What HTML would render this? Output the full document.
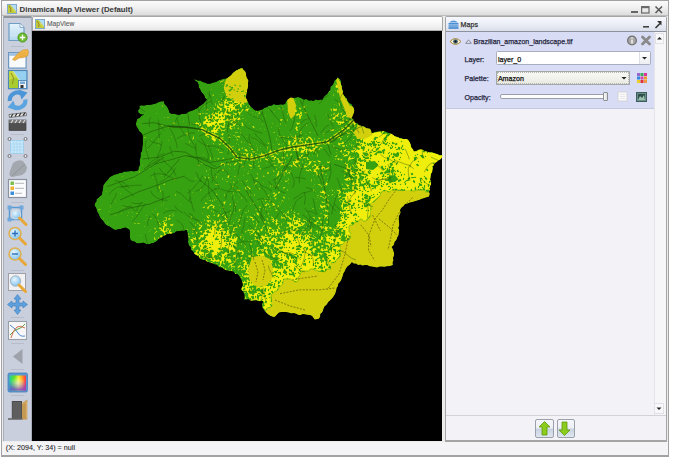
<!DOCTYPE html>
<html><head><meta charset="utf-8">
<style>
*{margin:0;padding:0;box-sizing:border-box}
html,body{width:693px;height:457px;overflow:hidden;background:#fff;font-family:"Liberation Sans",sans-serif;position:relative}
.a{position:absolute}
.t{position:absolute;white-space:nowrap;font-size:7.1px;line-height:8px;color:#25253c;-webkit-text-stroke:0.25px currentColor}
svg{overflow:visible}
</style></head><body>
<!-- window frame -->
<div class="a" style="left:1px;top:0;width:668px;height:457px;background:#a2a2a2"></div>
<div class="a" style="left:2px;top:1px;width:665.5px;height:453.5px;background:#ececec"></div>
<!-- title bar -->
<div class="a" style="left:2px;top:1px;width:666px;height:15px;background:linear-gradient(#fbfbfb,#f0f0f0 45%,#dadada)"></div>
<div class="a" style="left:2px;top:15px;width:666px;height:1px;background:#bdbdbd"></div>
<svg class="a" style="left:7px;top:4px" width="10" height="10" viewBox="0 0 10 10">
<rect x="0.5" y="0.5" width="9" height="9" fill="#b4dcf2" stroke="#7fa8cc"/>
<path d="M1 9 L1 1 L3.5 1 L9 7.5 L9 9 Z" fill="#c2cc3a"/><path d="M2 2 L4 5 L3.5 8" stroke="#8c7a2a" stroke-width="0.9" fill="none"/><path d="M5 4 L8 8" stroke="#e8e070" stroke-width="0.8"/>
</svg>
<div class="t" style="left:19.6px;top:5.8px;font-size:7.8px;font-weight:bold;color:#3a3a3a;letter-spacing:0px;-webkit-text-stroke:0.05px currentColor">Dinamica Map Viewer (Default)</div>
<svg class="a" style="left:628px;top:4px" width="38" height="10" viewBox="0 0 38 10">
<rect x="3" y="7" width="7" height="2" fill="#666"/>
<rect x="13.6" y="2.6" width="7.4" height="6.4" fill="none" stroke="#6a6a6a" stroke-width="1.2"/><rect x="13.6" y="2.4" width="7.4" height="1.8" fill="#6a6a6a"/>
<path d="M27.5 2.5 L34 9 M34 2.5 L27.5 9" stroke="#555" stroke-width="1.5"/>
</svg>

<!-- left toolbar -->
<div class="a" style="left:3px;top:16px;width:29px;height:425px;background:#a9aeb8"></div>
<div class="a" style="left:4px;top:18px;width:27px;height:423px;background:#c9cfdc"></div>
<div class="a" style="left:4px;top:16px;width:27px;height:2px;background:#8f949c"></div>

<svg class="a" style="left:0;top:0" width="40" height="457" viewBox="0 0 40 457">
<defs>
<linearGradient id="pg" x1="0" y1="0" x2="0" y2="1"><stop offset="0" stop-color="#e6f4fc"/><stop offset="1" stop-color="#b4d8ee"/></linearGradient>
<linearGradient id="mg" x1="0" y1="0" x2="0" y2="1"><stop offset="0" stop-color="#ffffff"/><stop offset="1" stop-color="#b8d8f0"/></linearGradient>
<radialGradient id="lens" cx="0.4" cy="0.35" r="0.7"><stop offset="0" stop-color="#e8f6ff"/><stop offset="1" stop-color="#7cc0ec"/></radialGradient>
<linearGradient id="rb" x1="0" y1="0" x2="1" y2="1"><stop offset="0" stop-color="#ff3030"/><stop offset="0.25" stop-color="#ffd020"/><stop offset="0.5" stop-color="#40e040"/><stop offset="0.75" stop-color="#20b0ff"/><stop offset="1" stop-color="#c040ff"/></linearGradient>
<linearGradient id="hue" x1="0" y1="0" x2="1" y2="0"><stop offset="0" stop-color="#20d0a0"/><stop offset="0.3" stop-color="#60e020"/><stop offset="0.55" stop-color="#f0f020"/><stop offset="0.8" stop-color="#ff9020"/><stop offset="1" stop-color="#ff3050"/></linearGradient>
<linearGradient id="sat" x1="0" y1="0" x2="0" y2="1"><stop offset="0.35" stop-color="#6040ff" stop-opacity="0"/><stop offset="1" stop-color="#8040e0" stop-opacity="0.85"/></linearGradient>
<radialGradient id="wc" cx="0.5" cy="0.5" r="0.45"><stop offset="0" stop-color="#fff" stop-opacity="0.55"/><stop offset="1" stop-color="#fff" stop-opacity="0"/></radialGradient>
</defs>
<!-- separators -->
<g fill="#b8bdcb">
<rect x="11" y="46" width="13" height="1"/>
<rect x="11" y="134" width="13" height="1"/>
<rect x="11" y="202" width="13" height="1"/>
<rect x="11" y="270" width="13" height="1"/>
<rect x="11" y="317" width="13" height="1"/>
<rect x="11" y="343" width="13" height="1"/>
<rect x="11" y="369" width="13" height="1"/>
<rect x="11" y="395" width="13" height="1"/>
</g>
<!-- 1 new doc -->
<path d="M9 23.5 L20 23.5 L24 27.5 L24 40.5 L9 40.5 Z" fill="url(#pg)" stroke="#6f9ec4" stroke-width="1.2"/>
<path d="M20 23.5 L20 27.5 L24 27.5" fill="#fff" stroke="#6f9ec4" stroke-width="0.8"/>
<rect x="10" y="35" width="13" height="1" fill="#d4e6f2"/>
<circle cx="22.5" cy="37.5" r="4.6" fill="#6cbc2c" stroke="#3f8a18" stroke-width="0.8"/>
<path d="M22.5 34.8 V40.2 M19.8 37.5 H25.2" stroke="#fff" stroke-width="1.4"/>
<!-- 2 window + hand -->
<rect x="8.6" y="52.6" width="17.5" height="15.5" fill="#f8fafc" stroke="#6f98c0" stroke-width="1.2"/>
<rect x="9.2" y="53.2" width="16.3" height="2.6" fill="#9cc0e2"/>
<path d="M12.5 59.5 L16 55.5 L19 52.5 L23 50 L27.5 49.5 L28.5 52 L27.5 56 L23.5 57.5 L19 58 L15 60.5 Z" fill="#f2b648" stroke="#d08e2a" stroke-width="0.6"/>
<path d="M19 55 L26 52.5 M19.5 56.8 L26.5 55" stroke="#d89a38" stroke-width="0.5"/>
<!-- 3 map + floppy -->
<rect x="8.5" y="70.5" width="18.5" height="18.2" fill="#96d0f0" stroke="#4e86b8" stroke-width="1.2"/>
<path d="M9.2 71.2 L13 71.2 L22 84 L20 88 L9.2 88 Z" fill="#a8cc30"/>
<path d="M9.2 71.2 L13 71.2 L17 77 L9.2 80 Z" fill="#c8d840"/>
<path d="M11 73 L13.5 78 L12.5 84" stroke="#8a8a28" stroke-width="0.9" fill="none"/>
<path d="M13 71.2 L22 84" stroke="#e8f0a0" stroke-width="0.8"/>
<rect x="18.5" y="80.5" width="8" height="8" fill="#eef4fa" stroke="#4e86b8" stroke-width="0.9"/>
<rect x="20" y="81.5" width="5" height="2.5" fill="#7aaad6"/>
<rect x="20.5" y="85" width="3" height="3" fill="#333"/>
<!-- 4 refresh -->
<path d="M9.8 101 A7.6 7.6 0 0 1 21.5 93.8" stroke="#4c96d8" stroke-width="4.2" fill="none"/>
<path d="M18.5 89.5 L27.5 92.5 L21.5 99.5 Z" fill="#4c96d8"/>
<path d="M25.4 99.5 A7.6 7.6 0 0 1 13.6 106.6" stroke="#5aa4e0" stroke-width="4.2" fill="none"/>
<path d="M16.5 110.5 L7.5 107.5 L13.5 100.5 Z" fill="#5aa4e0"/>
<!-- 5 clapper -->
<rect x="9" y="120" width="17" height="10.5" fill="#505050" stroke="#333" stroke-width="0.6"/>
<rect x="9" y="120" width="17" height="3" fill="#777"/>
<path d="M9 114.5 L26 112.5 L26.5 115.5 L9.5 117.5 Z" fill="#eee" stroke="#333" stroke-width="0.6"/>
<path d="M11 117 L13 114 M15 116.5 L17 113.5 M19 116 L21 113 M23 115.5 L25 112.8" stroke="#333" stroke-width="1.3"/>
<path d="M11 123 L13 120 M15 123 L17 120 M19 123 L21 120 M23 123 L25 120" stroke="#ddd" stroke-width="1.2"/>
<!-- 6 selection grid -->
<rect x="10.5" y="140.5" width="13" height="13" fill="#c8e8fa" stroke="#8ccaf0" stroke-width="0.6"/>
<path d="M10.5 144 H23.5 M10.5 147 H23.5 M10.5 150 H23.5 M14 140.5 V153.5 M17 140.5 V153.5 M20 140.5 V153.5" stroke="#7cbcea" stroke-width="0.6" stroke-dasharray="1 1"/>
<g fill="#eef" stroke="#666" stroke-width="0.9"><circle cx="9.5" cy="139" r="1.5"/><circle cx="25.5" cy="139" r="1.5"/><circle cx="9.5" cy="156" r="1.5"/><circle cx="25.5" cy="156" r="1.5"/></g>
<!-- 7 gray blob -->
<path d="M13 163 Q18 159 23 161 L27 167 Q27 172 22 175 L12 177 Q8 176 10 171 Z" fill="#a3a7ae"/>
<path d="M12 176 L25 164" stroke="#8a8e94" stroke-width="0.8"/>
<!-- 8 legend -->
<rect x="8.5" y="179.5" width="18" height="18" fill="#fafcfe" stroke="#8c939e" stroke-width="1.2"/>
<rect x="10.5" y="181.5" width="3.5" height="3.5" fill="#7ac04a"/>
<rect x="10.5" y="186.5" width="3.5" height="3.5" fill="#f0b030"/>
<rect x="10.5" y="191.5" width="3.5" height="3.5" fill="#3a90d8"/>
<path d="M15 183.3 H24 M15 188.3 H24 M15 193.3 H22" stroke="#999" stroke-width="0.7"/>
<!-- 9 zoom selection -->
<rect x="9.5" y="207.5" width="12" height="12" fill="none" stroke="#5c9ad4" stroke-width="1.5"/>
<g fill="#6ea8dc"><rect x="7.5" y="205.5" width="4" height="4"/><rect x="19.5" y="205.5" width="4" height="4"/><rect x="7.5" y="217.5" width="4" height="4"/></g>
<circle cx="16" cy="214.5" r="4.5" fill="url(#lens)" stroke="#dcdfe6" stroke-width="1"/>
<path d="M19.5 218 L26 224.5" stroke="#e8a838" stroke-width="3" stroke-linecap="round"/>
<!-- 10 zoom in -->
<circle cx="15" cy="233.5" r="6" fill="url(#lens)" stroke="#e0b050" stroke-width="1.5"/>
<path d="M15 230.5 V236.5 M12 233.5 H18" stroke="#2b6fb8" stroke-width="1.4"/>
<path d="M19.5 238 L25.5 244" stroke="#e8a838" stroke-width="3" stroke-linecap="round"/>
<!-- 11 zoom out -->
<circle cx="15" cy="254" r="6" fill="url(#lens)" stroke="#e0b050" stroke-width="1.5"/>
<path d="M12 254 H18" stroke="#2b6fb8" stroke-width="1.4"/>
<path d="M19.5 258.5 L25.5 264.5" stroke="#e8a838" stroke-width="3" stroke-linecap="round"/>
<!-- 12 zoom extent -->
<rect x="8.5" y="273.5" width="17" height="17" fill="#f2f2f4" stroke="#a0a0a8" stroke-width="1"/>
<circle cx="15.5" cy="281" r="5.2" fill="url(#lens)" stroke="#a8b4c0" stroke-width="1"/>
<path d="M19 285 L25.5 291.5" stroke="#e8a838" stroke-width="3" stroke-linecap="round"/>
<!-- 13 pan -->
<path d="M17.5 294.5 L21 299 L19 299 L19 303 L23 303 L23 301 L27.5 304.5 L23 308 L23 306 L19 306 L19 310 L21 310 L17.5 314.5 L14 310 L16 310 L16 306 L12 306 L12 308 L7.5 304.5 L12 301 L12 303 L16 303 L16 299 L14 299 Z" fill="#5ea0dc" stroke="#3d7ec0" stroke-width="0.6"/>
<!-- 14 graph -->
<rect x="8.5" y="321.5" width="18" height="18" fill="#f8f8fa" stroke="#9aa0a8" stroke-width="1.1"/>
<path d="M10 325 Q16 329 18 333 Q20 337 25 336" stroke="#4a8ad0" stroke-width="1" fill="none"/>
<path d="M10 335 Q14 330 18 329 Q22 328 25 324" stroke="#5aa040" stroke-width="1" fill="none"/>
<path d="M11 338 Q13 330 17 327 Q20 325 25 328" stroke="#d06040" stroke-width="0.9" fill="none"/>
<!-- 15 triangle -->
<path d="M22.5 349 L22.5 364 L13 356.5 Z" fill="#9ea2aa"/>
<!-- 16 color -->
<rect x="8" y="373" width="19.5" height="19" rx="1.5" fill="#5a98d0" stroke="#4480bc" stroke-width="0.8"/>
<rect x="9.5" y="375.5" width="16.5" height="15" fill="url(#hue)"/>
<rect x="9.5" y="375.5" width="16.5" height="15" fill="url(#sat)"/>
<rect x="9.5" y="375.5" width="16.5" height="15" fill="url(#wc)"/>
<!-- 17 door -->
<rect x="11.8" y="401" width="10.2" height="17.5" fill="#4c4c4c"/>
<rect x="12.5" y="402" width="8.8" height="16.5" fill="#5e5e5e"/>
<path d="M22 403 L27.3 399.5 L27.3 419.5 L22 419.5 Z" fill="#c69a52"/>
<path d="M22.5 404 L26.5 401.5 L26.5 418" stroke="#e0b878" stroke-width="0.7" fill="none"/>
<rect x="8" y="418.3" width="14.5" height="1.4" fill="#5a5a5a"/>
</svg>


<!-- map view -->
<div class="a" style="left:32px;top:16px;width:411px;height:15px;background:#a7a7a7;border-radius:2px 2px 0 0"></div>
<div class="a" style="left:33px;top:17px;width:409px;height:14px;background:linear-gradient(#fefefe,#f6f6f6 50%,#e6e6e6);border-radius:1px 1px 0 0"></div>
<div class="a" style="left:33px;top:30px;width:409px;height:1px;background:#b0b0b0"></div>
<svg class="a" style="left:35px;top:19px" width="10" height="10" viewBox="0 0 10 10">
<rect x="0.5" y="0.5" width="9" height="9" fill="#b4dcf2" stroke="#7fa8cc"/>
<path d="M1 9 L1 1 L3.5 1 L9 7.5 L9 9 Z" fill="#c2cc3a"/><path d="M2 2 L4 5 L3.5 8" stroke="#8c7a2a" stroke-width="0.9" fill="none"/><path d="M5 4 L8 8" stroke="#e8e070" stroke-width="0.8"/>
</svg>
<div class="t" style="left:46.9px;top:20.3px;font-size:6.7px;color:#5c5c5c;-webkit-text-stroke:0.1px currentColor">MapView</div>
<div class="a" style="left:32px;top:31px;width:410px;height:410px;background:#000"></div>

<!-- maps panel -->
<div class="a" style="left:445px;top:16px;width:222px;height:425.5px;background:#a5a5a5;border-radius:2px 2px 0 0"></div>
<div class="a" style="left:446px;top:17px;width:220px;height:423px;background:#f3f3f7"></div>
<div class="a" style="left:446px;top:17px;width:220px;height:14px;background:linear-gradient(#f6f8fd,#eceff7 50%,#d9deea)"></div>
<div class="a" style="left:446px;top:30.5px;width:220px;height:1.5px;background:#8e929c"></div>
<svg class="a" style="left:448px;top:19px" width="11" height="10" viewBox="0 0 11 10">
<path d="M1 3.5 Q5.5 -0.5 10 3.5 Z" fill="#5a9ad8"/>
<rect x="0.5" y="4" width="10" height="1.6" fill="#4a8ed6"/><rect x="0.5" y="6.2" width="10" height="1.6" fill="#5a9ad8"/><rect x="0.5" y="8.2" width="10" height="1.6" fill="#3e86d0"/>
</svg>
<div class="t" style="left:460.6px;top:20.5px;font-size:7.1px;color:#333">Maps</div>
<svg class="a" style="left:640px;top:19px" width="24" height="10" viewBox="0 0 24 10">
<rect x="3" y="7" width="6" height="1.6" fill="#444"/>
<path d="M15.5 9 L20 4.5" stroke="#333" stroke-width="1.6"/><path d="M17 2 L21.5 2 L21.5 6.5 Z" fill="#333"/>
</svg>
<!-- layer item -->
<div class="a" style="left:446px;top:32px;width:208px;height:77px;background:#d8ddf5"></div>
<div class="a" style="left:446px;top:108px;width:208px;height:1px;background:#c3c8de"></div>
<!-- scrollbar -->
<div class="a" style="left:653.5px;top:32px;width:12.5px;height:383px;background:#f6f6f9;border-left:1px solid #e4e4ea"></div>
<div class="a" style="left:655px;top:33px;width:9px;height:11px;background:#f8f8fa;border:1px solid #e0e0e6"></div>
<svg class="a" style="left:655px;top:33px" width="9" height="11"><path d="M2 6.5 L4.5 4 L7 6.5Z" fill="#222"/></svg>
<div class="a" style="left:654px;top:403px;width:10px;height:11px;background:#f8f8fa;border:1px solid #e0e0e6"></div>
<svg class="a" style="left:654px;top:403px" width="10" height="11"><path d="M2.5 4.5 L5 7 L7.5 4.5Z" fill="#222"/></svg>
<div class="a" style="left:446px;top:415px;width:220px;height:1px;background:#d2d2d8"></div>
<!-- eye -->
<svg class="a" style="left:449px;top:37px" width="13" height="9" viewBox="0 0 13 9">
<path d="M1 4.5 Q6.5 -1.5 12 4.5 Q6.5 10.5 1 4.5Z" fill="#f4ecd0" stroke="#b08838" stroke-width="1"/>
<circle cx="6.5" cy="4.5" r="2.3" fill="#3a6070"/><circle cx="6.5" cy="4.5" r="1" fill="#111"/>
</svg>
<svg class="a" style="left:465px;top:39px" width="7" height="5" viewBox="0 0 7 5"><path d="M0.7 4.3 L3.5 0.8 L6.3 4.3Z" fill="#e6e8f4" stroke="#7a7c90" stroke-width="0.9"/></svg>
<div class="t" style="left:473.6px;top:37.8px;font-size:7.0px;color:#26263e">Brazilian_amazon_landscape.tif</div>
<svg class="a" style="left:626px;top:35px" width="27" height="12" viewBox="0 0 27 12">
<circle cx="6" cy="5.5" r="5" fill="#737373"/><circle cx="6" cy="5.5" r="3.7" fill="#a6a6a6"/>
<rect x="5.2" y="4.6" width="1.6" height="4" fill="#f0f0f0"/><rect x="5.2" y="2.4" width="1.6" height="1.4" fill="#f0f0f0"/>
<path d="M16.5 2 L23.5 9 M23.5 2 L16.5 9" stroke="#8a8a8a" stroke-width="2.8" stroke-linecap="round"/>
</svg>
<div class="t" style="left:464.6px;top:56px">Layer:</div>
<div class="t" style="left:464.6px;top:75px">Palette:</div>
<div class="t" style="left:464.6px;top:94px">Opacity:</div>
<!-- layer input -->
<div class="a" style="left:496px;top:51px;width:155px;height:14px;background:#fff;border:1px solid #a8adc0;border-radius:1.5px"></div>
<div class="a" style="left:639px;top:52px;width:11px;height:12px;background:linear-gradient(#fff,#eceef2);border-left:1px solid #dcdfe8"></div>
<svg class="a" style="left:639px;top:52px" width="11" height="12"><path d="M3 5 L5.5 7.5 L8 5Z" fill="#222"/></svg>
<div class="t" style="left:497.9px;top:56px;color:#111">layer_0</div>
<!-- palette combo -->
<div class="a" style="left:496px;top:71px;width:134px;height:14px;background:linear-gradient(#f8f9f4,#e9ebe3);border:1px solid #a3a7a8;outline:1px dotted #b8b8b0;outline-offset:-2px"></div>
<svg class="a" style="left:619px;top:72px" width="10" height="12"><path d="M2.5 5 L5 7.5 L7.5 5Z" fill="#222"/></svg>
<div class="t" style="left:497.9px;top:75px;color:#111">Amazon</div>
<svg class="a" style="left:637px;top:73px" width="10" height="10" viewBox="0 0 10 10">
<rect x="0" y="0" width="3" height="3" fill="#9966cc"/><rect x="3.5" y="0" width="3" height="3" fill="#33aa55"/><rect x="7" y="0" width="3" height="3" fill="#dd3399"/>
<rect x="0" y="3.5" width="3" height="3" fill="#3388dd"/><rect x="3.5" y="3.5" width="3" height="3" fill="#cc44aa"/><rect x="7" y="3.5" width="3" height="3" fill="#ee9922"/>
<rect x="0" y="7" width="3" height="3" fill="#eecc22"/><rect x="3.5" y="7" width="3" height="3" fill="#dd3333"/><rect x="7" y="7" width="3" height="3" fill="#ee9944"/>
</svg>
<!-- slider -->
<div class="a" style="left:500px;top:94px;width:107px;height:5px;background:#fdfdfd;border:1px solid #9a9eaa;border-radius:2px"></div>
<div class="a" style="left:603px;top:92px;width:5px;height:9px;background:linear-gradient(90deg,#fafafa,#dcdcdc);border:1px solid #8c9098;border-radius:1px"></div>
<svg class="a" style="left:617px;top:91px" width="11" height="11" viewBox="0 0 11 11">
<rect x="1" y="1" width="9" height="9" fill="#fafafa" stroke="#d4d4d8"/><path d="M3 3.5h5M3 5.5h5M3 7.5h5" stroke="#e2e2e6" stroke-width="0.8"/>
</svg>
<svg class="a" style="left:636px;top:92px" width="11" height="10" viewBox="0 0 11 10">
<rect x="0.5" y="0.5" width="10" height="9" fill="#6b8f8a" stroke="#3d5e5a"/><rect x="2" y="2" width="7" height="6" fill="#2e4e4a"/><path d="M2 8 L4 4 L6 6 L8 3 L9 8Z" fill="#9cc0b0"/>
</svg>
<!-- up/down buttons -->
<div class="a" style="left:535px;top:419px;width:19px;height:18.5px;background:linear-gradient(#f4f6fa 0%,#eef0f6 45%,#c9d2e0 55%,#dfe6ee);border:1px solid #9aa0ac;border-radius:2px"></div>
<div class="a" style="left:557px;top:419px;width:18px;height:18.5px;background:linear-gradient(#f4f6fa 0%,#eef0f6 45%,#c9d2e0 55%,#dfe6ee);border:1px solid #9aa0ac;border-radius:2px"></div>
<svg class="a" style="left:535px;top:419px" width="40" height="19" viewBox="0 0 40 19">
<path d="M9.5 2.5 L15 8 L12 8 L12 16 L7 16 L7 8 L4 8Z" fill="#8ccc1c" stroke="#5c9a10" stroke-width="0.8"/>
<path d="M29.5 16.5 L35 11 L32 11 L32 3 L27 3 L27 11 L24 11Z" fill="#8ccc1c" stroke="#5c9a10" stroke-width="0.8"/>
</svg>

<!-- status bar -->
<div class="a" style="left:2px;top:441.5px;width:665.5px;height:13px;background:#f4f4f7"></div>
<div class="t" style="left:5.8px;top:444.2px;font-size:7.2px;color:#2a2a2a;-webkit-text-stroke:0.1px currentColor">(X: 2094, Y: 34) = null</div>

<svg class="a" style="left:0;top:0" width="693" height="457" viewBox="0 0 693 457">
<defs><clipPath id="cl"><polygon points="139.3,105.8 141.6,105.2 144.1,105.5 146.4,105.0 148.8,105.0 151.3,104.6 153.8,104.0 156.3,103.2 158.6,101.9 161.1,101.2 163.8,101.3 164.7,103.9 166.6,106.0 167.9,108.0 168.9,110.2 169.4,112.5 171.7,113.9 174.4,113.7 176.9,114.4 179.3,114.7 181.6,113.9 184.0,113.9 186.3,113.5 188.9,111.6 191.9,110.7 194.4,109.5 196.9,108.4 199.0,106.5 201.3,105.0 203.4,103.4 205.2,101.5 206.9,99.4 204.9,97.9 204.4,95.4 202.8,93.7 201.3,91.9 200.1,89.5 198.7,87.2 198.5,84.4 197.4,82.2 195.3,80.7 193.8,78.8 195.9,79.7 198.0,80.6 200.4,80.6 202.6,81.9 205.0,82.5 207.7,83.7 210.7,83.5 213.1,82.4 215.9,82.0 218.2,80.6 221.0,79.6 223.8,78.8 226.6,78.2 229.1,76.8 231.3,75.0 233.1,72.6 235.3,70.8 237.9,69.4 240.1,68.2 242.6,67.9 243.4,70.1 245.4,71.3 246.0,74.1 246.3,76.9 248.4,80.6 247.9,83.1 248.1,85.6 247.5,88.1 247.0,90.4 246.7,92.8 246.3,95.2 245.6,97.5 246.9,99.9 248.3,102.3 249.3,104.9 251.3,106.9 253.0,108.4 254.6,110.0 256.9,110.7 259.6,110.3 262.2,109.5 264.4,107.8 266.9,107.1 268.9,105.4 271.7,105.6 273.8,104.1 276.0,104.8 278.3,104.7 280.5,104.2 282.8,104.4 285.0,104.1 286.0,101.5 287.8,99.4 290.7,97.5 293.2,97.9 295.7,97.4 298.2,97.1 301.1,97.9 303.8,99.4 306.4,99.0 308.7,100.6 311.3,100.3 313.6,100.9 315.7,99.3 318.1,100.2 320.2,99.4 322.5,99.4 323.5,97.2 325.1,95.5 327.1,94.0 328.2,91.9 330.1,89.9 330.4,86.8 332.6,84.9 333.8,82.5 334.5,80.2 336.6,79.0 337.6,76.9 340.4,79.7 341.3,81.8 341.1,84.3 342.3,86.3 342.0,88.8 343.2,91.0 342.9,93.4 344.1,95.6 345.6,97.3 347.2,99.0 347.9,101.3 349.4,103.0 351.6,103.9 352.6,106.0 354.0,108.2 354.4,110.7 353.7,113.2 352.5,115.4 351.8,117.9 353.8,120.1 354.8,122.8 357.4,123.1 359.2,125.3 361.7,125.8 364.0,126.2 365.9,127.9 368.1,128.6 370.5,128.7 371.2,131.1 371.5,133.6 374.5,131.7 376.7,131.4 378.9,131.2 381.1,131.2 383.3,130.7 385.9,131.8 388.5,132.7 391.2,133.6 393.1,134.8 394.8,136.2 397.1,136.6 399.1,137.6 401.3,138.0 403.5,138.9 405.9,138.7 408.0,139.6 409.9,142.5 411.2,144.6 411.2,147.3 412.9,149.2 413.9,151.4 416.4,150.5 418.8,149.4 421.6,149.3 424.1,150.6 426.7,151.4 429.3,152.2 432.1,151.9 434.6,153.3 437.2,154.1 439.7,154.8 442.4,155.3 442.1,157.6 440.5,159.3 438.4,160.4 436.6,161.9 434.6,163.2 433.3,166.1 432.6,169.1 432.2,171.8 430.9,174.3 430.6,177.0 430.1,179.4 431.2,181.9 431.0,184.3 429.9,186.7 430.1,189.2 429.0,191.5 429.7,194.1 428.9,196.4 426.5,197.3 424.1,197.9 421.7,198.8 419.4,199.8 417.0,200.5 414.6,201.3 412.2,202.0 409.7,202.4 407.5,203.6 405.0,204.0 403.5,206.1 401.3,207.7 400.0,210.0 400.5,212.7 399.3,215.2 398.7,217.8 398.8,220.5 399.1,222.9 399.2,225.3 398.3,227.7 399.2,230.1 398.8,232.5 398.5,235.1 397.3,237.3 396.4,239.7 394.5,241.9 393.7,244.9 391.6,246.9 393.1,249.8 394.0,252.9 394.0,255.3 393.0,257.7 393.4,260.2 392.5,262.5 392.8,265.0 389.9,266.1 386.8,266.2 384.4,266.8 382.0,266.6 379.5,266.5 377.2,267.4 374.7,266.9 372.1,266.6 369.6,266.2 367.2,265.0 364.9,265.0 362.6,265.5 360.3,264.5 358.0,265.0 356.2,263.5 353.7,263.5 351.9,262.0 349.9,264.6 347.3,266.6 345.7,268.7 344.8,271.1 343.4,273.3 342.7,275.8 341.9,277.9 341.2,280.1 339.9,282.0 338.2,283.7 337.9,286.1 336.6,288.0 336.0,291.1 335.0,294.1 332.9,297.3 331.4,299.0 329.9,300.6 328.2,302.1 326.7,304.5 324.4,306.5 323.4,309.2 322.3,311.9 320.2,314.0 320.2,316.6 318.7,318.7 314.7,319.5 312.3,316.3 310.1,314.9 307.5,314.8 305.1,314.2 302.8,314.0 300.4,314.9 298.0,314.8 295.8,313.5 293.4,312.9 290.8,313.4 288.5,312.4 286.1,312.0 283.8,311.9 281.4,312.1 279.0,312.4 277.4,313.9 276.0,315.8 274.2,317.1 271.0,316.3 268.7,314.7 266.5,313.0 264.7,310.8 262.3,307.6 262.0,304.4 263.1,301.3 260.7,301.0 258.3,301.2 256.0,300.2 253.6,300.5 251.1,301.0 248.9,299.5 246.4,299.6 244.0,299.7 244.4,297.0 244.2,294.3 243.3,291.7 240.9,289.4 242.5,285.4 242.3,282.0 240.9,279.0 239.4,276.6 237.7,274.3 235.2,273.9 233.6,271.8 231.3,271.1 229.0,271.1 226.9,270.4 224.8,269.6 222.9,268.3 220.7,267.5 218.6,266.7 216.9,264.9 214.6,264.4 212.5,263.5 210.0,262.8 207.5,262.0 205.4,260.2 202.7,259.9 200.3,258.9 198.8,256.7 196.5,255.4 194.4,253.7 193.0,251.5 191.1,249.7 190.5,247.0 188.5,244.8 188.0,242.1 188.2,239.6 188.1,237.1 187.6,234.7 187.3,232.2 186.5,229.8 184.1,231.1 181.3,230.6 178.8,231.3 176.2,231.4 174.1,233.2 171.6,233.5 169.1,234.1 166.6,234.4 164.7,235.5 162.8,236.8 160.9,237.9 158.7,238.6 157.4,240.8 155.5,241.9 153.5,243.0 151.3,243.6 148.8,244.2 146.4,244.3 143.9,242.8 141.5,243.0 139.0,243.6 136.6,243.3 134.8,241.8 132.5,241.2 130.5,240.0 129.9,237.5 129.7,234.9 129.9,232.3 129.4,229.7 127.3,228.5 125.0,227.5 122.9,228.2 120.7,228.9 118.5,229.1 116.4,229.9 114.1,229.7 111.9,228.2 109.9,226.7 107.4,225.7 105.3,224.2 103.1,220.9 101.1,219.1 99.7,216.8 98.7,214.3 97.4,212.2 96.7,209.9 95.9,207.6 94.4,205.6 95.0,203.3 96.3,201.4 96.6,199.0 98.5,197.7 100.1,196.0 102.0,194.7 102.1,192.5 102.5,190.3 103.1,188.1 103.1,185.9 104.3,183.8 105.8,181.8 108.0,179.5 109.7,176.9 112.2,175.8 114.5,174.5 117.1,174.0 119.6,172.9 122.0,172.8 124.2,171.5 126.7,171.6 129.0,171.3 131.4,171.0 133.8,171.3 136.1,171.0 138.3,170.0 138.5,167.6 139.7,165.3 140.0,162.9 139.5,160.4 140.3,158.1 140.6,155.7 140.5,153.3 142.0,151.1 142.2,148.7 142.3,146.3 142.9,143.9 142.8,141.5 142.6,139.2 142.7,136.8 142.3,134.4 140.9,132.4 138.8,130.9 138.0,128.5 136.4,126.6 135.9,123.9 136.4,121.3 137.3,118.7 139.8,117.7 141.5,115.4 144.2,114.7 141.0,114.4 138.3,112.8 138.0,110.4 139.6,108.2"/></clipPath></defs>
<g clip-path="url(#cl)">
<polygon points="139.3,105.8 141.6,105.2 144.1,105.5 146.4,105.0 148.8,105.0 151.3,104.6 153.8,104.0 156.3,103.2 158.6,101.9 161.1,101.2 163.8,101.3 164.7,103.9 166.6,106.0 167.9,108.0 168.9,110.2 169.4,112.5 171.7,113.9 174.4,113.7 176.9,114.4 179.3,114.7 181.6,113.9 184.0,113.9 186.3,113.5 188.9,111.6 191.9,110.7 194.4,109.5 196.9,108.4 199.0,106.5 201.3,105.0 203.4,103.4 205.2,101.5 206.9,99.4 204.9,97.9 204.4,95.4 202.8,93.7 201.3,91.9 200.1,89.5 198.7,87.2 198.5,84.4 197.4,82.2 195.3,80.7 193.8,78.8 195.9,79.7 198.0,80.6 200.4,80.6 202.6,81.9 205.0,82.5 207.7,83.7 210.7,83.5 213.1,82.4 215.9,82.0 218.2,80.6 221.0,79.6 223.8,78.8 226.6,78.2 229.1,76.8 231.3,75.0 233.1,72.6 235.3,70.8 237.9,69.4 240.1,68.2 242.6,67.9 243.4,70.1 245.4,71.3 246.0,74.1 246.3,76.9 248.4,80.6 247.9,83.1 248.1,85.6 247.5,88.1 247.0,90.4 246.7,92.8 246.3,95.2 245.6,97.5 246.9,99.9 248.3,102.3 249.3,104.9 251.3,106.9 253.0,108.4 254.6,110.0 256.9,110.7 259.6,110.3 262.2,109.5 264.4,107.8 266.9,107.1 268.9,105.4 271.7,105.6 273.8,104.1 276.0,104.8 278.3,104.7 280.5,104.2 282.8,104.4 285.0,104.1 286.0,101.5 287.8,99.4 290.7,97.5 293.2,97.9 295.7,97.4 298.2,97.1 301.1,97.9 303.8,99.4 306.4,99.0 308.7,100.6 311.3,100.3 313.6,100.9 315.7,99.3 318.1,100.2 320.2,99.4 322.5,99.4 323.5,97.2 325.1,95.5 327.1,94.0 328.2,91.9 330.1,89.9 330.4,86.8 332.6,84.9 333.8,82.5 334.5,80.2 336.6,79.0 337.6,76.9 340.4,79.7 341.3,81.8 341.1,84.3 342.3,86.3 342.0,88.8 343.2,91.0 342.9,93.4 344.1,95.6 345.6,97.3 347.2,99.0 347.9,101.3 349.4,103.0 351.6,103.9 352.6,106.0 354.0,108.2 354.4,110.7 353.7,113.2 352.5,115.4 351.8,117.9 353.8,120.1 354.8,122.8 357.4,123.1 359.2,125.3 361.7,125.8 364.0,126.2 365.9,127.9 368.1,128.6 370.5,128.7 371.2,131.1 371.5,133.6 374.5,131.7 376.7,131.4 378.9,131.2 381.1,131.2 383.3,130.7 385.9,131.8 388.5,132.7 391.2,133.6 393.1,134.8 394.8,136.2 397.1,136.6 399.1,137.6 401.3,138.0 403.5,138.9 405.9,138.7 408.0,139.6 409.9,142.5 411.2,144.6 411.2,147.3 412.9,149.2 413.9,151.4 416.4,150.5 418.8,149.4 421.6,149.3 424.1,150.6 426.7,151.4 429.3,152.2 432.1,151.9 434.6,153.3 437.2,154.1 439.7,154.8 442.4,155.3 442.1,157.6 440.5,159.3 438.4,160.4 436.6,161.9 434.6,163.2 433.3,166.1 432.6,169.1 432.2,171.8 430.9,174.3 430.6,177.0 430.1,179.4 431.2,181.9 431.0,184.3 429.9,186.7 430.1,189.2 429.0,191.5 429.7,194.1 428.9,196.4 426.5,197.3 424.1,197.9 421.7,198.8 419.4,199.8 417.0,200.5 414.6,201.3 412.2,202.0 409.7,202.4 407.5,203.6 405.0,204.0 403.5,206.1 401.3,207.7 400.0,210.0 400.5,212.7 399.3,215.2 398.7,217.8 398.8,220.5 399.1,222.9 399.2,225.3 398.3,227.7 399.2,230.1 398.8,232.5 398.5,235.1 397.3,237.3 396.4,239.7 394.5,241.9 393.7,244.9 391.6,246.9 393.1,249.8 394.0,252.9 394.0,255.3 393.0,257.7 393.4,260.2 392.5,262.5 392.8,265.0 389.9,266.1 386.8,266.2 384.4,266.8 382.0,266.6 379.5,266.5 377.2,267.4 374.7,266.9 372.1,266.6 369.6,266.2 367.2,265.0 364.9,265.0 362.6,265.5 360.3,264.5 358.0,265.0 356.2,263.5 353.7,263.5 351.9,262.0 349.9,264.6 347.3,266.6 345.7,268.7 344.8,271.1 343.4,273.3 342.7,275.8 341.9,277.9 341.2,280.1 339.9,282.0 338.2,283.7 337.9,286.1 336.6,288.0 336.0,291.1 335.0,294.1 332.9,297.3 331.4,299.0 329.9,300.6 328.2,302.1 326.7,304.5 324.4,306.5 323.4,309.2 322.3,311.9 320.2,314.0 320.2,316.6 318.7,318.7 314.7,319.5 312.3,316.3 310.1,314.9 307.5,314.8 305.1,314.2 302.8,314.0 300.4,314.9 298.0,314.8 295.8,313.5 293.4,312.9 290.8,313.4 288.5,312.4 286.1,312.0 283.8,311.9 281.4,312.1 279.0,312.4 277.4,313.9 276.0,315.8 274.2,317.1 271.0,316.3 268.7,314.7 266.5,313.0 264.7,310.8 262.3,307.6 262.0,304.4 263.1,301.3 260.7,301.0 258.3,301.2 256.0,300.2 253.6,300.5 251.1,301.0 248.9,299.5 246.4,299.6 244.0,299.7 244.4,297.0 244.2,294.3 243.3,291.7 240.9,289.4 242.5,285.4 242.3,282.0 240.9,279.0 239.4,276.6 237.7,274.3 235.2,273.9 233.6,271.8 231.3,271.1 229.0,271.1 226.9,270.4 224.8,269.6 222.9,268.3 220.7,267.5 218.6,266.7 216.9,264.9 214.6,264.4 212.5,263.5 210.0,262.8 207.5,262.0 205.4,260.2 202.7,259.9 200.3,258.9 198.8,256.7 196.5,255.4 194.4,253.7 193.0,251.5 191.1,249.7 190.5,247.0 188.5,244.8 188.0,242.1 188.2,239.6 188.1,237.1 187.6,234.7 187.3,232.2 186.5,229.8 184.1,231.1 181.3,230.6 178.8,231.3 176.2,231.4 174.1,233.2 171.6,233.5 169.1,234.1 166.6,234.4 164.7,235.5 162.8,236.8 160.9,237.9 158.7,238.6 157.4,240.8 155.5,241.9 153.5,243.0 151.3,243.6 148.8,244.2 146.4,244.3 143.9,242.8 141.5,243.0 139.0,243.6 136.6,243.3 134.8,241.8 132.5,241.2 130.5,240.0 129.9,237.5 129.7,234.9 129.9,232.3 129.4,229.7 127.3,228.5 125.0,227.5 122.9,228.2 120.7,228.9 118.5,229.1 116.4,229.9 114.1,229.7 111.9,228.2 109.9,226.7 107.4,225.7 105.3,224.2 103.1,220.9 101.1,219.1 99.7,216.8 98.7,214.3 97.4,212.2 96.7,209.9 95.9,207.6 94.4,205.6 95.0,203.3 96.3,201.4 96.6,199.0 98.5,197.7 100.1,196.0 102.0,194.7 102.1,192.5 102.5,190.3 103.1,188.1 103.1,185.9 104.3,183.8 105.8,181.8 108.0,179.5 109.7,176.9 112.2,175.8 114.5,174.5 117.1,174.0 119.6,172.9 122.0,172.8 124.2,171.5 126.7,171.6 129.0,171.3 131.4,171.0 133.8,171.3 136.1,171.0 138.3,170.0 138.5,167.6 139.7,165.3 140.0,162.9 139.5,160.4 140.3,158.1 140.6,155.7 140.5,153.3 142.0,151.1 142.2,148.7 142.3,146.3 142.9,143.9 142.8,141.5 142.6,139.2 142.7,136.8 142.3,134.4 140.9,132.4 138.8,130.9 138.0,128.5 136.4,126.6 135.9,123.9 136.4,121.3 137.3,118.7 139.8,117.7 141.5,115.4 144.2,114.7 141.0,114.4 138.3,112.8 138.0,110.4 139.6,108.2" fill="#36a211"/>
<path d="M245.25 300.25 250.75 300.75 251.25 301.75 255.75 301.75 256.25 300.75 257.75 300.75 258.75 301.75 257.75 300.25zM265.75 260.25 263.25 260.25 260.75 262.25 259.75 261.25 255.25 261.25 249.25 265.25 249.25 266.75 250.25 267.25 250.25 275.75 251.25 276.25 251.25 277.75 252.75 277.75 255.25 279.75 256.25 278.75 262.75 278.75 264.25 280.75 265.75 280.75 267.25 278.75 269.75 278.75 271.75 276.75 271.75 275.25 269.75 272.75 269.75 269.25 268.75 268.75 267.75 262.25zM429.75 192.25 425.25 192.25 424.75 190.25 415.25 190.25 414.75 191.25 391.25 190.25 389.75 192.25 388.25 192.25 385.75 190.25 384.75 191.25 382.25 191.25 380.25 194.25 380.25 195.75 373.75 202.25 370.25 203.25 370.25 205.75 371.25 206.25 371.25 209.75 370.25 210.25 370.25 216.75 365.75 221.25 363.25 221.25 361.75 219.25 360.25 219.25 357.75 222.25 355.25 222.25 352.75 225.25 350.25 225.25 349.25 226.25 349.25 231.75 351.25 233.25 350.25 238.75 348.75 240.25 345.25 241.25 342.75 244.25 340.25 245.25 340.25 249.75 341.25 250.25 340.25 256.75 336.25 260.25 335.75 262.25 334.25 262.25 333.75 263.25 331.25 262.25 330.75 269.25 327.25 269.25 324.75 272.25 317.25 271.25 316.75 270.25 314.25 270.25 313.75 269.25 310.25 269.25 308.75 271.25 302.25 271.25 300.25 274.25 300.25 275.75 298.25 277.25 298.25 280.75 296.75 282.25 295.25 282.25 290.75 279.25 284.25 279.25 283.25 280.25 283.25 283.75 278.25 288.25 278.25 289.75 276.75 291.25 275.25 291.25 271.25 295.25 272.25 305.75 270.75 307.25 267.25 308.25 265.75 311.25 262.75 308.75 262.75 307.25 262.25 308.75 269.25 315.75 270.75 315.75 273.25 317.75 275.75 317.75 276.75 315.25 279.25 312.75 290.75 312.75 291.25 313.75 294.75 313.75 295.25 314.75 297.75 314.75 298.25 315.75 301.75 315.75 302.25 314.75 311.75 315.75 315.25 320.75 319.75 319.75 319.75 318.25 320.75 317.75 320.75 314.25 322.75 312.75 323.75 308.25 327.75 305.75 327.75 304.25 330.75 301.75 330.75 300.25 334.75 296.75 334.75 295.25 336.75 292.75 336.75 290.25 337.75 289.75 337.75 287.25 338.75 286.75 338.75 284.25 340.75 282.75 340.75 281.25 343.75 276.75 343.75 273.25 345.75 271.75 346.75 268.25 351.75 264.75 352.25 262.75 354.25 264.75 357.75 264.75 358.25 265.75 361.75 265.75 362.25 266.75 368.75 265.75 369.25 266.75 371.75 266.75 372.25 267.75 385.75 267.75 386.25 266.75 391.75 266.75 392.25 265.75 393.75 265.75 393.75 257.25 394.75 256.75 394.75 252.25 393.75 251.75 392.75 247.25 394.75 245.75 395.75 241.25 396.75 240.75 397.75 237.25 399.75 235.75 399.75 230.25 398.75 229.75 398.75 227.25 399.75 226.75 399.75 215.25 401.75 213.75 400.75 209.25 402.25 207.75 403.75 207.75 405.25 204.75 408.75 204.75 410.25 202.75 418.75 201.75 421.25 199.75 423.75 199.75 426.25 197.75 428.75 197.75 430.75 194.75zM242.75 69.25 238.25 69.25 237.75 70.25 236.25 70.25 231.25 75.25 230.25 85.75 231.25 86.25 232.25 91.75 229.25 95.75 232.75 95.75 235.25 98.75 239.75 98.75 241.75 95.75 241.75 94.25 246.25 89.75 248.75 88.75 248.75 81.25 246.75 78.75 246.75 73.25z" fill="#d2cf0c" fill-rule="evenodd"/>
<path d="M262.25 303.25 262.25 304.75 262.75 304.75 262.75 303.25zM245.25 295.25 245.25 298.75 246.75 299.75zM243.25 292.25 243.25 292.75 245.75 292.75 245.75 292.25zM254.25 290.25 254.25 290.75 254.75 290.75 254.75 290.25zM260.25 282.25 260.25 282.75 261.75 282.75 261.75 282.25zM240.25 277.25 242.75 278.75 241.75 277.25zM240.25 275.25 240.25 275.75 240.75 275.75 240.75 275.25zM239.75 273.25 238.25 274.75zM234.25 273.25 235.75 274.75 235.75 273.25zM239.75 269.25 238.25 269.25 238.25 270.75zM234.25 269.25 234.25 269.75 234.75 269.75 234.75 269.25zM271.75 266.25 270.75 267.25 269.25 266.25 269.25 268.75zM273.25 265.25 273.25 265.75 273.75 265.75 273.75 265.25zM278.25 264.25 278.25 265.75 279.75 266.75 279.75 265.25zM238.25 263.25 238.25 263.75 238.75 263.75 238.75 263.25zM216.25 263.25 216.25 263.75 217.75 263.75 217.75 263.25zM275.25 262.25 275.25 265.75 276.75 265.75zM240.25 262.25 240.25 263.75 240.75 263.75 240.75 262.25zM269.25 260.25 268.25 264.75 270.25 262.75 272.75 263.75 271.75 261.25 273.75 260.25zM256.25 260.25 256.25 260.75 257.75 260.75 257.75 260.25zM266.25 259.25 266.25 260.75 266.75 260.75 266.75 259.25zM248.25 259.25 248.25 259.75 248.75 259.75 248.75 259.25zM205.25 260.25 206.25 261.75 208.75 261.75 206.75 260.75 206.75 259.25zM226.25 258.25 226.25 261.75 227.25 260.75 228.25 261.25 228.25 262.75 230.75 262.75 231.75 261.75 229.75 258.25 228.75 259.25zM245.25 257.25 245.25 258.75 246.75 258.75zM217.25 257.25 217.25 257.75 217.75 257.75 217.75 257.25zM243.75 256.25 242.75 257.25 240.25 257.25 240.25 258.75 241.75 259.75 241.75 258.25zM228.25 256.25 228.25 256.75 230.75 256.75 230.75 256.25zM248.25 255.25 248.25 256.75 252.25 258.25 252.25 260.75 251.25 261.25 251.75 262.75 251.75 261.25 253.75 260.75 253.75 258.25 251.25 257.25 250.75 255.25zM246.25 254.25 246.25 254.75 246.75 254.75 246.75 254.25zM236.75 254.25 233.25 255.25 233.25 257.75 234.25 256.75 235.25 257.25 235.25 260.75 234.25 261.25 233.25 260.25 234.25 262.75 230.25 264.25 228.25 266.25 228.75 267.75 229.75 265.25 231.25 265.25 231.25 267.75 232.25 268.75 231.25 269.25 230.75 271.25 229.25 270.25 230.25 271.75 232.75 271.75 231.75 270.75 231.75 269.25 232.75 268.75 231.75 267.75 232.25 266.75 234.75 267.75 234.75 266.25 232.25 266.25 231.75 265.25 235.75 261.75 235.75 260.25 237.25 258.75 238.75 258.75 237.75 257.25 236.75 259.25 235.75 258.75 235.75 255.25zM252.25 252.25 252.25 255.75 253.75 255.75zM250.25 250.25 250.25 250.75 250.75 250.75 250.75 250.25zM248.25 250.25 248.25 251.75 249.75 252.75zM246.25 249.25 246.25 249.75 246.75 249.75 246.75 249.25zM252.25 248.25 252.25 250.75 252.75 250.75 252.75 248.25zM318.25 246.25 317.25 247.75 319.75 248.75 319.75 246.25zM266.75 246.25 265.75 247.25 264.25 246.25 263.75 249.25 259.25 249.25 258.75 250.25 257.75 249.75 257.75 248.25 259.75 247.25 257.25 247.25 256.25 248.25 257.25 249.25 256.25 253.75 258.25 255.25 258.25 256.75 257.25 257.25 256.25 256.25 255.25 257.75 256.75 258.75 258.75 256.75 260.25 258.25 259.25 259.25 260.25 261.75 262.75 260.75 265.75 257.25 264.75 256.75 263.75 253.25 262.25 253.25 261.75 254.25 260.75 253.25 259.75 254.25 257.75 253.75 259.25 249.75 260.75 249.75 262.25 251.75 263.75 251.75 263.75 249.25 265.75 248.75 266.25 249.75 265.25 250.25 265.25 251.75 267.25 254.75 269.25 255.25 269.75 258.75 269.75 255.25 267.75 253.75 267.75 251.25 268.75 250.25 267.75 251.25 266.75 250.75 266.75 249.25 267.75 248.75zM260.75 258.25 262.75 257.75 263.25 259.75 261.25 260.25zM263.25 255.75 264.25 256.25 263.75 258.25 262.75 257.75zM258.75 255.25 259.75 254.75 261.25 256.75 259.25 257.25zM321.25 246.75 322.75 246.75 323.75 245.25 321.25 245.25zM196.75 245.25 192.25 245.25 193.25 246.75 191.25 247.75 192.75 247.75 193.25 248.75 191.25 249.75 192.75 249.75zM189.25 245.25 189.25 245.75 189.75 245.75 189.75 245.25zM140.25 244.25 140.25 244.75 140.75 244.75 140.75 244.25zM255.25 243.25 255.25 243.75 255.75 243.75 255.75 243.25zM250.25 243.25 250.25 244.75 251.75 244.75 251.75 243.25zM243.25 243.25 245.25 246.25 244.25 247.25 244.75 247.75 245.75 246.25zM241.25 243.25 241.25 244.75 241.75 244.75 241.75 243.25zM239.25 243.25 239.25 243.75 239.75 243.75 239.75 243.25zM323.25 242.25 323.25 243.75 323.75 243.75 323.75 242.25zM196.25 242.25 196.25 243.75 196.75 243.75 196.75 242.25zM252.75 240.25 251.25 240.25 251.25 241.75zM248.25 240.25 248.25 240.75 248.75 240.75 248.75 240.25zM243.25 238.25 243.25 239.75 243.75 239.75 243.75 238.25zM164.25 237.25 164.25 237.75 164.75 237.75 164.75 237.25zM157.25 237.25 159.25 239.75 160.75 239.75 159.75 238.25zM243.25 236.25 243.25 236.75 243.75 236.75 243.75 236.25zM241.75 236.25 240.25 236.25 240.25 238.75zM195.75 236.25 194.75 238.25 192.25 237.25 193.25 238.75 190.25 239.25 193.25 243.75 193.75 242.25 192.75 241.25 194.25 239.75 196.75 239.75 195.75 238.75zM192.75 239.25 193.75 238.75 194.25 239.75 193.25 240.25zM188.25 236.25 189.75 237.75 189.75 236.25zM154.25 236.25 154.25 239.75 155.75 239.75zM322.75 235.25 321.25 236.25 320.75 240.25 318.25 239.25 318.25 240.75 316.75 242.25 314.25 241.25 314.25 245.75 315.75 245.75 316.25 242.75 317.75 243.75 318.25 240.75 319.25 241.25 319.25 242.75 321.75 242.75 320.75 240.25 322.75 239.75 323.75 240.75 324.75 239.75 322.75 239.75 322.75 238.25 323.75 237.75 321.75 236.75zM160.25 235.25 160.25 236.75 161.75 237.75 162.75 235.25zM140.25 235.25 140.25 235.75 140.75 235.75 140.75 235.25zM241.25 234.25 241.25 234.75 242.75 234.75 242.75 234.25zM330.25 233.25 330.25 233.75 330.75 233.75 330.75 233.25zM193.75 233.25 192.25 233.25 192.25 234.75zM188.25 233.25 188.25 234.75 188.75 234.75 188.75 233.25zM319.25 231.25 319.75 236.75 319.75 233.25 320.75 232.25zM195.25 231.25 196.75 234.75 197.75 231.25 196.75 232.25zM192.25 231.25 192.25 231.75 192.75 231.75 192.75 231.25zM157.75 231.25 156.25 231.25 154.25 233.25 154.25 234.75 154.75 233.25zM153.75 231.25 152.25 232.75zM149.25 231.25 149.25 231.75 149.75 231.75 149.75 231.25zM317.75 230.25 315.25 231.25 317.25 232.25 317.25 233.75 315.25 234.75 317.75 233.75zM265.25 230.25 265.25 231.75 265.75 231.75 265.75 230.25zM257.25 230.25 257.25 231.75 259.75 232.75 258.75 230.25zM241.25 230.25 242.75 231.75zM180.25 230.25 180.25 230.75 181.75 230.75 181.75 230.25zM302.25 229.25 302.25 229.75 304.75 229.75 304.75 229.25zM282.25 229.25 282.25 229.75 282.75 229.75 282.75 229.25zM245.25 232.75 247.25 230.75 251.75 230.75 252.75 229.75 252.75 233.25 249.25 232.25 250.75 235.75 250.75 234.25 252.75 233.75 255.75 230.25 253.25 230.25 252.75 229.25 249.25 230.25 248.25 229.25 246.75 231.25 245.25 231.25zM249.75 233.25 250.75 232.75 251.25 233.75 250.25 234.25zM202.75 229.25 202.25 230.75 200.25 231.25 199.25 232.75 200.25 231.75 201.75 232.75zM186.25 229.25 186.25 229.75 187.75 229.75 187.75 229.25zM150.25 229.25 150.25 229.75 150.75 229.75 150.75 229.25zM191.25 228.25 192.25 229.75 194.75 229.75 194.75 228.25 193.75 229.25zM284.25 227.25 284.25 227.75 284.75 227.75 284.75 227.25zM259.25 227.25 259.25 227.75 259.75 227.75 259.75 227.25zM250.25 227.25 250.25 227.75 250.75 227.75 250.75 227.25zM155.25 227.25 154.25 228.75 155.75 229.75zM124.25 227.25 124.25 227.75 124.75 227.75 124.75 227.25zM306.25 226.25 306.25 227.75 306.75 227.75 306.75 226.25zM304.25 226.25 304.25 226.75 304.75 226.75 304.75 226.25zM144.25 226.25 144.25 226.75 144.75 226.75 144.75 226.25zM229.25 225.25 229.25 225.75 232.75 225.75 232.75 225.25zM324.25 224.25 324.25 224.75 325.75 224.75 325.75 224.25zM318.25 224.25 318.25 224.75 319.75 224.75 319.75 224.25zM264.75 224.25 262.25 227.25 262.25 228.75 260.25 229.25 261.25 231.75 262.75 229.75 262.75 227.25 264.75 225.75zM238.25 224.25 239.75 226.75 240.75 225.25zM195.25 224.25 195.25 225.75 195.75 225.75 195.75 224.25zM180.25 224.25 181.75 225.75zM281.25 223.25 281.25 225.75 281.75 225.75 281.75 223.25zM226.25 223.25 227.75 225.75 227.75 223.25zM205.25 223.25 205.25 224.75 206.25 223.75 207.25 224.25 207.25 226.75 208.25 225.75 209.75 226.75 210.75 224.25 209.25 225.25 208.75 224.25zM173.75 223.25 172.75 224.25 170.25 224.25 170.25 225.75 172.75 225.75zM137.25 223.25 137.25 223.75 139.75 223.75 139.75 223.25zM134.25 223.25 134.25 223.75 135.75 223.75 135.75 223.25zM283.25 222.25 283.25 222.75 283.75 222.75 283.75 222.25zM267.25 222.25 269.75 224.75 268.75 222.25zM251.25 222.25 252.75 222.75 253.75 224.75 253.75 223.25zM233.25 222.25 233.25 223.75 233.75 223.75 233.75 222.25zM197.25 222.25 197.25 223.75 198.75 223.75 199.25 225.75 201.25 226.25 198.25 228.25 199.75 229.75 202.75 225.25 200.25 225.25zM193.25 222.25 193.25 222.75 193.75 222.75 193.75 222.25zM159.25 222.25 159.25 223.75 160.25 224.25 159.25 225.25 159.75 225.75 160.75 224.25zM107.25 222.25 107.25 222.75 107.75 222.75 107.75 222.25zM326.25 221.25 326.25 222.75 329.75 223.75 327.75 222.75 327.75 221.25zM320.25 221.25 320.25 222.75 321.75 222.75 321.75 221.25zM279.25 221.25 279.25 221.75 279.75 221.75 279.75 221.25zM264.25 221.25 264.25 222.75 265.75 222.75 265.75 221.25zM246.25 221.25 246.25 221.75 247.75 221.75 247.75 221.25zM200.25 221.25 201.75 223.75 201.75 222.25zM150.75 221.25 149.25 222.75zM329.25 220.25 329.25 220.75 329.75 220.75 329.75 220.25zM317.75 220.25 315.75 222.25 314.25 222.25 314.25 223.75 315.75 223.75 316.25 225.75 316.75 222.25 318.75 221.75zM310.25 220.25 310.25 221.75 310.75 221.75 310.75 220.25zM308.25 220.25 309.25 224.75 311.75 226.75 309.75 224.75zM256.75 220.25 256.25 222.75 257.25 223.75 256.25 224.25 256.25 226.75 254.25 228.75 255.75 228.75 257.25 223.75 258.75 224.75 256.75 222.75zM231.25 220.25 231.25 220.75 231.75 220.75 231.75 220.25zM229.25 220.25 229.25 220.75 229.75 220.75 229.75 220.25zM206.25 220.25 208.25 222.75 209.75 220.75 210.75 222.75 210.75 220.25zM190.25 220.25 190.25 220.75 190.75 220.75 190.75 220.25zM157.25 220.25 157.25 220.75 158.75 220.75 158.75 220.25zM145.25 220.25 145.25 220.75 145.75 220.75 145.75 220.25zM303.25 219.25 303.25 220.75 305.75 220.75 306.75 222.75 306.75 221.25 305.75 220.75 306.75 219.25 305.75 220.25zM260.25 219.25 260.25 219.75 260.75 219.75 260.75 219.25zM258.25 219.25 258.25 219.75 258.75 219.75 258.75 219.25zM249.25 219.25 249.25 219.75 249.75 219.75 249.75 219.25zM240.75 219.25 238.25 219.25 239.25 220.75 237.25 221.75 238.75 221.75zM204.25 219.25 204.25 220.75 204.75 220.75 204.75 219.25zM161.75 219.25 160.25 220.75zM155.25 219.25 155.25 219.75 155.75 219.75 155.75 219.25zM336.75 218.25 335.25 219.75 336.75 219.75zM266.25 218.25 267.75 220.75 267.75 218.25zM229.25 218.25 229.25 218.75 229.75 218.75 229.75 218.25zM213.25 219.25 213.25 220.75 214.25 221.25 213.25 223.75 214.75 223.75 215.25 224.75 213.75 226.25 212.25 225.25 212.25 226.75 209.75 229.25 206.25 228.25 207.25 229.75 204.25 230.25 205.25 231.75 203.25 233.25 203.25 234.75 200.25 235.25 200.25 236.75 198.25 238.25 201.25 241.25 199.75 243.25 198.25 243.25 199.25 244.25 198.25 245.75 200.25 248.25 200.25 250.75 199.25 251.25 197.25 249.25 196.75 250.25 195.25 250.25 196.25 251.75 193.25 253.75 194.25 254.75 196.75 254.75 197.25 255.75 198.75 254.75 199.25 258.75 200.25 259.75 200.25 254.75 203.25 256.25 203.25 257.75 202.25 258.25 203.25 259.75 203.75 259.25 202.75 258.25 204.75 257.75 205.25 256.75 208.25 258.75 210.75 258.75 211.25 259.75 210.25 260.75 213.25 261.25 212.75 262.25 210.25 262.25 212.25 263.75 212.75 262.25 214.75 261.75 215.25 260.75 216.25 261.75 218.75 261.75 219.75 260.75 220.25 264.75 218.25 266.75 220.75 265.75 221.25 266.75 223.25 267.25 223.25 268.75 225.25 270.75 226.75 270.75 225.75 268.25 224.25 269.25 223.75 267.25 220.75 265.75 222.25 260.75 223.25 261.25 223.25 263.75 224.75 264.75 224.75 263.25 223.75 262.75 223.75 261.25 224.75 260.75 223.75 259.75 224.75 258.75 223.75 256.25 224.75 255.75 225.25 256.75 226.75 256.75 226.75 254.25 230.75 252.75 229.75 251.25 231.25 249.75 232.75 249.75 233.25 251.75 234.75 251.75 235.25 252.75 235.25 249.75 237.25 251.25 237.25 252.75 241.75 251.75 242.25 253.75 240.25 254.75 242.75 254.75 243.75 253.75 243.75 252.25 242.75 251.75 243.75 249.25 242.75 251.25 241.75 250.25 240.25 251.25 239.75 249.25 237.25 251.25 232.75 246.75 233.25 244.75 236.75 246.75 236.75 244.25 234.25 244.25 233.75 242.25 234.75 241.75 235.25 242.75 236.75 242.75 235.75 241.25 236.75 240.75 237.75 237.25 234.25 236.25 234.25 238.75 231.75 238.75 232.75 234.25 236.75 232.75 232.75 232.75 232.75 231.25 234.75 230.75 233.75 229.25 235.25 227.75 237.75 227.75 236.75 226.25 235.75 227.25 233.25 227.25 232.25 233.75 231.25 234.25 232.25 235.75 231.25 236.25 230.75 238.25 228.25 238.25 229.25 239.25 229.25 241.75 226.25 242.25 225.75 241.25 227.75 240.25 225.75 239.75 225.75 238.25 226.75 237.75 225.75 236.25 229.75 235.75 229.75 233.25 228.75 232.75 228.75 230.25 229.75 229.25 228.75 228.75 228.75 227.25 227.25 227.25 229.25 229.75 227.25 230.25 226.75 233.25 225.75 232.75 225.75 231.25 222.75 230.75 224.75 228.25 222.25 228.25 220.75 226.75 222.75 224.25 220.25 224.25 219.25 225.25 219.25 226.75 221.25 228.75 219.25 229.25 218.75 231.25 216.25 230.25 215.75 229.25 217.75 226.75 216.75 224.25 220.75 220.75 219.75 219.75 220.75 218.25 219.25 219.25 218.75 221.25 217.25 221.25 216.75 224.25 215.75 223.75 215.75 220.25 214.25 221.25zM211.75 258.25 212.75 257.75 214.25 259.75 212.25 260.25zM224.75 255.25 225.75 254.75 226.25 255.75 225.25 256.25zM201.75 254.25 202.75 253.75 203.25 254.75 202.25 255.25zM198.75 254.25 199.75 253.75 200.25 254.75 199.25 255.25zM216.75 252.25 217.75 251.75 218.25 252.75 217.25 253.25zM207.75 251.25 208.75 250.75 209.25 251.75 208.25 252.25zM198.25 250.75 199.25 251.25 198.75 254.25 196.75 252.75zM210.25 249.75 212.75 249.75 214.25 251.75 212.25 252.25 211.25 251.25 212.25 252.25 211.25 253.25 212.25 254.25 212.25 257.75 211.25 258.25 210.25 257.25 209.75 258.25 208.25 258.25 207.75 257.25 205.75 256.75 205.75 254.25 208.75 253.75zM202.25 248.75 203.25 249.75 205.75 248.75 206.25 249.75 208.25 250.25 207.25 251.25 208.25 252.75 205.25 253.25 204.75 257.25 203.75 256.75 203.75 252.25 200.75 251.75 200.75 250.25zM206.75 248.25 207.75 247.75 208.25 248.75 207.25 249.25zM225.75 246.75 226.25 247.75 225.25 248.75 226.75 247.75 229.25 250.25 229.25 252.75 227.25 253.25 226.75 252.25 225.25 252.25 223.75 254.25 221.25 253.25 222.25 256.75 221.25 257.25 219.25 255.25 219.25 256.75 221.25 257.25 221.25 260.75 220.25 261.25 218.75 259.25 216.25 260.25 214.75 258.75 215.75 257.25 214.25 257.25 213.75 256.25 215.25 254.75 217.75 255.75 216.75 254.25 221.25 250.75 223.75 251.75 222.75 250.75 223.75 249.25 222.75 250.25 219.25 250.25 217.75 248.25 219.75 247.75 220.25 248.75 221.75 248.75 222.25 246.75 223.25 247.75zM208.75 247.25 210.75 246.75 211.25 247.75 209.25 248.25zM231.25 244.75 232.25 245.25 231.75 247.25 230.75 246.75zM224.75 245.25 226.75 244.75 227.25 245.75 225.25 246.25zM205.75 244.75 207.25 246.75 203.25 249.25 202.75 247.25zM200.25 244.75 201.25 245.25 200.75 247.25 199.75 246.75zM226.75 244.25 227.75 243.75 228.25 244.75 227.25 245.25zM211.75 244.25 212.75 243.75 213.25 244.75 212.25 245.25zM209.75 244.25 210.75 243.75 211.25 244.75 210.25 245.25zM228.75 243.25 229.75 242.75 231.25 244.75 229.25 245.25zM225.75 243.25 226.75 242.75 227.25 243.75 226.25 244.25zM218.75 243.25 220.75 242.75 221.25 243.75 219.25 244.25zM208.75 243.25 209.75 242.75 210.25 243.75 209.25 244.25zM206.75 243.25 207.75 242.75 208.25 243.75 207.25 244.25zM204.75 243.25 205.75 242.75 206.25 243.75 205.25 244.25zM231.75 242.25 232.75 241.75 233.25 242.75 232.25 243.25zM211.75 242.25 212.75 241.75 213.25 242.75 212.25 243.25zM203.25 241.75 204.25 242.25 204.25 243.75 202.25 244.25 201.75 243.25zM218.75 241.25 219.75 240.75 220.25 241.75 219.25 242.25zM229.75 241.75 230.25 239.75 232.25 240.25 230.75 242.25zM223.75 241.75 224.25 239.75 226.25 240.25 224.75 242.25zM203.75 241.25 206.75 239.75 208.25 241.75 204.25 242.25zM234.75 237.25 235.75 236.75 236.25 237.75 235.25 238.25zM225.25 237.25 224.75 239.25 221.75 238.75 224.25 236.75zM214.75 239.25 216.75 236.75 217.25 238.75 218.75 238.75 219.25 239.75 215.25 240.25zM222.75 236.25 223.75 235.75 224.25 236.75 223.25 237.25zM221.25 235.75 222.25 236.25 221.75 238.25 220.75 237.75zM216.75 236.25 217.75 235.75 218.25 236.75 217.25 237.25zM213.25 234.75 214.25 235.25 213.75 237.25 212.75 236.75zM207.75 233.75 208.25 235.75 205.25 236.25 206.25 237.75 205.25 238.25 204.75 240.25 202.25 240.25 201.25 241.25 199.75 239.75 201.25 236.75 202.25 237.75 203.75 236.75 204.25 233.75 205.25 234.75zM223.75 234.25 225.75 232.75 227.25 234.75 224.25 235.25zM218.75 233.25 219.75 232.75 220.25 233.75 219.25 234.25zM221.25 231.75 223.25 232.25 222.75 236.25 220.75 233.75zM216.25 231.75 217.25 232.25 216.75 234.25 215.75 233.75zM219.75 230.25 221.75 229.75 222.25 230.75 220.25 231.25zM205.75 231.25 208.75 229.75 209.25 231.75 210.75 231.75 211.25 232.75 207.25 233.25zM211.25 227.75 212.25 228.25 211.75 230.25 210.75 229.75zM213.75 227.25 215.75 226.75 216.25 227.75 214.25 228.25zM211.25 218.25 211.25 218.75 211.75 218.75 211.75 218.25zM168.25 219.75 169.75 219.75 170.75 218.25 168.25 218.25zM150.25 218.25 150.25 218.75 151.75 218.75 151.75 218.25zM147.25 218.25 147.25 218.75 147.75 218.75 147.75 218.25zM103.25 218.25 103.25 218.75 103.75 218.75 103.75 218.25zM330.25 217.25 330.25 217.75 330.75 217.75 330.75 217.25zM318.25 217.25 319.25 219.75 321.25 217.75 322.75 217.75 321.25 217.25 320.25 218.25 319.75 217.25zM312.25 217.25 314.75 218.75 314.75 217.25zM236.25 217.25 236.25 217.75 236.75 217.75 236.75 217.25zM231.25 217.25 231.25 217.75 231.75 217.75 231.75 217.25zM163.25 217.25 165.75 217.75 166.25 219.75 162.25 221.25 164.25 222.25 163.25 223.25 164.25 225.75 162.25 226.25 163.25 227.25 162.75 230.25 160.75 227.25 159.25 227.25 159.25 228.75 161.25 229.25 160.25 230.75 161.75 230.75 164.25 233.25 164.25 235.75 166.75 235.75 164.75 232.75 165.25 231.75 166.75 231.75 168.25 233.75 169.75 232.75 170.25 234.75 172.75 234.75 171.75 232.25 169.75 231.75 170.75 230.75 170.75 228.25 169.75 230.25 168.75 229.75 168.75 228.25 166.25 228.25 166.25 230.75 163.75 230.75 164.75 226.25 167.75 226.25 166.75 225.75 166.75 223.25 163.75 221.75 164.25 220.75 166.75 220.75 166.75 217.25zM168.25 229.75 169.25 230.25 168.75 233.25 166.75 231.75zM166.75 229.25 167.75 228.75 168.25 229.75 167.25 230.25zM164.75 223.25 165.75 222.75 166.25 223.75 165.25 224.25zM333.25 216.25 334.75 217.75 334.75 216.25zM271.25 216.25 271.25 217.75 273.25 218.25 272.75 219.25 270.25 219.25 273.25 220.25 271.25 222.75 272.25 221.75 273.75 222.75 273.75 221.25 274.75 220.75 276.25 222.25 275.25 223.75 276.75 225.75 276.75 224.25 278.75 223.75 276.75 222.75 277.75 220.25 276.75 219.25 274.25 220.25 273.75 218.25zM274.75 220.25 275.75 219.75 276.25 220.75 275.25 221.25zM269.25 216.25 269.25 216.75 269.75 216.75 269.75 216.25zM249.25 216.25 250.25 217.75 252.25 218.25 252.25 220.75 254.75 219.75 252.75 218.75 252.75 217.25zM247.25 216.25 247.25 217.75 247.75 217.75 247.75 216.25zM242.25 216.25 242.25 216.75 242.75 216.75 242.75 216.25zM191.75 216.25 190.25 217.75 191.75 217.75zM132.25 216.25 132.25 216.75 132.75 216.75 132.75 216.25zM281.25 215.25 281.25 218.75 283.75 217.75 285.75 219.75 285.75 218.25 284.75 217.25 282.25 217.25zM264.25 215.25 264.25 215.75 264.75 215.75 264.75 215.25zM240.25 215.25 240.25 216.75 240.75 216.75 240.75 215.25zM229.25 215.25 229.25 215.75 229.75 215.75 229.75 215.25zM225.75 215.25 224.25 216.75 226.25 218.75 224.75 220.25 223.25 219.25 224.25 220.75 222.25 221.25 222.25 222.75 223.25 221.75 226.75 221.75 226.75 220.25 227.75 219.75 227.75 218.25 225.75 217.75zM225.75 219.25 226.75 218.75 227.25 219.75 226.25 220.25zM206.25 215.25 207.25 217.75 208.75 218.75 209.75 215.25 208.25 215.25 207.75 216.25zM207.75 216.25 208.75 215.75 209.25 216.75 208.25 217.25zM170.75 215.25 169.25 215.25 169.25 216.75zM146.25 215.25 146.25 215.75 146.75 215.75 146.75 215.25zM127.25 215.25 127.25 215.75 127.75 215.75 127.75 215.25zM115.25 215.25 115.25 215.75 115.75 215.75 115.75 215.25zM323.25 219.75 326.25 216.75 327.25 217.25 327.25 218.75 328.75 218.75 328.75 216.25 330.75 215.75 330.75 214.25 329.75 215.25 328.75 214.25 327.75 215.25 323.25 214.25 325.25 216.25zM326.75 216.25 327.75 215.75 328.25 216.75 327.25 217.25zM302.25 214.25 302.25 214.75 302.75 214.75 302.75 214.25zM254.25 214.25 254.25 215.75 254.75 215.75 254.75 214.25zM227.25 214.25 227.25 214.75 227.75 214.75 227.75 214.25zM219.75 214.25 218.25 214.25 217.25 216.75 218.75 216.75zM214.75 214.25 213.25 215.75 214.75 215.75zM320.25 213.25 320.25 213.75 321.75 213.75 321.75 213.25zM306.25 213.25 306.25 213.75 306.75 213.75 306.75 213.25zM267.25 213.25 268.75 214.75 268.75 213.25zM224.75 213.25 221.25 215.75 222.75 215.75zM202.25 213.25 202.25 213.75 202.75 213.75 202.75 213.25zM173.75 213.25 172.25 214.25 173.25 215.25 172.25 216.75 173.75 215.75 172.75 214.75zM158.75 213.25 157.25 213.25 157.25 216.75zM136.25 213.25 136.25 213.75 137.75 213.75 137.75 213.25zM121.25 213.25 121.25 213.75 121.75 213.75 121.75 213.25zM299.75 212.25 297.25 213.75 299.75 214.75 298.75 213.75zM256.25 212.25 257.25 214.75 258.75 215.75 258.75 213.25zM245.25 212.25 245.25 212.75 246.75 212.75 246.75 212.25zM234.25 212.25 234.25 212.75 234.75 212.75 234.75 212.25zM230.25 212.25 230.25 213.75 230.75 213.75 230.75 212.25zM220.25 212.25 220.25 212.75 220.75 212.75 220.75 212.25zM218.25 212.25 218.25 212.75 218.75 212.75 218.75 212.25zM132.25 212.25 132.25 212.75 132.75 212.75 132.75 212.25zM128.25 212.25 128.25 212.75 128.75 212.75 128.75 212.25zM305.25 211.25 305.25 211.75 305.75 211.75 305.75 211.25zM293.25 211.25 294.25 212.75 295.75 212.75zM213.25 211.25 213.25 212.75 213.75 212.75 213.75 211.25zM152.25 211.25 152.25 211.75 152.75 211.75 152.75 211.25zM109.25 211.25 109.25 211.75 109.75 211.75 109.75 211.25zM335.25 210.25 335.25 210.75 335.75 210.75 335.75 210.25zM333.25 210.25 333.25 210.75 333.75 210.75 333.75 210.25zM323.25 210.25 323.25 211.75 323.75 211.75 323.75 210.25zM298.25 210.25 298.25 210.75 299.75 210.75 299.75 210.25zM283.25 213.25 283.25 214.75 284.75 213.75 286.25 216.75 287.75 216.75 290.25 219.75 291.75 219.75 291.75 218.25 290.25 218.25 288.75 216.25 287.25 216.25 285.75 214.75 287.25 212.75 288.75 213.75 288.75 210.25 285.75 214.25zM284.75 210.25 283.25 211.75zM281.25 210.25 281.25 210.75 281.75 210.75 281.75 210.25zM248.25 210.25 248.25 211.75 248.75 211.75 248.75 210.25zM231.25 210.25 231.25 210.75 231.75 210.75 231.75 210.25zM211.25 210.25 211.25 211.75 211.75 211.75 211.75 210.25zM325.25 209.25 325.25 211.75 326.25 210.75 328.25 212.75 329.75 211.75 329.75 209.25 328.75 211.25zM291.25 209.25 291.25 210.75 291.75 210.75 291.75 209.25zM270.25 209.25 270.25 209.75 270.75 209.75 270.75 209.25zM267.25 209.25 267.25 209.75 267.75 209.75 267.75 209.25zM259.25 209.25 259.25 210.75 259.75 210.75 259.75 209.25zM255.25 209.25 255.25 209.75 256.75 209.75 256.75 209.25zM240.75 209.25 239.25 209.25 239.25 211.75zM224.25 209.25 224.25 210.75 224.75 210.75 224.75 209.25zM220.25 209.25 220.25 209.75 220.75 209.75 220.75 209.25zM155.25 209.25 155.25 209.75 155.75 209.75 155.75 209.25zM124.25 209.25 124.25 209.75 124.75 209.75 124.75 209.25zM98.25 209.25 98.25 209.75 100.75 209.75 100.75 209.25zM319.25 208.25 319.25 208.75 319.75 208.75 319.75 208.25zM312.25 208.25 312.25 208.75 313.75 208.75 313.75 208.25zM299.25 208.25 299.25 208.75 300.75 208.75 300.75 208.25zM272.25 208.25 273.75 211.75zM265.25 208.25 265.25 210.75 265.75 210.75 265.75 208.25zM263.25 208.25 263.25 208.75 263.75 208.75 263.75 208.25zM230.25 208.25 230.25 208.75 230.75 208.75 230.75 208.25zM166.25 208.25 166.25 208.75 166.75 208.75 166.75 208.25zM331.25 207.25 331.25 207.75 332.75 207.75 332.75 207.25zM290.25 207.25 290.25 207.75 290.75 207.75 290.75 207.25zM274.25 207.25 276.25 209.25 275.25 210.75 277.75 210.75 275.75 208.75 275.75 207.25zM234.25 207.25 234.25 207.75 234.75 207.75 234.75 207.25zM123.25 207.25 123.25 207.75 123.75 207.75 123.75 207.25zM110.25 207.25 110.25 207.75 110.75 207.75 110.75 207.25zM311.25 206.25 311.25 206.75 311.75 206.75 311.75 206.25zM301.25 206.25 303.75 207.75 302.75 206.25zM270.75 206.25 269.25 206.25 269.25 207.75zM223.75 206.25 222.25 207.75 223.75 207.75zM204.75 206.25 202.25 207.75 204.75 207.75zM315.75 205.25 314.25 206.75zM306.25 205.25 306.25 206.75 306.75 206.75 306.75 205.25zM294.25 205.25 293.25 208.75 294.75 209.75zM278.75 205.25 277.25 205.25 278.25 206.25 277.25 207.75 278.75 206.75zM261.75 205.25 260.75 207.25 259.25 206.25 259.25 207.75 260.75 207.75zM219.25 205.25 219.25 205.75 219.75 205.75 219.75 205.25zM161.25 205.25 161.25 205.75 161.75 205.75 161.75 205.25zM132.25 205.25 132.25 205.75 132.75 205.75 132.75 205.25zM110.25 205.25 110.25 205.75 110.75 205.75 110.75 205.25zM320.25 204.25 320.25 206.75 322.25 208.75 323.25 206.75 324.25 207.75 325.75 206.75 324.75 205.25 322.25 206.25zM296.25 204.25 296.25 204.75 296.75 204.75 296.75 204.25zM285.25 204.25 286.75 205.75zM280.25 204.25 280.25 204.75 280.75 204.75 280.75 204.25zM250.25 204.25 250.25 204.75 250.75 204.75 250.75 204.25zM243.75 204.25 242.25 205.75zM214.75 206.25 211.25 204.25 207.25 207.25 207.25 208.75 208.75 208.75 208.75 207.25 210.25 205.75 212.75 205.75 213.25 206.75 212.25 207.75 214.75 208.75 213.75 207.75zM180.25 204.25 180.25 204.75 180.75 204.75 180.75 204.25zM327.25 203.25 326.25 204.75 328.75 206.75 328.75 204.25zM269.75 204.25 267.25 203.25 264.25 205.75 266.75 205.75 267.25 203.75 268.25 204.75zM234.25 203.25 235.75 205.75 235.75 204.25zM230.75 203.25 229.25 204.75 230.75 204.75zM163.25 203.25 163.25 203.75 163.75 203.75 163.75 203.25zM332.25 202.25 332.25 202.75 332.75 202.75 332.75 202.25zM300.25 202.25 300.25 204.75 301.25 202.75 304.75 204.75 304.75 203.25zM281.25 202.25 281.25 202.75 281.75 202.75 281.75 202.25zM279.25 202.25 279.25 202.75 279.75 202.75 279.75 202.25zM276.25 202.25 277.75 203.75zM272.25 202.25 272.25 203.75 273.25 204.25 272.25 205.75 274.75 205.75 274.75 204.25zM263.25 202.25 263.25 202.75 263.75 202.75 263.75 202.25zM253.25 202.25 253.25 203.75 254.75 203.75zM250.25 202.25 250.25 202.75 250.75 202.75 250.75 202.25zM205.25 202.25 205.25 203.75 207.75 203.75zM321.25 201.25 322.25 202.75 324.75 202.75 324.75 201.25 323.75 202.25zM257.25 201.25 257.25 201.75 257.75 201.75 257.75 201.25zM237.25 201.25 237.25 201.75 237.75 201.75 237.75 201.25zM225.75 201.25 223.25 202.25 224.25 204.75zM115.25 201.25 115.25 201.75 115.75 201.75 115.75 201.25zM316.25 200.25 316.25 200.75 316.75 200.75 316.75 200.25zM281.25 200.25 283.75 201.75 282.75 200.25zM270.75 200.25 269.25 200.25 269.25 201.75zM266.75 200.25 265.25 200.25 265.25 201.75zM262.25 200.25 262.25 200.75 262.75 200.75 262.75 200.25zM212.25 200.25 212.25 201.75 212.75 201.75 212.75 200.25zM209.25 200.25 209.25 200.75 210.75 200.75 210.75 200.25zM327.25 199.25 327.25 200.75 330.25 203.25 330.75 204.75 330.75 202.25zM293.25 199.25 294.25 200.25 293.25 202.75 295.25 200.75 296.75 201.75 294.75 199.25zM216.25 199.25 216.25 199.75 216.75 199.75 216.75 199.25zM214.25 199.25 214.25 200.75 214.75 200.75 214.75 199.25zM137.25 199.25 138.75 200.75zM319.25 198.25 319.25 198.75 319.75 198.75 319.75 198.25zM305.25 198.25 305.25 199.75 305.75 199.75 305.75 198.25zM288.25 198.25 288.25 198.75 288.75 198.75 288.75 198.25zM270.25 198.25 270.25 198.75 270.75 198.75 270.75 198.25zM267.25 198.25 267.25 198.75 267.75 198.75 267.75 198.25zM264.25 198.25 264.25 198.75 265.75 198.75 265.75 198.25zM238.75 198.25 237.25 199.75zM207.25 198.25 207.25 198.75 207.75 198.75 207.75 198.25zM317.25 197.25 317.25 197.75 317.75 197.75 317.75 197.25zM303.25 197.25 303.25 197.75 303.75 197.75 303.75 197.25zM298.25 197.25 298.25 197.75 298.75 197.75 298.75 197.25zM290.25 197.25 290.25 197.75 290.75 197.75 290.75 197.25zM276.75 197.25 274.25 198.75 276.75 199.75 275.75 198.75zM246.25 197.25 246.25 197.75 246.75 197.75 246.75 197.25zM241.25 197.25 241.25 198.75 241.75 198.75 241.75 197.25zM234.25 197.25 234.25 197.75 234.75 197.75 234.75 197.25zM215.25 197.25 215.25 197.75 215.75 197.75 215.75 197.25zM209.25 197.25 209.25 197.75 209.75 197.75 209.75 197.25zM334.25 196.25 334.25 196.75 334.75 196.75 334.75 196.25zM296.25 196.25 296.25 198.75 296.75 198.75 296.75 196.25zM283.25 196.25 283.25 197.75 284.75 198.75 284.75 197.25zM320.25 195.25 320.25 196.75 321.75 196.75 324.25 198.75 326.75 197.75 325.75 195.25 324.75 198.25zM317.25 195.25 317.25 195.75 318.75 195.75 318.75 195.25zM309.25 195.25 309.25 195.75 309.75 195.75 309.75 195.25zM251.25 195.25 251.25 195.75 251.75 195.75 251.75 195.25zM231.25 195.25 231.25 195.75 231.75 195.75 231.75 195.25zM333.75 194.25 332.25 194.25 331.25 195.75zM327.25 194.25 328.25 195.75 329.75 195.75zM285.25 194.25 285.25 194.75 285.75 194.75 285.75 194.25zM269.75 194.25 267.25 195.75 268.75 195.75zM254.25 194.25 254.25 195.75 254.75 195.75 254.75 194.25zM249.25 194.25 249.25 195.75 249.75 195.75 249.75 194.25zM239.25 194.25 239.25 194.75 239.75 194.75 239.75 194.25zM224.25 194.25 224.25 195.75 224.75 195.75 224.75 194.25zM175.25 194.25 175.25 195.75 175.75 195.75 175.75 194.25zM293.25 193.25 293.25 193.75 293.75 193.75 293.75 193.25zM251.25 193.25 251.25 193.75 251.75 193.75 251.75 193.25zM227.25 193.25 227.25 193.75 227.75 193.75 227.75 193.25zM216.25 193.25 216.25 194.75 217.75 194.75zM120.25 193.25 120.25 193.75 120.75 193.75 120.75 193.25zM334.25 192.25 334.25 192.75 334.75 192.75 334.75 192.25zM276.75 193.25 275.75 194.25 274.75 193.75 274.75 192.25 272.25 193.25 275.25 194.25 273.25 196.75 274.75 196.75 276.75 194.75zM233.25 192.25 233.25 193.75 233.75 193.75 233.75 192.25zM192.25 192.25 192.25 192.75 192.75 192.75 192.75 192.25zM315.25 191.25 315.25 191.75 315.75 191.75 315.75 191.25zM311.25 191.25 311.25 191.75 311.75 191.75 311.75 191.25zM294.25 191.25 295.75 191.75 296.25 193.75 297.75 194.75 296.75 192.25zM279.75 191.25 278.25 192.25 278.25 193.75 279.75 192.75zM272.25 191.25 272.25 191.75 272.75 191.75 272.75 191.25zM106.25 191.25 106.25 191.75 106.75 191.75 106.75 191.25zM329.25 190.25 329.25 190.75 329.75 190.75 329.75 190.25zM320.25 191.25 320.25 192.75 324.25 193.25 323.25 194.75 325.75 193.75 325.75 192.25 322.75 190.25 321.75 192.25zM298.25 190.25 298.25 190.75 299.75 190.75 299.75 190.25zM160.25 190.25 160.25 191.75 160.75 191.75 160.75 190.25zM331.25 189.25 332.75 191.75 332.75 190.25zM313.25 189.25 313.25 191.75 313.75 191.75 313.75 189.25zM287.25 189.25 287.25 190.75 287.75 190.75 287.75 189.25zM237.25 189.25 237.25 190.75 240.75 190.75zM219.25 189.25 219.25 189.75 219.75 189.75 219.75 189.25zM200.25 189.25 200.25 190.75 200.75 190.75 200.75 189.25zM301.25 188.25 302.25 190.75 305.25 192.25 304.25 193.75 305.75 193.75 304.75 190.25 303.25 191.25 302.75 189.25zM258.25 188.25 259.75 189.75 259.75 188.25zM333.25 187.25 333.25 187.75 334.75 187.75 334.75 187.25zM283.25 188.75 285.75 187.25 283.25 187.25zM116.25 187.25 116.25 187.75 116.75 187.75 116.75 187.25zM313.25 186.25 313.25 186.75 313.75 186.75 313.75 186.25zM311.25 186.25 311.25 187.75 311.75 187.75 311.75 186.25zM245.25 187.25 245.25 189.75 246.75 189.75 245.75 188.75 246.25 186.75 248.75 187.75 249.25 189.75 250.75 188.75 247.75 186.25zM159.25 186.25 159.25 188.75 159.75 188.75 159.75 186.25zM334.25 185.25 334.25 185.75 334.75 185.75 334.75 185.25zM305.25 185.25 305.25 185.75 305.75 185.75 305.75 185.25zM272.25 185.25 272.25 186.75 272.75 186.75 272.75 185.25zM270.25 185.25 270.25 186.75 270.75 186.75 270.75 185.25zM233.75 185.25 232.25 186.25 232.25 188.75zM103.25 185.25 103.25 185.75 103.75 185.75 103.75 185.25zM337.25 184.25 338.75 186.75 339.75 184.25zM317.25 184.25 320.75 185.75 321.75 187.75 321.75 186.25 319.75 184.25zM314.25 184.25 314.25 184.75 314.75 184.75 314.75 184.25zM299.75 184.25 297.25 186.75 299.75 185.75zM276.25 184.25 277.25 185.75 278.75 185.75 278.75 184.25 277.75 185.25zM215.25 184.25 215.25 184.75 218.75 184.75 218.75 184.25zM349.25 183.25 349.25 183.75 349.75 183.75 349.75 183.25zM342.75 183.25 341.25 184.75 342.75 184.75zM164.75 183.25 163.25 184.75 164.75 184.75zM344.25 182.25 348.25 187.75 346.75 189.25 345.75 188.25 342.25 188.25 342.25 189.75 343.25 188.75 344.25 189.75 345.25 188.75 346.25 189.75 347.25 188.75 349.75 188.75 347.75 186.75 349.75 185.25 346.25 184.25zM327.75 183.25 326.25 182.25 325.25 184.75 323.25 185.75 324.75 185.75 325.25 184.75 326.75 185.75zM263.25 182.25 263.25 182.75 263.75 182.75 263.75 182.25zM257.75 182.25 255.25 183.25 254.25 185.75zM241.25 182.25 241.25 182.75 241.75 182.75 241.75 182.25zM230.25 182.25 230.25 182.75 230.75 182.75 230.75 182.25zM281.25 181.25 281.25 181.75 281.75 181.75 281.75 181.25zM233.25 181.25 233.25 182.75 234.75 182.75zM226.25 181.25 226.25 181.75 227.75 181.75 227.75 181.25zM337.25 180.25 338.25 181.75 339.75 180.75zM327.25 180.25 327.25 180.75 327.75 180.75 327.75 180.25zM322.25 180.25 322.25 180.75 322.75 180.75 322.75 180.25zM300.25 180.25 301.75 181.75zM276.25 180.25 276.25 180.75 276.75 180.75 276.75 180.25zM245.25 180.25 246.25 181.75 247.75 180.75 247.25 180.25 246.25 181.25zM331.25 179.25 331.25 179.75 332.75 179.75 332.75 179.25zM318.25 179.25 318.25 179.75 318.75 179.75 318.75 179.25zM314.25 179.25 314.25 179.75 314.75 179.75 314.75 179.25zM297.75 179.25 296.25 179.25 296.25 180.75zM291.75 179.25 290.75 181.25 289.25 181.25 288.25 184.75 289.25 182.75 290.75 182.75 292.75 184.75zM238.25 179.25 238.25 179.75 238.75 179.75 238.75 179.25zM225.25 179.25 225.25 179.75 225.75 179.75 225.75 179.25zM134.25 179.25 134.25 179.75 134.75 179.75 134.75 179.25zM128.25 179.25 128.25 179.75 128.75 179.75 128.75 179.25zM308.25 178.25 308.25 179.75 310.25 181.75 311.75 181.75 311.75 179.25 309.25 179.25zM230.25 178.25 230.25 178.75 230.75 178.75 230.75 178.25zM222.25 178.25 222.25 179.75 222.75 179.75 222.75 178.25zM213.25 178.25 213.25 178.75 213.75 178.75 213.75 178.25zM195.25 178.25 195.25 178.75 195.75 178.75 195.75 178.25zM174.25 178.25 174.25 179.75 175.75 179.75zM141.75 178.25 140.25 179.75zM327.25 177.25 327.25 177.75 327.75 177.75 327.75 177.25zM324.25 177.25 324.25 177.75 324.75 177.75 324.75 177.25zM291.25 177.25 291.25 177.75 291.75 177.75 291.75 177.25zM287.75 177.25 288.25 179.75 286.75 181.25 285.25 180.25 285.25 181.75 286.75 181.75 288.75 179.75zM279.25 177.25 279.25 177.75 279.75 177.75 279.75 177.25zM257.75 177.25 255.25 178.75 257.75 178.75zM209.75 177.25 208.25 177.25 208.25 178.75zM152.25 177.25 152.25 177.75 152.75 177.75 152.75 177.25zM304.25 176.25 304.25 176.75 304.75 176.75 304.75 176.25zM293.25 176.25 294.75 177.75zM234.25 176.25 234.25 176.75 235.75 176.75 235.75 176.25zM216.25 176.25 216.25 177.75 216.75 177.75 216.75 176.25zM213.25 176.25 213.25 176.75 213.75 176.75 213.75 176.25zM204.25 176.25 205.75 178.75 205.75 177.25zM122.25 176.25 122.25 176.75 122.75 176.75 122.75 176.25zM348.25 175.25 348.25 175.75 348.75 175.75 348.75 175.25zM342.25 175.25 342.25 177.75 343.25 178.25 342.25 179.75 343.25 178.75 346.25 180.75 352.75 179.75 352.75 178.25 351.25 179.25 349.75 177.25 344.25 179.25 343.75 177.25 345.75 175.25 344.25 175.25 343.75 177.25zM347.75 179.25 348.75 178.75 349.25 179.75 348.25 180.25zM332.25 175.25 333.25 176.75 335.75 177.75 334.75 176.25zM313.25 175.25 313.25 175.75 313.75 175.75 313.75 175.25zM299.25 175.25 300.25 176.75 301.75 176.75zM273.25 175.25 273.25 175.75 273.75 175.75 273.75 175.25zM263.25 175.25 263.25 176.75 264.75 176.75zM243.25 175.25 243.25 175.75 243.75 175.75 243.75 175.25zM238.25 175.25 238.25 175.75 238.75 175.75 238.75 175.25zM229.75 175.25 228.25 175.25 227.25 177.75 228.75 177.75zM161.25 175.25 161.25 175.75 161.75 175.75 161.75 175.25zM325.25 174.25 325.25 174.75 326.75 174.75 326.75 174.25zM319.25 174.25 319.25 175.75 319.75 175.75 319.75 174.25zM218.25 174.25 218.25 174.75 218.75 174.75 218.75 174.25zM208.25 174.25 208.25 174.75 208.75 174.75 208.75 174.25zM188.25 174.25 189.75 175.75zM335.25 173.25 337.25 174.25 337.25 176.75 339.75 175.75 338.75 173.25zM299.25 173.25 299.25 173.75 299.75 173.75 299.75 173.25zM297.75 173.25 296.25 174.25 296.25 175.75 297.75 175.75zM257.25 173.25 257.25 174.75 257.75 174.75 257.75 173.25zM247.25 173.25 247.25 173.75 248.75 173.75 248.75 173.25zM216.25 173.25 216.25 173.75 216.75 173.75 216.75 173.25zM166.25 173.25 166.25 173.75 166.75 173.75 166.75 173.25zM333.25 172.25 333.25 173.75 333.75 173.75 333.75 172.25zM321.25 172.25 322.75 174.75 323.75 172.25zM267.25 172.25 267.25 173.75 268.75 173.75 268.75 172.25zM337.25 171.25 340.75 171.75 341.75 172.75 340.75 171.25zM299.25 171.25 299.25 171.75 299.75 171.75 299.75 171.25zM281.25 171.25 281.25 172.75 281.75 172.75 281.75 171.25zM279.75 171.25 278.25 171.25 276.25 176.75 278.75 174.75 278.75 172.25zM248.25 171.25 248.25 171.75 248.75 171.75 248.75 171.25zM139.25 171.25 139.25 172.75 139.75 172.75 139.75 171.25zM355.25 170.25 355.25 170.75 355.75 170.75 355.75 170.25zM327.25 170.25 327.25 170.75 327.75 170.75 327.75 170.25zM273.25 170.25 273.25 171.75 274.75 171.75zM206.25 170.25 206.25 171.75 206.75 171.75 206.75 170.25zM303.25 170.25 303.25 172.75 305.25 170.75 308.75 171.75 309.25 169.75 311.75 171.75 310.75 169.25 309.25 169.25 308.75 170.25 307.25 170.25 306.75 169.25 305.75 170.25zM297.25 169.25 297.25 169.75 297.75 169.75 297.75 169.25zM281.25 169.25 281.25 169.75 281.75 169.75 281.75 169.25zM244.25 169.25 244.25 169.75 244.75 169.75 244.75 169.25zM222.25 169.25 222.25 170.75 223.75 170.75 223.75 169.25zM217.25 169.25 217.25 169.75 217.75 169.75 217.75 169.25zM215.25 169.25 215.25 169.75 215.75 169.75 215.75 169.25zM209.25 169.25 209.25 169.75 209.75 169.75 209.75 169.25zM139.25 169.25 139.25 169.75 139.75 169.75 139.75 169.25zM276.25 168.25 276.25 169.75 276.75 169.75 276.75 168.25zM259.25 168.25 260.75 169.75 260.75 168.25zM250.25 168.25 250.25 168.75 251.75 168.75 251.75 168.25zM234.25 168.25 234.25 168.75 234.75 168.75 234.75 168.25zM229.25 168.25 229.25 168.75 229.75 168.75 229.75 168.25zM149.25 168.25 149.25 168.75 149.75 168.75 149.75 168.25zM308.25 167.25 308.25 167.75 308.75 167.75 308.75 167.25zM286.75 167.25 285.25 170.75 283.25 172.25 284.25 176.75 284.25 171.75 285.75 171.75 287.25 173.25 286.25 174.75 288.25 172.75 290.25 174.25 290.25 175.75 291.75 174.75 289.75 173.75 290.75 170.25 289.25 170.25 290.25 171.25 289.75 172.25 288.25 172.25 287.75 173.25 286.75 172.75 286.75 170.25 285.75 169.75zM279.25 167.25 279.25 167.75 279.75 167.75 279.75 167.25zM333.25 166.25 336.75 168.75 334.75 166.25zM330.25 166.25 331.75 167.75 331.75 166.25zM322.25 165.25 321.25 168.75 322.25 169.75 323.25 167.75 324.25 168.25 324.25 169.75 328.75 168.75 329.25 172.75 330.75 173.75 329.75 171.25 332.75 170.75 333.75 168.25 332.75 169.25 330.25 169.25 328.75 167.25 327.25 167.25 325.25 169.25 324.75 167.25 323.75 166.75 324.75 165.25 323.75 166.25zM288.25 167.75 289.25 165.75 290.75 165.75 291.25 166.75 292.75 166.25 291.75 165.25 289.25 165.25zM257.25 166.25 259.75 166.75 259.75 165.25zM243.75 165.25 241.25 167.75 243.75 166.75zM142.25 165.25 142.25 165.75 142.75 165.75 142.75 165.25zM314.25 164.25 314.25 165.75 312.25 166.25 312.25 167.75 314.25 165.75 316.25 166.25 316.25 167.75 314.75 169.25 313.25 169.25 314.25 170.25 313.25 171.75 316.25 172.25 316.75 175.75 317.75 174.75 317.75 172.25 315.75 170.25 317.25 168.75 318.25 169.75 319.75 168.75 317.75 167.75 319.75 165.25 316.25 166.25 315.75 164.25zM298.25 164.25 299.25 166.75 301.25 168.25 300.25 169.25 300.75 169.75 301.75 167.25 300.25 167.25 299.75 165.25zM274.25 164.25 274.25 165.75 278.75 165.75 275.25 165.25zM255.25 164.25 255.25 164.75 255.75 164.75 255.75 164.25zM248.25 164.25 249.25 165.75 251.75 166.75 251.75 165.25zM230.25 164.25 230.25 165.75 230.75 165.75 230.75 164.25zM198.25 164.25 198.25 165.75 199.75 165.75zM305.25 163.25 305.25 163.75 306.75 163.75 306.75 163.25zM266.25 163.25 266.25 163.75 266.75 163.75 266.75 163.25zM252.25 163.25 252.25 163.75 252.75 163.75 252.75 163.25zM228.75 163.25 227.25 164.75 228.75 164.75zM221.25 163.25 220.25 165.75 221.75 165.75 221.75 164.25 223.75 163.75 224.75 166.75 224.75 164.25 225.75 163.25zM213.25 163.25 216.75 164.75zM201.25 163.25 201.25 163.75 202.75 163.75 202.75 163.25zM340.75 162.25 339.25 164.25 340.25 166.75 338.25 167.25 338.25 169.75 339.75 168.75 339.75 167.25 341.75 164.75zM336.25 162.25 336.25 163.75 336.75 163.75 336.75 162.25zM272.25 162.25 272.25 162.75 274.75 162.75 274.75 162.25zM236.75 162.25 234.25 164.25 234.25 165.75 236.75 163.75zM351.25 161.25 351.25 161.75 351.75 161.75 351.75 161.25zM327.25 161.25 327.25 162.75 332.75 163.75 329.75 162.75 330.75 161.25 329.25 161.25 328.75 162.25zM302.25 161.25 302.25 162.75 302.75 162.75 302.75 161.25zM258.25 161.25 258.25 162.75 258.75 162.75 258.75 161.25zM238.25 161.25 239.25 162.75 241.75 163.75 241.75 161.25 240.75 162.25zM229.25 161.25 229.25 161.75 229.75 161.75 229.75 161.25zM167.25 161.25 167.25 161.75 167.75 161.75 167.75 161.25zM333.25 160.25 333.25 160.75 333.75 160.75 333.75 160.25zM317.25 160.25 318.25 161.75 320.25 162.25 319.75 163.25 318.25 163.25 319.75 163.75 320.75 161.25zM315.75 161.25 313.25 161.25 312.75 160.25 311.75 161.25 309.25 161.25 309.25 162.75 306.75 166.25 304.25 165.25 304.25 167.75 306.75 166.75 308.25 164.75 309.75 164.75 312.25 160.75 315.25 162.75zM305.25 160.25 305.25 160.75 305.75 160.75 305.75 160.25zM285.25 160.25 285.25 161.75 285.75 161.75 285.75 160.25zM253.25 160.25 253.25 160.75 254.75 160.75 254.75 160.25zM236.25 160.25 236.25 160.75 236.75 160.75 236.75 160.25zM215.25 160.25 215.25 160.75 215.75 160.75 215.75 160.25zM294.25 159.25 296.25 160.25 295.75 161.25 291.25 161.75 292.75 161.75 293.25 164.75 297.75 167.75 294.75 163.25 297.75 162.75 299.75 161.25 296.75 159.25zM293.75 162.25 294.75 161.75 295.25 162.75 294.25 163.25zM260.25 159.25 260.25 161.75 260.75 161.75 260.75 159.25zM243.25 159.25 243.25 159.75 243.75 159.75 243.75 159.25zM238.25 159.25 238.25 159.75 238.75 159.75 238.75 159.25zM228.25 159.25 228.25 159.75 228.75 159.75 228.75 159.25zM337.25 158.25 338.25 160.75 339.75 158.75 342.75 161.75 341.75 160.75 342.75 158.25 341.75 159.25zM335.25 158.25 335.25 159.75 335.75 159.75 335.75 158.25zM288.25 158.25 288.25 158.75 288.75 158.75 288.75 158.25zM265.25 159.75 268.75 160.75 267.75 159.25 269.75 158.25 268.25 158.25 267.75 159.25 265.25 158.25zM251.25 158.25 251.25 158.75 252.75 158.75 252.75 158.25zM217.25 158.25 218.75 159.75 218.75 158.25zM214.25 158.25 214.25 158.75 214.75 158.75 214.75 158.25zM325.25 157.25 326.75 158.75zM297.25 157.25 297.25 157.75 297.75 157.75 297.75 157.25zM292.25 157.25 292.25 157.75 292.75 157.75 292.75 157.25zM235.75 157.25 234.25 157.25 232.25 159.25 232.25 160.75 233.75 159.75 233.75 158.25zM223.75 157.25 222.25 158.75 223.75 158.75zM210.25 157.25 210.25 159.75 210.75 159.75 210.75 157.25zM280.25 156.25 282.25 158.25 281.25 159.75 283.25 157.75 284.75 158.75 284.75 157.25 281.25 157.25zM258.25 156.25 258.25 157.75 258.75 157.75 258.75 156.25zM183.75 156.25 182.25 157.75zM356.25 155.25 356.25 155.75 356.75 155.75 356.75 155.25zM354.75 155.25 351.75 158.25 349.75 157.75 350.75 156.75 350.25 155.25 348.25 158.25 348.25 161.75 349.25 159.75 353.75 158.75 354.75 157.75 353.75 156.75zM352.75 157.25 353.75 156.75 354.25 157.75 353.25 158.25zM329.25 155.25 330.25 156.75 331.75 156.75zM321.25 155.25 321.25 155.75 322.75 155.75 322.75 155.25zM312.25 155.25 312.25 155.75 312.75 155.75 312.75 155.25zM309.25 155.25 309.25 155.75 309.75 155.75 309.75 155.25zM271.25 156.25 271.25 157.75 272.25 156.75 274.25 157.25 273.75 159.25 271.25 159.75 274.75 159.75 274.75 158.25 275.75 157.75 278.25 160.25 278.25 163.75 279.25 162.75 282.25 163.25 280.25 165.25 281.25 166.75 281.25 164.75 285.75 165.75 284.75 164.25 286.75 163.25 283.25 164.25 282.75 162.25 283.75 161.25 280.25 161.25 278.75 159.75 278.75 158.25 276.25 158.25 275.75 156.25 274.25 157.25 273.75 155.25zM237.25 155.25 237.25 155.75 237.75 155.75 237.75 155.25zM228.25 155.25 228.25 155.75 228.75 155.75 228.75 155.25zM337.75 154.25 335.75 156.25 333.25 155.75 334.25 156.75 336.75 156.75zM324.25 154.25 324.25 154.75 324.75 154.75 324.75 154.25zM317.25 154.25 317.25 156.75 317.75 156.75 317.75 154.25zM298.25 155.25 299.25 156.25 299.25 158.75 306.75 157.75 307.25 159.75 309.75 159.75 307.75 158.75 307.75 157.25 303.25 157.25 302.75 158.25 301.25 158.25 300.75 157.25 302.75 155.75 302.75 154.25 301.25 155.25 300.75 157.25zM267.25 154.25 267.25 155.75 267.75 155.75 267.75 154.25zM258.25 154.25 258.25 154.75 259.75 154.75 259.75 154.25zM203.25 154.25 203.25 154.75 203.75 154.75 203.75 154.25zM351.25 153.25 351.25 153.75 351.75 153.75 351.75 153.25zM328.75 153.25 327.25 154.25 327.25 155.75zM291.75 153.25 290.25 154.25 290.25 155.75 291.75 154.75zM287.25 153.25 286.25 155.75 287.75 156.75zM275.25 153.25 277.25 154.75 278.75 153.75 278.25 153.25 277.25 154.25 276.75 153.25zM255.25 153.25 255.25 153.75 256.75 153.75 256.75 153.25zM251.75 153.25 250.25 153.25 251.25 154.25 250.25 156.75 252.75 155.75zM243.25 153.25 243.25 154.75 244.25 153.75 246.25 154.25 246.25 156.75 248.75 156.75 247.75 155.75 248.75 153.25 247.25 153.25 246.75 154.25 245.75 153.25zM236.25 153.25 236.25 153.75 236.75 153.75 236.75 153.25zM225.75 153.25 224.25 154.75zM335.25 152.25 335.25 152.75 336.75 152.75 336.75 152.25zM273.25 152.25 273.25 153.75 273.75 153.75 273.75 152.25zM261.25 152.25 261.25 154.75 263.25 156.25 262.25 157.75 263.75 157.75 264.75 154.25 263.25 155.25zM240.25 152.25 241.75 155.75 241.75 153.25zM219.25 152.25 219.25 152.75 222.75 152.75 222.75 152.25zM252.25 151.25 253.25 152.75 255.75 151.75zM233.25 151.25 233.25 151.75 233.75 151.75 233.75 151.25zM249.25 150.25 249.25 150.75 249.75 150.75 249.75 150.25zM227.25 150.25 227.25 150.75 227.75 150.75 227.75 150.25zM348.25 149.25 348.25 149.75 348.75 149.75 348.75 149.25zM341.75 149.25 339.25 152.75 340.25 151.75 342.75 152.75 341.75 151.75zM336.25 149.25 336.25 149.75 337.75 149.75 337.75 149.25zM329.25 149.25 329.25 150.75 330.25 149.75 332.75 150.75zM281.25 149.25 281.25 150.75 281.75 150.75 281.75 149.25zM270.25 149.25 269.25 152.75 271.75 153.75zM257.25 149.25 257.25 150.75 257.75 150.75 257.75 149.25zM244.25 149.25 245.25 150.75 247.75 151.75 246.75 149.25zM218.25 149.25 218.25 150.75 218.75 150.75 218.75 149.25zM216.25 149.25 216.25 149.75 216.75 149.75 216.75 149.25zM147.25 149.25 147.25 149.75 147.75 149.75 147.75 149.25zM343.25 148.25 344.25 151.75 345.75 150.75 346.25 151.75 348.25 152.25 347.75 155.25 346.75 154.25 344.25 155.25 343.75 154.25 344.75 153.25 342.25 154.25 344.25 155.25 343.25 156.75 347.75 155.75 349.75 152.75 349.75 151.25 346.25 151.25 345.75 150.25 346.75 149.25 345.25 148.25 345.25 149.75 344.25 150.25zM272.25 148.25 272.25 148.75 272.75 148.75 272.75 148.25zM251.25 148.25 251.25 149.75 253.75 149.75zM239.75 148.25 238.25 149.25 238.25 150.75 239.75 150.75zM235.25 148.25 235.25 148.75 235.75 148.75 235.75 148.25zM318.25 150.25 318.25 151.75 320.75 151.75 321.25 150.75 323.75 150.75 324.75 151.75 323.75 150.25 319.75 149.75 320.25 147.75 322.75 148.75 321.75 147.25 320.25 147.25zM290.75 147.25 289.75 149.25 287.25 149.25 286.75 150.25 284.25 149.25 283.25 151.75 284.75 152.75 286.25 150.75 290.75 150.75zM283.75 151.25 284.75 150.75 285.25 151.75 284.25 152.25zM280.25 147.25 280.25 147.75 282.75 147.75 282.75 147.25zM275.25 147.25 275.25 147.75 275.75 147.75 275.75 147.25zM260.25 147.25 260.25 147.75 260.75 147.75 260.75 147.25zM257.25 147.25 257.25 147.75 257.75 147.75 257.75 147.25zM249.25 147.25 249.25 147.75 249.75 147.75 249.75 147.25zM244.25 147.25 244.25 147.75 244.75 147.75 244.75 147.25zM242.75 147.25 241.25 148.75 242.75 148.75zM228.25 147.25 229.75 150.75 229.75 149.25 231.75 148.25 230.75 147.25zM219.25 147.25 219.25 147.75 219.75 147.75 219.75 147.25zM209.25 147.25 209.25 147.75 209.75 147.75 209.75 147.25zM284.25 146.25 284.25 146.75 284.75 146.75 284.75 146.25zM267.25 146.25 267.25 149.75 267.75 149.75 267.75 146.25zM232.25 146.25 232.25 146.75 233.75 146.75 233.75 146.25zM342.25 145.25 342.25 146.75 344.75 146.75 344.75 145.25zM333.25 145.25 333.25 146.75 334.75 146.75zM298.75 145.25 297.75 148.25 296.75 147.25 295.75 148.25 293.25 147.25 294.25 149.75 292.25 150.75 295.75 150.75 296.25 151.75 297.75 150.75 298.75 151.75zM294.75 149.25 295.75 148.75 296.25 149.75 295.25 150.25zM256.25 145.25 256.25 145.75 256.75 145.75 256.75 145.25zM224.25 145.25 225.75 146.75 225.75 145.25zM158.25 145.25 158.25 145.75 158.75 145.75 158.75 145.25zM351.25 146.75 352.25 144.75 353.75 145.75 354.75 144.25 353.75 145.25 351.25 144.25zM346.25 144.25 346.25 145.75 347.75 146.75zM324.25 144.25 324.25 144.75 325.75 144.75 325.75 144.25zM321.25 144.25 322.75 145.75zM308.75 144.25 307.25 145.75 308.75 145.75zM281.25 144.25 281.25 144.75 281.75 144.75 281.75 144.25zM273.25 144.25 273.25 144.75 273.75 144.75 273.75 144.25zM238.25 144.25 238.25 144.75 238.75 144.75 238.75 144.25zM227.25 144.25 227.25 144.75 227.75 144.75 227.75 144.25zM207.25 144.25 207.25 144.75 207.75 144.75 207.75 144.25zM349.25 143.25 349.25 144.75 349.75 144.75 349.75 143.25zM331.25 143.25 331.25 143.75 331.75 143.75 331.75 143.25zM283.25 143.25 283.25 143.75 283.75 143.75 283.75 143.25zM277.25 143.25 278.25 144.75 279.75 144.75 279.75 143.25 278.75 144.25zM248.25 143.25 250.75 145.75 250.75 144.25zM236.25 143.25 236.25 143.75 236.75 143.75 236.75 143.25zM218.25 143.25 219.25 144.75 220.75 144.75 220.75 143.25 219.75 144.25zM351.25 142.25 351.25 142.75 351.75 142.75 351.75 142.25zM315.25 142.25 315.25 142.75 315.75 142.75 315.75 142.25zM267.25 142.25 268.25 143.75 269.75 143.75zM244.25 142.25 244.25 142.75 244.75 142.75 244.75 142.25zM211.25 142.25 212.75 142.75 213.75 144.75 213.75 143.25zM348.25 141.25 348.25 141.75 348.75 141.75 348.75 141.25zM345.25 141.25 345.25 141.75 345.75 141.75 345.75 141.25zM343.75 142.25 342.75 141.25 341.75 143.25 339.25 143.25 338.25 142.25 338.25 144.75 340.75 145.75 339.75 144.25 343.75 143.75zM327.25 141.25 328.75 144.75 329.75 143.25zM257.25 141.25 257.25 141.75 257.75 141.75 257.75 141.25zM241.25 141.25 241.25 142.75 241.75 142.75 241.75 141.25zM189.25 141.25 189.25 142.75 189.75 142.75 189.75 141.25zM158.25 141.25 158.25 141.75 158.75 141.75 158.75 141.25zM317.25 140.25 317.25 141.75 317.75 141.75 317.75 140.25zM288.25 140.25 288.25 144.75 290.75 145.75 289.75 144.75 290.75 141.25zM284.25 140.25 284.25 141.75 284.75 141.75 284.75 140.25zM254.25 140.25 254.25 140.75 254.75 140.75 254.75 140.25zM223.25 140.25 224.75 141.75zM219.25 140.25 219.25 140.75 219.75 140.75 219.75 140.25zM168.25 140.25 168.25 140.75 168.75 140.75 168.75 140.25zM354.75 139.25 353.25 139.25 352.25 140.75zM325.75 139.25 324.25 139.25 324.25 140.75zM321.25 139.25 322.75 140.75zM236.25 139.25 237.75 140.75 237.75 139.25zM158.25 139.25 158.25 139.75 158.75 139.75 158.75 139.25zM151.25 139.25 151.25 139.75 151.75 139.75 151.75 139.25zM318.25 138.25 318.25 138.75 319.75 138.75 319.75 138.25zM314.25 138.25 314.25 139.75 314.75 139.75 314.75 138.25zM283.25 138.25 283.25 138.75 283.75 138.75 283.75 138.25zM220.25 138.25 220.25 138.75 220.75 138.75 220.75 138.25zM201.25 138.25 202.75 139.75zM182.25 138.25 182.25 138.75 182.75 138.75 182.75 138.25zM334.25 137.25 334.25 138.75 334.75 138.75 334.75 137.25zM276.25 137.25 276.25 139.75 278.75 140.75 276.75 139.75zM222.25 137.25 222.25 137.75 223.75 137.75 223.75 137.25zM144.25 137.25 144.25 137.75 145.75 137.75 145.75 137.25zM341.25 136.25 341.25 136.75 342.75 136.75 342.75 136.25zM339.25 136.25 337.25 138.75 339.75 137.75 340.75 140.75 341.75 138.25 340.25 138.25zM298.25 137.25 299.25 141.75 300.25 142.75 301.25 141.75 302.25 142.25 302.25 145.75 300.25 146.25 302.25 148.25 300.25 152.75 303.75 152.75 303.75 151.25 304.75 150.75 306.25 152.25 306.25 153.75 307.75 153.75 306.75 152.75 307.25 149.75 308.25 150.25 308.25 151.75 309.25 150.75 310.25 151.75 311.75 151.75 312.25 150.75 313.75 151.75 314.75 150.75 315.25 152.75 314.25 153.75 315.75 152.75 314.75 149.25 316.25 147.75 317.75 147.75 318.75 145.25 317.75 146.25 315.25 146.25 313.75 144.75 312.75 140.25 310.75 137.25 308.25 136.25 308.25 137.75 306.25 138.25 306.25 140.75 305.25 141.25 304.75 144.25 302.75 142.75 302.75 141.25 300.75 140.75 300.75 139.25 302.25 137.75 303.25 138.75 303.75 138.25 302.75 137.25 301.75 138.25 299.25 138.25zM304.75 150.25 305.75 149.75 306.25 150.75 305.25 151.25zM301.75 149.25 303.75 148.75 304.25 149.75 302.25 150.25zM304.75 148.25 305.75 147.75 306.25 148.75 305.25 149.25zM302.75 146.25 303.75 145.75 304.25 146.75 303.25 147.25zM298.75 139.25 299.75 138.75 300.25 139.75 299.25 140.25zM309.25 137.75 312.25 141.25 311.25 143.75 313.25 144.25 311.25 145.75 312.25 146.75 313.75 146.75 314.25 145.75 315.25 146.25 315.25 147.75 313.25 148.25 311.75 150.25 309.75 148.75 309.75 147.25 308.75 149.25 307.25 149.25 304.75 146.75 305.75 145.75 304.75 144.25 306.75 143.75 305.75 141.25zM288.75 136.25 287.25 137.75 288.75 137.75zM283.25 136.25 283.25 136.75 284.75 136.75 284.75 136.25zM279.25 136.25 279.25 136.75 281.75 136.75 281.75 136.25zM246.25 136.25 246.25 136.75 246.75 136.75 246.75 136.25zM171.25 136.25 171.25 136.75 171.75 136.75 171.75 136.25zM353.25 135.25 353.25 135.75 355.75 135.75 355.75 135.25zM348.75 135.25 347.25 136.25 347.25 137.75zM323.25 135.25 323.25 135.75 323.75 135.75 323.75 135.25zM277.25 135.25 277.25 135.75 277.75 135.75 277.75 135.25zM232.25 135.25 234.75 135.75 236.25 137.75 237.25 136.75 239.75 137.75 239.75 136.25 237.25 136.25 236.25 137.25 234.75 135.25zM228.25 135.25 229.25 136.25 228.25 137.75 230.75 137.75zM201.25 135.25 202.75 136.75zM193.75 135.25 192.25 139.75 193.75 138.75zM335.25 134.25 335.25 134.75 335.75 134.75 335.75 134.25zM305.25 134.25 305.25 134.75 305.75 134.75 305.75 134.25zM298.75 134.25 297.25 135.75zM295.75 134.25 294.75 137.25 292.25 137.25 291.75 136.25 292.75 135.25 291.25 136.25 292.25 137.75 294.25 138.25 293.25 139.25 294.25 141.75 292.25 143.25 292.25 145.75 295.25 141.75 296.25 142.25 295.25 145.75 296.75 145.75 296.75 144.25 297.75 143.75 295.75 141.75 296.75 140.75zM293.75 139.25 294.75 138.75 295.25 139.75 294.25 140.25zM290.25 134.25 290.25 134.75 290.75 134.75 290.75 134.25zM230.25 134.25 230.25 134.75 230.75 134.75 230.75 134.25zM351.25 133.25 351.25 133.75 351.75 133.75 351.75 133.25zM338.25 133.25 338.25 133.75 339.75 133.75 339.75 133.25zM323.25 133.25 323.25 133.75 324.75 133.75 324.75 133.25zM228.25 133.25 228.25 133.75 228.75 133.75 228.75 133.25zM223.75 133.25 222.25 133.25 220.25 135.75 221.25 134.75 222.75 135.75zM346.25 132.25 347.25 133.75 349.75 133.75 349.75 132.25zM342.25 132.25 342.25 132.75 342.75 132.75 342.75 132.25zM314.25 132.25 314.25 132.75 314.75 132.75 314.75 132.25zM309.25 132.25 309.25 132.75 310.75 132.75 310.75 132.25zM297.25 132.25 297.25 132.75 297.75 132.75 297.75 132.25zM294.75 132.25 293.25 133.75zM273.25 132.25 273.25 132.75 274.75 132.75 274.75 132.25zM240.25 132.25 240.25 133.75 240.75 133.75 240.75 132.25zM235.25 132.25 235.25 132.75 237.75 132.75 237.75 132.25zM187.25 132.25 186.25 133.75 187.75 135.75zM300.25 131.25 300.25 133.75 301.75 133.75 300.75 132.75 301.75 131.25zM289.25 131.25 289.25 131.75 289.75 131.75 289.75 131.25zM340.25 130.25 340.25 130.75 340.75 130.75 340.75 130.25zM335.25 130.25 335.25 130.75 335.75 130.75 335.75 130.25zM354.25 129.25 354.25 129.75 355.75 129.75 355.75 129.25zM337.25 129.25 337.25 129.75 337.75 129.75 337.75 129.25zM330.25 129.25 330.25 130.75 333.75 130.75 333.75 129.25 332.25 129.25 331.75 130.25zM264.25 129.25 264.25 129.75 264.75 129.75 264.75 129.25zM240.25 129.25 240.25 129.75 240.75 129.75 240.75 129.25zM208.25 129.25 208.25 129.75 208.75 129.75 208.75 129.25zM339.25 128.25 339.25 128.75 339.75 128.75 339.75 128.25zM279.25 128.25 279.25 128.75 279.75 128.75 279.75 128.25zM260.25 128.25 260.25 128.75 260.75 128.75 260.75 128.25zM341.25 127.25 342.25 130.75 343.75 130.75 342.75 129.75 343.75 128.25zM341.75 128.25 342.75 127.75 343.25 128.75 342.25 129.25zM336.75 127.25 335.25 128.75zM271.25 127.25 271.25 127.75 271.75 127.75 271.75 127.25zM238.75 127.25 237.25 128.75 238.75 128.75zM234.25 127.25 234.25 128.75 234.75 128.75 234.75 127.25zM226.25 127.25 226.25 127.75 226.75 127.75 226.75 127.25zM205.25 127.25 206.75 129.75 206.75 128.25zM168.25 127.25 168.25 127.75 168.75 127.75 168.75 127.25zM344.25 126.25 344.25 126.75 345.75 126.75 345.75 126.25zM299.25 126.25 299.25 126.75 299.75 126.75 299.75 126.25zM296.25 126.25 295.25 128.75 296.25 129.25 296.25 130.75 297.75 130.75 297.75 129.25 296.75 128.75 297.75 127.25zM252.25 126.25 253.25 127.75 254.75 127.75 253.75 126.25zM202.75 126.25 198.25 130.25 198.25 131.75 199.25 129.75 200.75 129.75 201.25 130.75 203.75 129.75zM196.25 126.25 196.25 126.75 196.75 126.75 196.75 126.25zM179.25 126.25 179.25 126.75 179.75 126.75 179.75 126.25zM285.25 125.25 285.25 125.75 285.75 125.75 285.75 125.25zM277.25 125.25 277.25 125.75 277.75 125.75 277.75 125.25zM237.25 125.25 237.25 125.75 238.75 125.75 238.75 125.25zM161.25 125.25 161.25 125.75 162.75 125.75 162.75 125.25zM442.75 155.25 439.25 155.25 436.75 153.25 429.25 152.25 428.75 151.25 425.25 151.25 424.75 152.25 423.25 152.25 422.75 151.25 423.75 150.25 422.75 149.25 419.25 149.25 416.75 151.25 414.25 151.25 413.75 149.25 410.75 145.75 409.75 141.25 407.75 139.25 399.25 138.25 398.75 137.25 397.25 137.25 390.75 133.25 388.75 136.25 387.25 136.25 387.25 137.75 386.25 138.25 387.25 139.75 384.25 141.25 383.75 138.25 385.75 136.75 386.25 134.75 387.75 134.75 385.75 133.25 384.75 134.25 381.75 133.75 384.75 131.25 382.25 131.25 381.75 133.25 380.75 132.75 380.75 131.25 372.25 133.25 371.75 130.25 370.25 130.25 367.25 128.25 368.25 130.75 366.25 133.25 365.75 129.25 364.75 128.75 365.75 127.25 362.25 127.25 360.75 125.25 358.25 125.25 357.25 124.25 357.25 125.75 359.25 128.25 358.25 129.75 360.25 131.75 361.25 130.75 362.25 131.25 361.75 133.25 359.25 133.25 357.75 131.25 353.25 132.25 352.75 130.25 349.75 129.75 349.75 127.25 347.25 127.25 347.25 129.75 348.75 128.75 353.25 132.75 355.75 132.75 356.75 131.75 360.25 134.75 361.75 134.75 362.25 135.75 360.25 136.25 359.75 138.25 358.25 138.25 357.75 137.25 356.25 137.75 357.25 138.75 359.75 138.75 361.25 140.75 362.75 138.75 363.25 142.75 362.25 143.25 361.25 142.25 360.25 143.25 359.75 141.25 357.25 142.25 356.25 140.25 356.25 142.75 360.25 143.25 360.25 144.75 358.75 146.25 357.25 145.25 357.25 146.75 360.25 148.75 358.75 150.25 357.75 149.25 356.25 150.25 355.75 147.25 354.75 148.25 353.25 147.25 353.25 148.75 354.75 148.75 355.25 149.75 351.25 150.25 351.25 151.75 353.75 152.75 353.75 151.25 354.75 150.75 355.25 152.75 356.75 151.75 359.25 154.25 359.25 157.75 357.25 158.25 356.25 157.25 357.25 158.25 356.25 164.75 355.25 165.25 354.25 164.25 353.25 165.25 352.25 164.25 352.25 165.75 355.25 168.75 357.75 168.75 358.25 170.75 354.75 173.25 353.75 172.75 353.75 171.25 352.25 172.25 351.75 170.25 350.75 169.75 350.75 168.25 351.75 167.75 350.75 166.75 350.75 164.25 350.25 167.75 349.25 168.25 347.75 166.75 347.75 164.25 348.75 163.25 346.25 164.25 345.75 162.25 344.25 163.75 347.25 165.25 346.25 166.25 346.25 169.75 344.75 169.75 344.75 167.25 343.75 169.25 342.25 169.25 343.25 170.25 343.25 173.75 346.25 171.75 348.75 172.75 346.75 170.75 346.75 169.25 349.75 168.75 350.25 173.75 353.25 176.75 354.75 176.75 355.25 175.75 357.25 176.25 357.25 178.75 356.25 179.25 355.25 178.25 354.25 179.25 356.25 179.25 356.25 182.75 354.25 183.25 354.25 181.25 352.25 183.25 352.25 184.75 354.25 185.25 353.75 186.25 352.25 186.25 352.25 189.75 353.75 189.75 354.25 190.75 352.25 191.25 351.75 192.25 350.75 191.25 349.75 192.25 348.25 191.25 347.75 193.25 346.75 192.25 344.25 193.25 343.25 191.25 343.25 193.75 345.75 193.75 346.25 195.75 344.75 197.25 342.25 197.25 342.25 198.75 340.25 199.25 338.25 201.25 336.75 198.25 340.75 196.75 340.75 195.25 339.75 196.25 338.75 195.75 338.75 194.25 340.75 192.75 340.75 191.25 339.75 190.75 339.75 189.25 338.75 190.25 336.25 189.25 337.25 190.25 336.25 191.75 337.25 190.75 339.25 191.25 339.25 192.75 338.25 193.25 338.25 195.75 339.25 196.75 336.25 197.25 337.25 201.75 339.75 202.75 340.75 201.75 339.75 200.75 340.25 199.75 341.75 199.75 343.25 201.75 342.25 202.25 341.75 205.25 339.25 205.25 338.25 204.25 336.25 206.25 334.25 204.25 335.25 205.25 335.25 206.75 334.25 207.25 335.25 208.75 336.75 208.75 334.75 207.75 335.25 206.75 336.75 206.75 338.25 204.75 339.25 205.25 338.25 211.75 339.75 211.75 339.75 213.25 337.25 213.25 336.75 212.25 334.25 212.25 333.25 213.25 331.75 211.25 331.25 211.75 333.25 213.25 332.25 214.75 334.75 214.75 334.75 213.25 336.75 212.75 337.25 213.75 336.25 214.25 336.25 215.75 337.75 215.75 338.25 216.75 338.75 215.25 337.25 215.25 337.25 213.75 340.75 213.75 341.25 214.75 342.75 214.75 343.25 215.75 340.25 217.25 341.25 218.75 339.25 219.25 341.75 219.75 342.25 220.75 340.25 221.25 339.75 222.25 338.25 221.25 337.25 222.25 338.25 223.75 336.25 225.25 333.75 222.75 334.75 221.25 333.25 219.25 331.25 221.25 331.25 225.75 329.75 227.25 328.75 226.25 327.75 227.25 325.25 226.25 324.75 228.25 323.75 227.75 323.75 226.25 320.25 226.25 319.25 227.25 321.25 227.25 321.25 229.75 323.25 227.75 325.25 229.25 325.25 230.75 323.25 231.25 322.25 233.75 322.75 232.25 324.75 231.75 325.25 230.75 328.75 230.75 326.75 229.75 328.25 226.75 329.25 227.25 329.25 228.75 330.75 228.75 331.25 229.75 331.75 227.25 332.75 226.75 334.25 230.75 331.25 231.75 332.75 231.75 333.25 233.75 335.75 234.75 333.75 232.75 333.75 231.25 334.75 230.75 335.25 231.75 337.25 232.25 337.25 234.75 338.25 233.75 339.25 234.25 339.25 235.75 337.75 237.25 334.25 237.25 332.75 235.25 330.25 237.25 329.75 236.25 327.75 235.75 327.25 232.25 327.25 233.75 326.25 234.25 327.25 236.75 326.25 237.25 324.75 235.75 324.25 233.25 324.25 235.75 326.25 238.25 326.25 240.75 327.25 241.75 329.75 241.75 330.25 243.75 329.25 244.25 328.75 243.25 326.25 243.25 325.25 242.25 325.25 244.75 327.75 244.75 329.25 246.25 329.25 247.75 328.25 248.25 326.25 246.25 325.75 249.25 321.25 248.25 320.25 250.75 321.75 250.75 322.25 251.75 323.25 250.75 327.75 250.75 327.75 249.25 329.75 247.75 330.75 243.25 334.25 243.25 333.75 244.25 332.25 244.25 332.25 245.75 331.25 246.25 332.25 247.25 331.75 252.25 330.75 251.75 330.75 250.25 329.25 250.25 329.25 251.75 330.25 252.25 329.75 253.25 328.25 253.25 327.75 252.25 324.25 252.25 327.25 254.25 325.25 256.75 326.75 255.75 328.25 257.25 327.75 258.25 326.25 258.25 327.25 259.25 327.25 263.75 328.25 264.25 328.25 265.75 327.25 266.25 325.75 264.75 325.75 261.25 324.75 260.75 323.75 257.25 322.25 258.25 322.25 259.75 324.25 260.25 323.75 262.25 322.25 261.25 322.25 262.75 321.25 263.25 320.75 261.25 319.75 260.75 320.75 259.25 318.75 257.75 319.75 256.75 318.75 254.25 319.75 253.75 321.75 255.75 321.75 254.25 322.75 253.75 323.75 255.75 322.75 253.25 321.25 253.25 320.75 252.25 319.75 253.25 318.75 252.25 317.25 253.25 316.25 252.25 318.25 254.75 316.75 256.25 314.25 256.25 313.75 254.25 312.25 255.25 310.75 252.25 312.75 250.75 313.25 252.75 314.75 252.75 314.75 250.25 316.75 249.25 315.75 248.25 313.25 248.25 311.75 251.25 308.75 249.75 312.75 246.75 312.75 245.25 311.75 246.25 309.25 246.25 308.75 244.25 306.75 243.75 309.25 241.75 310.25 242.25 310.25 244.75 312.75 243.75 310.75 242.75 312.75 241.25 311.75 240.25 310.25 241.25 308.75 238.25 311.75 237.75 312.25 238.75 314.75 238.75 315.25 237.75 316.75 237.75 313.75 235.75 313.75 233.25 313.25 235.75 315.25 237.25 314.75 238.25 309.75 236.75 311.75 234.25 310.25 234.25 308.75 232.25 310.75 231.75 311.75 232.75 311.75 229.25 312.75 228.25 310.25 229.25 309.75 231.25 308.25 231.25 308.25 232.75 309.25 233.25 308.75 235.25 306.25 234.25 303.25 236.25 302.75 235.25 300.75 234.75 302.25 231.75 304.25 232.25 303.25 233.25 303.75 233.75 304.25 232.75 305.75 232.75 305.75 231.25 302.25 231.25 299.75 235.25 298.75 234.75 298.75 232.25 297.75 234.25 294.75 233.75 295.75 231.25 298.75 229.75 296.75 227.25 302.75 225.75 304.75 223.75 304.75 222.25 303.75 223.25 301.25 222.25 299.75 220.75 300.75 218.25 298.25 218.25 297.75 217.25 297.25 217.75 298.25 218.75 296.75 220.25 294.25 220.25 293.75 218.25 294.75 217.75 295.75 218.75 294.75 217.75 295.75 216.25 294.75 215.75 294.75 214.25 293.25 214.25 294.25 216.75 293.25 217.25 292.25 223.75 291.25 224.25 290.75 222.25 288.25 222.25 287.25 221.25 287.25 223.75 289.25 224.25 289.25 226.75 286.25 227.25 286.25 228.75 289.25 226.75 291.25 228.25 290.25 229.25 290.25 231.75 292.25 233.25 291.75 234.25 288.25 234.25 287.75 230.25 285.25 231.25 286.25 232.25 285.75 234.25 283.75 232.75 283.75 231.25 281.25 232.25 282.25 233.25 281.75 234.25 280.25 234.25 279.75 232.25 277.75 231.75 278.75 230.75 277.75 229.75 278.25 228.75 280.75 229.75 278.75 226.75 279.75 225.75 279.25 225.25 278.25 226.25 278.25 228.75 276.25 229.25 277.25 230.25 276.75 232.25 275.75 231.25 274.75 232.25 273.75 231.75 274.75 229.25 273.25 230.25 270.75 227.25 267.25 226.25 267.25 228.75 268.25 229.25 267.25 232.75 268.75 232.75 269.25 234.75 270.25 233.75 271.25 234.25 271.25 235.75 269.75 237.25 268.25 237.25 266.75 235.75 267.75 234.25 266.25 235.25 265.25 233.25 264.75 236.25 263.25 236.25 262.75 235.25 260.25 236.25 262.25 237.75 260.25 238.25 260.25 239.75 259.25 240.25 258.75 239.25 255.75 238.75 255.75 237.25 257.75 235.25 256.25 235.25 255.75 233.25 254.25 235.25 256.25 236.25 255.75 237.25 254.25 237.25 255.25 238.25 254.25 239.75 257.75 239.75 258.25 240.75 259.75 240.75 260.25 242.75 261.25 243.25 260.75 244.25 258.25 244.75 261.75 244.75 262.25 242.75 263.75 243.75 265.25 241.75 266.75 241.75 267.25 244.75 268.75 244.75 269.25 245.75 270.25 244.75 271.75 245.75 270.75 244.75 271.25 243.75 272.75 243.75 274.25 245.25 273.25 248.75 275.25 250.75 275.75 250.25 273.75 248.75 275.25 246.75 276.25 247.25 276.25 248.75 277.75 247.75 279.25 249.25 277.25 251.25 277.25 252.75 278.25 253.25 277.75 254.25 276.25 254.25 275.75 253.25 273.25 254.25 271.75 249.25 269.75 248.75 270.75 247.25 269.25 247.25 269.25 248.75 271.25 250.25 271.25 252.75 273.25 254.25 272.25 255.25 273.25 257.75 275.75 256.75 274.75 255.75 275.25 254.75 278.25 255.25 277.25 256.75 280.25 258.75 278.25 259.25 277.25 260.75 278.75 260.75 279.25 262.75 281.75 262.75 283.25 264.25 283.25 268.75 281.75 268.75 281.75 265.25 280.75 269.25 279.75 268.25 278.25 269.25 277.75 268.25 275.25 268.25 274.75 267.25 272.25 268.25 272.25 271.75 271.25 272.25 270.25 270.25 270.25 272.75 273.25 276.25 271.75 278.25 270.25 278.25 271.25 280.75 269.75 282.25 268.25 282.25 267.75 279.25 266.75 281.25 264.25 281.25 263.75 280.25 260.25 279.25 261.25 280.75 263.25 281.25 263.25 283.75 261.25 284.25 261.25 285.75 262.75 285.75 263.25 286.75 260.25 287.25 259.75 285.25 257.75 284.75 258.75 282.25 256.25 283.25 254.75 281.75 255.25 280.75 257.75 280.75 258.75 279.25 256.25 279.25 255.25 280.25 252.75 278.25 251.75 279.25 250.75 278.75 250.75 276.25 249.75 275.75 249.75 273.25 248.75 272.75 249.75 271.25 248.75 272.25 247.75 271.75 247.75 270.25 249.75 267.75 247.75 266.75 248.75 264.25 246.75 263.75 247.75 261.25 246.25 262.25 245.75 260.25 243.25 260.25 242.25 262.75 243.25 261.75 245.25 262.25 243.25 264.25 244.25 265.75 242.25 267.25 240.75 265.25 239.25 265.25 238.75 266.25 237.25 265.25 238.25 266.25 237.25 267.75 238.75 267.75 240.75 265.75 241.25 267.75 243.25 268.25 242.75 269.25 241.25 269.25 241.25 270.75 242.25 269.75 245.75 269.75 246.25 271.75 245.25 272.25 245.25 273.75 246.75 272.75 247.25 273.75 249.25 274.25 248.75 275.25 244.25 275.25 243.25 276.25 242.75 273.25 241.25 273.75 242.25 274.25 242.25 275.75 245.25 277.75 246.25 276.75 247.25 277.75 248.75 276.75 250.25 280.75 249.25 281.25 247.25 279.25 246.25 280.25 247.25 281.25 246.75 282.25 245.25 282.25 244.75 280.25 243.75 282.25 242.25 281.25 242.25 282.75 243.25 283.25 243.25 285.75 241.25 288.25 242.25 290.75 246.75 290.75 247.25 292.75 248.25 293.25 248.25 296.75 249.25 297.25 249.25 298.75 250.75 297.75 251.25 299.75 257.75 299.75 259.25 301.75 261.75 301.75 262.75 300.75 264.25 302.25 264.25 304.75 265.25 305.75 262.25 306.75 265.75 310.75 265.75 309.25 267.25 307.75 270.75 306.75 270.75 305.25 271.75 304.75 271.75 302.25 270.75 301.75 270.75 295.25 275.25 290.75 276.75 290.75 277.75 288.25 282.75 283.75 281.75 282.25 282.75 281.75 283.25 278.75 286.75 278.75 287.75 277.75 288.25 278.75 290.75 278.75 291.25 279.75 296.75 281.75 297.75 280.75 297.75 277.25 299.75 275.75 299.75 274.25 302.25 270.75 308.75 270.75 310.25 268.75 313.75 268.75 314.25 269.75 316.75 269.75 317.25 270.75 320.75 270.75 321.25 269.75 322.75 269.75 324.75 271.75 325.25 268.75 330.75 268.75 327.75 267.75 329.25 265.75 330.75 266.75 330.75 262.25 334.75 261.75 339.75 255.75 338.75 253.25 339.75 252.75 340.75 253.75 339.75 246.25 338.25 247.25 337.75 246.25 335.25 246.25 334.75 245.25 337.75 243.75 336.75 242.75 337.25 241.75 339.25 242.25 339.25 244.75 342.75 243.75 344.75 241.75 340.75 240.75 340.75 239.25 341.75 238.75 340.75 237.25 342.75 234.25 341.25 233.25 341.25 235.75 340.25 236.25 339.75 234.25 338.75 233.75 339.75 232.25 338.25 233.25 334.75 230.25 338.75 229.75 339.25 228.75 342.75 227.75 343.25 228.75 341.25 230.25 341.25 231.75 343.75 231.75 342.75 230.75 343.25 229.75 345.25 230.25 345.25 234.75 344.25 235.25 346.25 238.25 345.25 239.75 346.75 239.75 347.25 237.75 349.75 238.75 348.75 236.25 350.75 235.75 350.75 233.25 348.75 231.75 348.75 226.25 350.25 224.75 352.75 224.75 350.75 223.25 352.25 221.75 354.75 222.75 356.25 220.75 358.75 220.75 360.25 218.75 361.75 218.75 363.25 220.75 365.75 220.75 369.75 215.75 370.75 206.25 368.25 205.25 366.75 207.25 364.25 207.25 363.75 203.25 364.75 202.75 365.25 204.75 366.75 204.75 368.25 202.75 369.25 203.75 371.75 202.75 379.75 195.75 380.75 192.25 384.25 189.75 389.75 191.75 393.25 188.75 394.25 189.75 395.25 188.75 396.75 188.75 397.25 189.75 400.75 189.75 401.25 188.75 403.75 189.75 404.75 188.75 405.25 190.75 410.75 190.75 410.75 189.25 411.75 188.75 412.25 190.75 414.75 190.75 414.75 187.25 415.75 186.75 416.25 189.75 417.75 189.75 418.25 188.75 419.25 189.75 420.25 188.75 422.75 189.75 422.75 188.25 423.75 187.75 425.25 189.25 425.25 191.75 426.75 191.75 425.75 190.75 426.25 189.75 428.75 189.75 429.25 190.75 428.25 191.75 429.75 191.75 430.75 190.75 430.75 185.25 431.75 184.75 430.75 178.25 431.75 177.75 431.75 173.25 433.75 170.75 433.75 169.25 431.75 166.25 434.75 165.75 434.75 164.25 436.75 163.75 438.25 160.75 441.75 159.75 442.75 158.75zM269.75 304.25 270.75 303.75 271.25 304.75 270.25 305.25zM264.75 302.75 265.25 300.75 267.25 301.25 265.75 303.25zM260.75 300.25 261.75 299.75 262.25 300.75 261.25 301.25zM261.75 299.25 262.75 298.75 263.25 299.75 262.25 300.25zM265.75 298.25 266.75 297.75 267.25 298.75 266.25 299.25zM268.75 297.25 269.75 296.75 270.25 297.75 269.25 298.25zM255.25 295.75 256.25 296.25 255.75 298.25 254.75 297.75zM250.75 296.25 253.75 295.75 254.25 298.75 252.25 299.25zM266.25 295.25 265.75 297.25 262.75 296.75 265.25 294.75zM258.75 295.25 260.75 293.75 262.25 295.75 259.25 296.25zM257.25 293.75 259.25 296.25 258.75 300.25 256.75 297.75zM267.75 294.75 269.25 292.75 271.25 293.25 269.75 295.25zM257.75 293.25 259.75 292.75 260.25 293.75 258.25 294.25zM270.75 291.25 272.75 290.75 273.25 292.75 272.25 293.25zM268.25 288.75 269.25 289.25 268.75 291.25 267.75 290.75zM265.25 287.75 266.25 288.25 265.75 292.25 263.75 290.75zM244.25 287.75 245.25 288.25 245.25 289.75 243.25 290.25 242.75 289.25zM270.25 286.75 271.25 287.25 270.75 289.25 269.75 288.75zM246.75 287.25 247.75 286.75 248.25 287.75 247.25 288.25zM272.75 286.25 273.75 285.75 276.25 287.75 273.25 288.25zM277.75 286.75 278.25 284.75 280.25 285.25 278.75 287.25zM248.75 287.25 250.25 285.75 252.75 285.75 253.25 284.75 254.75 285.75 256.75 283.75 257.25 286.75 256.25 287.25 256.25 289.75 258.25 287.75 259.75 287.75 260.25 289.75 262.75 288.75 263.25 292.75 264.75 292.75 265.25 293.75 262.25 294.25 259.75 291.25 256.25 291.25 257.25 292.75 254.25 293.25 254.25 294.75 252.25 295.25 251.75 294.25 252.75 293.25 250.25 294.25 247.75 291.25 248.75 290.75 249.25 288.75 250.25 289.25 250.25 290.75 251.75 290.75 253.75 288.25 252.25 287.25 252.25 289.75 251.25 290.25 250.75 288.25 249.25 288.25zM274.25 282.75 275.25 283.25 274.75 286.25 273.75 285.75zM264.75 285.75 265.25 284.75 267.75 284.75 268.25 282.75 273.25 284.25 271.75 286.25 270.25 286.25 269.75 285.25 268.75 286.25zM246.75 282.75 247.25 284.75 245.25 285.25 244.75 287.25 243.25 287.25 242.75 286.25 243.75 285.75 243.75 283.25zM270.75 282.25 272.75 281.75 273.25 282.75 271.25 283.25zM266.25 281.75 267.25 282.25 266.75 284.25 265.75 283.75zM249.75 281.75 250.25 282.75 249.25 283.25 249.25 285.75 248.25 286.25 247.75 282.25zM278.25 280.75 280.25 282.25 278.75 284.25 277.75 283.75zM280.25 279.75 281.25 280.25 280.75 282.25 279.75 281.75zM274.75 281.75 275.25 279.75 277.25 280.25 275.75 282.25zM252.75 279.75 253.25 281.75 251.25 284.25 250.75 281.25zM295.75 278.25 296.75 277.75 297.25 278.75 296.25 279.25zM277.75 277.25 278.75 276.75 279.25 277.75 278.25 278.25zM281.75 276.25 282.75 275.75 283.25 276.75 282.25 277.25zM275.75 276.25 277.75 275.75 278.25 276.75 276.25 277.25zM248.75 276.25 249.75 275.75 250.25 276.75 249.25 277.25zM282.75 275.25 283.75 274.75 284.25 275.75 283.25 276.25zM272.75 275.25 275.75 274.75 276.25 275.75 273.25 276.25zM285.75 274.25 286.75 273.75 287.25 274.75 286.25 275.25zM298.75 273.25 299.75 272.75 300.25 273.75 299.25 274.25zM294.75 273.25 295.75 272.75 296.25 273.75 295.25 274.25zM297.75 272.25 298.75 271.75 299.25 272.75 298.25 273.25zM288.75 273.25 289.75 272.75 290.25 273.75 291.75 273.75 291.75 272.25 293.75 271.75 295.25 276.75 294.25 277.25 292.75 275.25 289.25 275.25zM277.75 272.25 280.75 271.75 281.25 274.75 280.25 275.25 279.75 273.25 278.25 273.25zM271.75 273.75 272.25 271.75 274.25 272.25 272.75 274.25zM299.75 271.25 300.75 270.75 301.25 271.75 300.25 272.25zM273.75 271.25 276.75 270.75 277.25 272.75 275.25 273.25zM276.75 270.25 277.75 269.75 278.25 270.75 277.25 271.25zM299.25 268.75 300.25 269.25 299.75 271.25 298.75 270.75zM288.75 269.25 289.75 268.75 290.25 269.75 291.75 269.75 292.25 271.75 291.25 272.25 290.75 271.25 289.25 271.25zM284.25 268.75 287.25 272.25 285.75 274.25 282.75 272.75zM317.75 268.25 318.75 267.75 319.25 268.75 318.25 269.25zM313.75 268.25 315.75 267.75 316.25 268.75 314.25 269.25zM299.75 268.25 301.75 267.75 302.25 268.75 300.25 269.25zM294.25 266.75 296.25 269.25 294.75 271.25 293.75 270.75zM285.75 268.75 286.25 266.75 289.25 267.25 286.75 269.25zM242.75 267.25 243.75 266.75 244.25 267.75 243.25 268.25zM324.25 265.75 325.25 266.25 324.75 268.25 323.75 267.75zM298.75 266.25 299.75 265.75 300.25 266.75 299.25 267.25zM295.75 266.25 296.75 265.75 297.25 266.75 296.25 267.25zM288.75 266.25 289.75 265.75 290.25 266.75 289.25 267.25zM314.75 265.25 315.75 264.75 317.25 266.75 315.25 267.25zM296.75 265.25 297.75 264.75 298.25 265.75 297.25 266.25zM245.25 264.75 247.25 265.25 246.25 266.25 246.25 267.75 247.25 268.25 246.75 270.25 244.75 268.75zM321.25 263.75 322.25 264.25 322.25 266.75 323.25 267.25 322.75 269.25 318.75 267.75 318.75 266.25 320.75 265.75zM297.75 264.25 298.75 263.75 299.25 264.75 298.25 265.25zM313.25 262.75 314.25 263.25 313.75 266.25 312.75 265.75zM302.75 263.25 305.75 262.75 306.25 265.75 305.25 266.25 304.75 265.25 303.25 265.25zM316.75 262.25 317.75 261.75 319.25 263.75 317.25 264.25zM315.25 261.75 316.25 262.25 315.75 264.25 314.75 263.75zM309.25 260.75 310.25 261.25 309.75 263.25 308.75 262.75zM328.75 261.75 329.25 259.75 331.25 260.25 329.75 262.25zM304.25 259.75 305.25 260.25 304.75 262.25 303.75 261.75zM290.25 259.75 291.25 260.25 290.75 263.25 289.75 262.75zM285.25 259.75 288.25 261.25 287.75 262.25 286.25 262.25 287.25 263.25 286.25 264.75 287.75 264.75 287.75 266.25 283.75 265.75 284.75 263.25 283.25 263.25 282.75 262.25 284.75 261.75zM316.25 258.75 317.25 259.25 317.25 260.75 315.25 261.25 314.75 260.25zM304.75 259.25 305.75 258.75 306.25 259.75 305.25 260.25zM293.75 259.25 294.75 258.75 295.25 259.75 294.25 260.25zM279.75 260.75 281.25 258.75 283.25 259.25 281.75 261.25zM327.75 258.25 328.75 257.75 329.25 258.75 328.25 259.25zM316.75 258.25 318.75 257.75 319.25 258.75 317.25 259.25zM310.75 258.25 311.75 257.75 312.25 258.75 311.25 259.25zM307.75 258.25 309.75 257.75 310.25 258.75 308.25 259.25zM333.25 256.75 335.25 257.25 334.75 260.25 332.75 258.75zM299.75 257.25 300.75 256.75 301.25 257.75 300.25 258.25zM280.75 257.25 281.75 256.75 282.25 257.75 281.25 258.25zM327.75 255.25 330.75 254.75 331.25 255.75 328.25 256.25zM296.75 255.25 297.75 254.75 299.25 256.75 297.25 257.25zM283.75 255.25 284.75 254.75 285.25 255.75 284.25 256.25zM336.75 254.25 337.75 253.75 338.25 254.75 337.25 255.25zM307.75 255.75 308.25 253.75 310.25 254.25 308.75 256.25zM298.75 254.25 301.75 253.75 302.25 255.75 301.25 256.25zM293.75 254.25 296.75 253.75 297.25 254.75 294.25 255.25zM281.25 253.75 282.25 254.25 281.75 256.25 280.75 255.75zM277.75 254.25 278.75 253.75 279.25 254.75 278.25 255.25zM296.75 253.25 297.75 252.75 298.25 253.75 297.25 254.25zM289.25 252.75 297.25 257.25 297.25 261.75 296.25 262.25 297.25 263.25 296.75 265.25 294.75 263.25 292.75 262.75 292.75 260.25 293.75 259.75 294.75 261.75 294.75 260.25 295.75 259.75 294.75 257.25 293.75 259.25 292.75 258.25 291.25 259.25 290.75 256.25 288.75 255.75zM284.25 252.75 288.25 253.25 288.25 255.75 289.25 256.25 288.75 260.25 285.75 256.75 286.75 254.25 284.25 254.25zM304.75 252.25 305.75 251.75 306.25 252.75 305.25 253.25zM295.75 252.25 296.75 251.75 297.25 252.75 296.25 253.25zM336.75 251.25 337.75 250.75 338.25 251.75 337.25 252.25zM301.75 251.25 303.75 250.75 304.25 252.75 302.25 253.25zM297.75 251.25 299.75 250.75 300.25 251.75 298.25 252.25zM277.75 252.25 279.25 250.75 282.75 250.75 284.25 252.75 282.25 253.25 281.25 252.25 280.75 253.25 278.25 253.25zM337.75 250.25 339.75 249.75 340.25 251.75 339.25 252.25zM287.75 250.25 288.75 249.75 289.25 250.75 288.25 251.25zM333.25 248.75 336.25 249.25 335.75 254.25 334.75 253.75 334.75 251.25 332.75 249.75zM322.75 249.25 323.75 248.75 324.25 249.75 323.25 250.25zM326.75 248.25 327.75 247.75 328.25 248.75 327.25 249.25zM302.75 248.25 303.75 247.75 304.25 248.75 303.25 249.25zM295.75 249.25 297.25 247.75 298.75 247.75 301.25 249.75 296.25 250.25zM307.75 246.75 308.25 248.75 306.25 251.25 305.75 248.25zM303.75 247.25 305.75 246.75 306.25 247.75 304.25 248.25zM293.25 246.75 294.25 247.25 294.25 248.75 292.25 249.25 291.75 248.25zM288.75 247.25 289.75 246.75 290.25 247.75 289.25 248.25zM285.75 247.25 286.75 246.75 287.25 247.75 286.25 248.25zM283.75 247.25 284.75 246.75 285.25 247.75 284.25 248.25zM332.75 246.25 334.75 245.75 335.25 246.75 333.25 247.25zM282.75 245.75 283.25 247.75 281.75 249.25 280.25 249.25 278.75 247.75 279.25 246.75 281.75 246.75zM295.75 246.25 299.75 244.75 302.25 246.75 300.25 248.25 299.75 247.25 296.25 247.25zM333.75 244.25 334.75 243.75 335.25 244.75 334.25 245.25zM290.75 243.25 291.75 242.75 292.25 243.75 291.25 244.25zM267.75 243.25 268.75 242.75 269.25 243.75 268.25 244.25zM303.75 242.25 304.75 241.75 305.25 242.75 304.25 243.25zM300.75 242.25 301.75 241.75 302.25 242.75 301.25 243.25zM295.75 242.25 296.75 241.75 297.25 242.75 296.25 243.25zM304.75 241.25 305.75 240.75 306.25 241.75 305.25 242.25zM283.25 240.75 285.25 242.25 284.25 243.25 285.25 244.25 284.75 246.25 282.75 244.75zM279.75 241.25 280.75 240.75 281.25 241.75 280.25 242.25zM299.75 240.25 300.75 239.75 301.25 240.75 300.25 241.25zM294.75 240.25 295.75 239.75 296.25 240.75 295.25 241.25zM292.75 240.25 293.75 239.75 294.25 240.75 293.25 241.25zM289.25 239.75 291.25 241.25 289.75 243.25 288.75 242.75zM259.75 240.25 260.75 239.75 261.25 240.75 260.25 241.25zM333.25 238.75 336.25 239.25 334.75 242.25 332.75 240.75zM330.75 239.25 331.75 238.75 332.25 239.75 331.25 240.25zM305.75 240.25 307.75 238.75 309.25 240.75 306.25 241.25zM283.75 239.25 284.75 238.75 288.25 241.75 285.25 242.25 283.75 240.75zM270.75 241.25 273.75 240.75 273.75 239.25 274.75 238.75 275.25 242.75 277.75 242.75 278.25 243.75 280.75 243.75 281.25 244.75 276.25 245.25 273.75 243.25 271.25 243.25zM262.25 238.75 263.25 239.25 263.25 241.75 261.25 242.25 260.75 241.25 261.75 240.75zM338.75 238.25 340.75 237.75 341.25 238.75 339.25 239.25zM328.75 238.25 329.75 237.75 330.25 238.75 329.25 239.25zM285.75 238.25 287.75 237.75 288.25 239.75 286.25 240.25zM275.75 238.25 276.75 237.75 277.25 238.75 276.25 239.25zM265.25 237.75 267.25 238.25 267.25 239.75 268.25 240.25 267.75 242.25 265.75 240.25 263.75 239.75zM307.75 237.25 308.75 236.75 309.25 237.75 308.25 238.25zM298.75 237.25 299.75 236.75 300.25 237.75 299.25 238.25zM304.75 235.75 305.25 238.75 303.25 241.25 302.75 238.25zM302.75 235.75 303.25 237.75 301.25 240.25 300.75 236.25zM297.75 235.75 298.25 237.75 296.25 238.25 294.25 240.25 293.75 237.25zM282.75 236.25 284.75 235.75 285.25 237.75 283.25 238.25zM264.75 236.25 266.75 235.75 267.25 236.75 265.25 237.25zM346.25 234.75 347.25 235.25 346.75 238.25 345.75 237.75zM308.75 235.25 309.75 234.75 310.25 235.75 309.25 236.25zM306.25 234.75 307.25 235.25 306.75 237.25 305.75 236.75zM293.25 233.75 294.25 234.25 293.75 237.25 292.75 236.75zM268.75 238.25 270.75 237.75 271.75 235.25 273.75 234.75 274.25 232.75 275.25 233.25 275.25 235.75 276.75 235.75 277.25 232.75 278.25 233.25 278.25 234.75 279.25 233.75 281.75 234.75 283.25 232.75 285.25 234.25 282.25 236.25 281.75 238.25 279.25 236.25 280.25 238.75 283.25 239.25 282.75 241.25 280.25 240.25 279.75 241.25 276.25 242.25 275.75 241.25 276.75 240.75 277.75 237.25 276.25 237.25 275.75 238.25 273.25 237.25 271.25 239.25 270.75 241.25 268.75 240.75zM271.75 233.25 272.75 232.75 273.25 233.75 272.25 234.25zM268.75 229.25 271.75 228.75 272.25 229.75 271.25 230.75 272.75 230.75 273.25 231.75 270.25 233.25 268.75 231.75 269.75 230.75zM334.75 228.25 335.75 227.75 336.25 228.75 335.25 229.25zM297.25 228.25 294.75 231.25 292.75 230.75 295.25 227.75zM345.75 227.25 346.75 226.75 347.25 227.75 346.25 228.25zM338.25 226.75 339.25 227.25 339.25 228.75 337.25 229.25 336.75 228.25zM268.25 226.75 269.25 227.25 268.75 229.25 267.75 228.75zM342.75 226.25 343.75 225.75 344.25 226.75 343.25 227.25zM338.75 226.25 339.75 225.75 340.25 226.75 339.25 227.25zM335.75 226.25 336.75 225.75 337.25 226.75 336.25 227.25zM333.75 226.25 334.75 225.75 335.25 226.75 334.25 227.25zM291.25 225.75 293.25 226.25 292.75 230.25 290.75 229.75 291.75 228.75 290.75 227.75zM343.75 225.25 344.75 224.75 345.25 225.75 344.25 226.25zM345.75 224.25 346.75 223.75 347.25 224.75 346.25 225.25zM333.75 224.25 334.75 223.75 335.25 224.75 334.25 225.25zM300.75 224.25 301.75 223.75 302.25 224.75 301.25 225.25zM293.75 225.25 295.25 223.75 296.25 224.75 297.25 223.75 298.25 224.25 297.75 226.25 294.25 226.25zM338.75 223.25 339.75 222.75 340.25 223.75 339.25 224.25zM297.75 222.25 300.75 221.75 301.25 223.75 300.25 224.25zM346.25 222.25 343.75 224.25 341.75 223.75 341.75 222.25 343.75 221.75 344.25 220.75zM331.75 221.25 332.75 220.75 333.25 221.75 332.25 222.25zM294.75 221.25 295.75 220.75 296.25 221.75 295.25 222.25zM293.25 220.75 294.25 221.25 293.75 225.25 292.75 224.75zM354.75 220.25 355.75 219.75 356.25 220.75 355.25 221.25zM344.75 219.25 346.75 218.75 347.25 219.75 345.25 220.25zM298.25 218.75 299.25 219.25 298.75 221.25 297.75 220.75zM354.75 218.25 355.75 217.75 356.25 218.75 355.25 219.25zM346.75 217.25 348.75 216.75 349.25 217.75 347.25 218.25zM341.75 217.25 342.75 216.75 343.25 217.75 342.25 218.25zM357.75 216.25 358.75 215.75 359.25 216.75 358.25 217.25zM346.75 214.25 348.75 213.75 349.25 214.75 347.25 215.25zM352.75 215.25 355.25 212.75 357.25 214.25 356.75 216.25 355.75 215.25 353.25 216.25zM345.75 212.75 347.25 216.75 345.25 217.25 345.25 218.75 344.25 219.25 343.75 214.25zM342.75 213.25 343.75 212.75 344.25 213.75 343.25 214.25zM340.75 213.25 341.75 212.75 342.25 213.75 341.25 214.25zM349.75 212.25 351.75 211.75 352.25 213.75 351.25 214.25zM367.75 210.25 368.75 209.75 369.25 210.75 368.25 211.25zM365.75 210.25 366.75 209.75 367.25 210.75 366.25 211.25zM354.75 210.25 355.75 209.75 356.25 210.75 355.25 211.25zM346.75 210.25 349.75 209.75 350.25 210.75 347.25 211.25zM360.75 208.25 362.75 207.75 363.25 208.75 361.25 209.25zM354.75 208.25 355.75 207.75 356.25 208.75 355.25 209.25zM345.75 208.25 346.75 207.75 347.25 208.75 346.25 209.25zM357.75 207.25 359.75 206.75 360.25 207.75 358.25 208.25zM353.75 207.25 354.75 206.75 355.25 207.75 354.25 208.25zM339.75 208.25 341.75 206.75 342.25 209.75 345.75 209.75 346.25 210.75 342.25 212.25 339.75 209.75zM339.75 206.25 340.75 205.75 341.25 206.75 340.25 207.25zM362.25 204.75 363.25 205.25 362.75 207.25 361.75 206.75zM358.25 203.75 359.25 204.25 358.75 206.25 357.75 205.75zM354.75 202.75 355.25 203.75 354.25 204.25 354.25 205.75 352.25 206.25 353.25 208.75 351.25 209.25 350.75 205.25 352.75 204.75 353.25 202.75zM347.75 203.25 349.75 202.75 351.25 204.75 348.25 205.25zM343.25 202.75 344.25 203.75 346.75 203.75 348.25 205.25 347.75 206.25 344.25 207.25 343.75 209.25 342.75 208.75zM361.75 201.25 362.75 200.75 363.25 201.75 362.25 202.25zM338.75 201.25 339.75 200.75 340.25 201.75 339.25 202.25zM357.75 200.25 358.75 199.75 361.25 201.75 358.25 202.25zM350.25 199.75 351.25 200.25 351.25 201.75 349.25 202.25 348.75 201.25zM343.75 201.25 345.75 199.75 346.25 201.75 347.75 201.75 348.25 202.75 345.25 203.25zM354.75 199.25 355.75 198.75 356.25 199.75 355.25 200.25zM361.75 198.25 362.75 197.75 364.25 199.75 362.25 200.25zM341.75 199.25 343.25 197.75 345.25 198.25 344.75 200.25 342.25 200.25zM371.75 197.25 373.75 196.75 374.25 197.75 372.25 198.25zM373.75 196.25 374.75 195.75 375.25 196.75 374.25 197.25zM369.75 195.75 371.25 197.25 371.25 198.75 370.25 199.25 370.25 200.75 366.25 204.25 364.75 202.75 365.75 201.75 364.75 200.25 367.75 199.75 368.75 198.75 368.75 196.25zM358.25 195.75 359.25 196.25 358.75 198.25 357.75 197.75zM370.75 195.25 371.75 194.75 372.25 195.75 371.25 196.25zM349.75 195.25 350.75 194.75 351.25 195.75 350.25 196.25zM376.75 194.25 377.75 193.75 378.25 194.75 377.25 195.25zM372.75 194.25 373.75 193.75 374.25 194.75 373.25 195.25zM365.25 193.75 368.25 195.25 368.25 196.75 367.25 197.25 368.25 198.25 367.75 199.25 365.25 199.25 363.75 197.75 364.25 196.75 365.75 196.75 363.75 195.75zM362.25 192.75 363.25 193.25 362.75 196.25 361.75 195.75zM378.75 192.25 379.75 191.75 380.25 192.75 379.25 193.25zM366.75 191.25 368.75 190.75 369.25 191.75 367.25 192.25zM361.75 191.25 362.75 190.75 363.25 191.75 362.25 192.25zM354.75 191.25 355.75 190.75 356.25 191.75 355.25 192.25zM364.75 190.25 365.75 189.75 366.25 190.75 365.25 191.25zM358.75 190.25 360.75 189.75 361.25 190.75 359.25 191.25zM388.75 189.25 389.75 188.75 390.25 189.75 389.25 190.25zM379.75 189.25 380.75 188.75 381.25 189.75 380.25 190.25zM428.75 188.25 429.75 187.75 430.25 188.75 429.25 189.25zM371.75 188.25 373.75 187.75 374.25 188.75 372.25 189.25zM358.75 188.25 359.75 187.75 360.25 188.75 359.25 189.25zM421.75 187.25 422.75 186.75 423.25 187.75 422.25 188.25zM406.75 187.25 407.75 186.75 408.25 187.75 407.25 188.25zM391.75 187.25 392.75 186.75 393.25 187.75 392.25 188.25zM390.25 186.75 391.25 187.25 390.75 189.25 389.75 188.75zM366.75 187.25 367.75 186.75 368.25 187.75 367.25 188.25zM418.25 185.75 419.25 186.25 418.75 188.25 417.75 187.75zM387.75 186.25 389.75 185.75 390.25 186.75 388.25 187.25zM424.25 184.75 425.25 185.25 424.75 188.25 423.75 187.75zM380.75 185.25 381.75 184.75 383.25 186.75 381.25 187.25zM370.75 186.75 371.25 184.75 373.75 184.75 374.25 185.75 375.25 184.75 378.25 185.25 377.75 186.25 376.25 186.25 375.75 189.25 373.75 187.25zM365.75 185.25 366.75 184.75 367.25 185.75 366.25 186.25zM356.75 185.25 357.75 184.75 358.25 185.75 357.25 186.25zM428.25 183.75 429.25 184.25 428.75 187.25 427.75 186.75zM399.75 184.25 400.75 183.75 401.25 184.75 400.25 185.25zM391.75 184.25 392.75 183.75 393.25 184.75 392.25 185.25zM382.75 184.25 383.75 183.75 384.25 184.75 383.25 185.25zM355.25 183.75 357.25 184.25 356.25 186.75 358.25 189.25 357.75 190.25 353.75 188.75zM418.75 183.25 419.75 182.75 420.25 183.75 421.75 183.75 422.25 185.75 419.25 186.25zM405.25 182.75 406.25 183.25 405.75 185.25 404.75 184.75zM393.75 183.25 395.75 182.75 396.25 184.75 395.25 185.25zM387.25 182.75 388.25 183.25 388.25 184.75 386.25 185.25 385.75 184.25zM380.75 183.25 381.75 182.75 382.25 183.75 381.25 184.25zM420.75 182.25 421.75 181.75 422.25 182.75 421.25 183.25zM403.75 182.25 404.75 181.75 405.25 182.75 404.25 183.25zM383.75 182.25 384.75 181.75 385.25 182.75 384.25 183.25zM428.75 182.75 429.25 180.75 431.25 181.25 429.75 183.25zM424.25 180.75 425.25 181.25 424.75 183.25 423.75 182.75zM404.75 181.25 405.75 180.75 406.25 181.75 405.25 182.25zM391.75 181.25 392.75 180.75 393.25 181.75 392.25 182.25zM380.75 181.25 381.75 180.75 382.25 181.75 381.25 182.25zM375.75 181.25 378.75 180.75 380.25 182.25 379.25 183.25 380.25 184.75 378.25 185.25zM374.25 180.75 375.25 181.25 374.75 184.25 373.75 183.75zM362.75 181.25 363.75 180.75 364.25 181.75 363.25 182.25zM413.25 179.75 415.25 181.25 414.75 183.25 412.75 181.75zM400.75 178.75 401.25 180.75 398.25 182.25 397.75 180.25zM395.75 179.25 397.75 178.75 398.25 179.75 396.25 180.25zM365.25 178.75 367.25 179.25 367.25 181.75 369.25 179.75 370.25 180.25 369.25 182.75 371.25 184.75 370.25 185.25 369.75 188.25 368.75 187.75 368.75 184.25 367.25 185.25 366.75 183.25 365.75 182.75 365.75 180.25 364.75 179.75zM421.75 177.75 422.25 178.75 421.25 179.25 421.25 181.75 420.25 182.25 419.75 178.25zM403.25 177.75 404.25 178.25 403.75 180.25 402.75 179.75zM392.75 178.25 393.75 177.75 394.25 178.75 393.25 179.25zM381.75 178.25 382.75 177.75 383.25 178.75 382.25 179.25zM375.75 178.25 377.75 177.75 378.25 179.75 376.25 180.25zM366.75 178.25 367.75 177.75 368.25 178.75 367.25 179.25zM425.25 176.75 427.25 178.25 426.75 180.25 424.75 178.75zM410.75 177.25 415.75 176.75 416.25 177.75 411.25 178.25zM409.75 176.75 410.25 178.75 409.25 179.25 409.25 180.75 406.25 181.25 405.75 180.25 407.75 179.75 407.75 178.25zM387.25 176.75 389.75 176.75 391.25 178.25 390.25 179.75 391.75 179.75 392.25 180.75 391.25 181.25 390.75 183.25 389.25 183.25 388.75 181.25 384.75 180.75 385.25 178.75 386.25 179.75 388.75 178.75 386.75 177.75zM377.75 177.25 378.75 176.75 379.25 177.75 378.25 178.25zM423.75 176.25 424.75 175.75 425.25 176.75 424.25 177.25zM397.75 176.25 398.75 175.75 399.25 176.75 398.25 177.25zM391.75 177.75 392.25 175.75 394.25 176.25 392.75 178.25zM384.75 176.25 385.75 175.75 386.25 176.75 385.25 177.25zM365.25 175.75 366.25 176.25 365.75 178.25 364.75 177.75zM403.75 174.25 404.75 173.75 405.25 174.75 404.25 175.25zM401.25 173.75 402.25 174.25 401.75 176.25 400.75 175.75zM386.75 174.25 388.75 173.75 389.25 174.75 387.25 175.25zM383.25 173.75 384.25 174.25 384.25 176.75 382.25 177.25 381.75 176.25 382.75 175.75zM376.75 174.25 377.75 173.75 378.25 174.75 377.25 175.25zM410.75 173.25 412.75 172.75 413.25 174.75 411.25 175.25zM393.75 173.25 394.75 172.75 396.25 174.75 394.25 175.25zM356.25 173.25 356.25 174.75 354.75 176.25 351.75 174.75 352.25 173.75 354.75 173.75 355.25 172.75zM399.75 172.25 400.75 171.75 401.25 172.75 400.25 173.25zM379.75 173.25 381.25 171.75 383.25 172.25 382.75 174.25 380.25 174.25zM394.75 171.25 395.75 170.75 396.25 171.75 395.25 172.25zM369.75 171.25 370.75 170.75 371.25 171.75 370.25 172.25zM367.75 171.25 368.75 170.75 371.25 173.75 369.25 174.25 367.75 172.75zM362.25 170.75 364.25 172.25 364.25 173.75 366.75 173.75 368.25 175.25 367.75 176.25 366.25 176.25 365.75 175.25 361.25 174.25 361.25 175.75 364.25 176.25 364.25 177.75 361.75 181.25 360.25 179.25 361.25 183.75 363.75 183.75 364.25 182.75 366.25 183.25 366.25 184.75 364.25 185.25 364.25 186.75 365.25 187.25 364.75 190.25 363.75 189.75 362.75 186.25 360.25 186.25 359.75 187.25 358.75 186.75 359.75 183.25 357.75 182.75 358.75 181.75 357.75 179.25 359.75 177.75 357.75 172.25 358.75 171.75 359.25 172.75 361.75 172.75zM343.75 171.25 345.75 170.75 346.25 171.75 344.25 172.25zM396.75 170.25 397.75 169.75 399.25 171.75 397.25 172.25zM368.75 170.25 369.75 169.75 370.25 170.75 369.25 171.25zM425.75 169.25 427.75 168.75 428.25 170.75 427.25 171.25zM358.75 169.25 360.75 168.75 361.25 170.75 360.25 171.25zM389.75 168.75 390.25 171.75 388.75 173.25 386.25 173.25 385.25 174.25 383.75 172.75 386.75 169.75 387.25 167.75 388.25 168.25 388.25 169.75zM384.75 168.25 385.75 167.75 386.25 168.75 385.25 169.25zM361.75 168.25 362.75 167.75 363.25 168.75 362.25 169.25zM357.75 168.25 358.75 167.75 359.25 168.75 358.25 169.25zM404.75 167.25 405.75 166.75 406.25 167.75 405.25 168.25zM393.75 166.75 394.25 167.75 393.25 168.75 395.25 170.75 393.25 172.25 393.25 174.75 392.25 175.25 391.75 173.25 390.75 172.75 390.75 170.25 391.75 169.75 392.75 170.75 391.75 169.75 391.75 167.25zM367.25 166.75 368.25 167.25 367.75 169.25 366.75 168.75zM390.25 165.75 391.25 166.25 391.25 167.75 389.25 168.25 388.75 167.25zM384.75 166.25 385.75 165.75 386.25 166.75 385.25 167.25zM380.75 166.25 382.75 165.75 383.25 167.75 385.25 169.75 383.25 170.25 380.75 167.75zM362.75 165.25 363.75 164.75 364.25 165.75 363.25 166.25zM353.75 165.25 354.75 164.75 355.75 165.75 356.75 164.75 358.25 167.75 355.25 168.25 353.75 166.75zM415.75 164.25 417.75 163.75 419.25 165.75 417.25 166.25zM376.75 164.25 377.75 163.75 378.25 164.75 377.25 165.25zM374.75 164.25 375.75 163.75 376.25 164.75 375.25 165.25zM359.75 164.25 361.75 163.75 362.25 165.75 360.25 166.25zM432.75 163.25 433.75 162.75 434.25 163.75 433.25 164.25zM396.25 162.75 397.25 163.25 396.75 165.25 395.75 164.75zM389.75 163.25 391.75 162.75 393.25 164.75 391.25 166.25 389.75 164.75zM375.75 163.25 376.75 162.75 377.25 163.75 376.25 164.25zM369.25 162.75 370.25 163.25 370.25 164.75 368.25 165.25 367.75 164.25zM356.75 163.25 357.75 162.75 358.25 163.75 357.25 164.25zM396.75 162.25 397.75 161.75 398.25 162.75 397.25 163.25zM391.75 162.25 392.75 161.75 393.25 162.75 392.25 163.25zM417.75 161.25 418.75 160.75 419.25 161.75 418.25 162.25zM392.75 161.25 394.75 160.75 395.25 161.75 393.25 162.25zM377.75 161.25 378.75 160.75 379.25 161.75 378.25 162.25zM384.25 159.75 385.25 160.25 384.75 162.25 383.75 161.75zM368.75 160.25 369.75 159.75 371.25 161.75 369.25 162.25zM365.25 159.75 366.25 160.25 366.25 161.75 364.25 162.25 363.75 161.25zM398.75 159.25 399.75 158.75 400.25 159.75 399.25 160.25zM393.75 159.25 394.75 158.75 395.25 159.75 394.25 160.25zM363.75 159.25 364.75 158.75 365.25 159.75 364.25 160.25zM369.75 158.25 370.75 157.75 371.25 158.75 370.25 159.25zM357.75 159.25 359.25 157.75 360.75 157.75 361.25 159.75 363.75 159.75 364.25 160.75 360.25 162.25 359.75 161.25 357.75 160.75zM416.75 156.75 417.25 157.75 416.25 158.25 416.25 159.75 414.25 161.25 413.75 157.25zM399.75 157.25 400.75 156.75 401.25 157.75 400.25 158.25zM387.25 156.75 389.25 157.25 388.75 161.25 386.75 160.75zM424.75 156.25 425.75 155.75 426.25 156.75 425.25 157.25zM393.25 155.75 394.25 156.25 394.25 157.75 392.25 158.25 391.75 157.25zM362.75 156.25 363.75 155.75 366.25 157.75 368.75 156.75 369.25 158.75 365.25 159.25 364.75 158.25 362.75 157.75zM419.75 155.25 422.75 154.75 424.25 157.75 422.25 158.25zM414.75 155.25 415.75 154.75 416.25 155.75 415.25 156.25zM389.25 154.75 390.25 155.25 389.75 157.25 388.75 156.75zM361.75 155.25 362.75 154.75 363.25 155.75 362.25 156.25zM416.75 154.25 417.75 153.75 418.25 154.75 417.25 155.25zM370.25 153.75 372.25 155.25 370.75 157.25 369.75 156.75zM400.75 153.25 401.75 152.75 402.25 153.75 401.25 154.25zM391.25 152.75 392.25 153.25 391.75 155.25 390.75 154.75zM387.75 153.25 388.75 152.75 389.25 153.75 388.25 154.25zM426.75 152.25 427.75 151.75 428.25 152.75 427.25 153.25zM399.75 152.25 400.75 151.75 401.25 152.75 400.25 153.25zM397.75 151.75 399.25 153.25 398.75 156.25 396.25 157.25 392.75 154.75 393.25 152.75 395.75 153.75zM388.75 152.25 389.75 151.75 390.25 152.75 389.25 153.25zM369.75 152.25 371.75 151.75 372.25 152.75 370.25 153.25zM362.75 152.25 367.75 152.75 368.25 154.75 366.75 156.25 365.25 156.25 362.75 153.75zM382.25 152.25 381.75 153.25 377.25 153.25 376.75 155.25 373.75 154.75 378.25 150.75 380.75 150.75zM372.75 151.25 375.75 150.75 376.25 151.75 373.25 152.25zM365.75 151.25 366.75 150.75 367.25 151.75 366.25 152.25zM371.75 150.25 372.75 149.75 373.25 150.75 372.25 151.25zM354.75 150.25 355.75 149.75 356.25 150.75 355.25 151.25zM401.75 149.25 403.75 148.75 404.25 149.75 402.25 150.25zM395.75 149.25 397.75 148.75 398.25 149.75 396.25 150.25zM384.75 148.75 385.25 150.75 384.25 151.25 384.25 153.75 383.25 154.25 381.75 150.25zM368.25 148.75 369.25 149.25 368.75 151.25 367.75 150.75zM378.75 147.75 379.25 148.75 376.25 151.25 375.75 149.25 377.25 147.75zM401.25 146.75 402.25 147.25 401.75 149.25 400.75 148.75zM398.25 146.75 400.25 147.25 399.75 150.25 397.75 148.75zM394.75 147.25 395.75 146.75 396.25 147.75 395.25 148.25zM389.75 147.25 390.75 146.75 392.25 148.75 390.25 149.25zM378.75 147.25 379.75 146.75 380.25 147.75 379.25 148.25zM374.75 147.25 375.75 146.75 376.25 147.75 375.25 148.25zM392.25 145.75 393.25 146.25 392.75 148.25 391.75 147.75zM370.75 146.25 371.75 145.75 372.25 146.75 371.25 147.25zM361.25 145.75 362.25 146.25 362.25 147.75 363.25 145.75 365.25 147.25 363.75 151.25 362.75 150.75 362.75 149.25 360.75 148.75zM402.25 144.75 403.25 145.25 402.75 147.25 401.75 146.75zM390.75 145.25 391.75 144.75 392.25 145.75 391.25 146.25zM387.75 145.25 388.75 144.75 389.25 145.75 388.25 146.25zM364.75 145.25 365.75 144.75 366.25 145.75 365.25 146.25zM359.75 145.25 360.75 144.75 361.25 145.75 360.25 146.25zM379.75 144.25 380.75 143.75 381.25 144.75 380.25 145.25zM377.75 144.25 378.75 143.75 380.25 145.75 378.25 146.25zM360.75 144.25 361.75 143.75 362.25 144.75 361.25 145.25zM396.25 142.75 397.25 143.25 397.25 144.75 395.25 145.25 394.75 144.25zM388.75 143.25 389.75 142.75 390.25 143.75 389.25 144.25zM386.25 142.75 387.25 143.25 387.25 144.75 385.25 145.25 384.75 144.25zM368.75 143.25 370.75 142.75 372.25 144.75 370.25 146.25zM367.25 142.75 369.25 144.25 368.75 146.25 366.75 144.75zM391.75 142.25 392.75 141.75 395.25 143.75 392.25 144.25zM386.75 142.25 387.75 141.75 388.25 142.75 387.25 143.25zM376.75 142.25 379.75 141.75 380.25 142.75 377.25 143.25zM363.75 142.25 364.75 141.75 366.25 143.75 364.25 144.25zM400.75 141.25 401.75 140.75 402.25 141.75 401.25 142.25zM384.75 141.25 385.75 140.75 386.25 141.75 385.25 142.25zM383.25 140.75 385.25 143.25 384.75 144.25 382.75 143.75zM375.75 141.25 376.75 140.75 377.25 141.75 376.25 142.25zM373.25 140.75 374.75 140.75 375.25 143.75 377.25 144.25 375.75 146.25 373.25 146.25 372.75 144.25 371.75 143.75 371.75 142.25zM370.75 141.25 371.75 140.75 372.25 141.75 371.25 142.25zM359.75 138.25 360.75 137.75 361.25 138.75 360.25 139.25zM373.75 139.75 373.75 138.25 375.25 136.75 378.25 137.25 377.75 138.25 376.25 138.25 375.75 140.25zM363.25 136.75 364.25 137.25 363.75 139.25 362.75 138.75zM366.75 135.25 368.75 134.75 369.25 135.75 367.25 136.25zM362.75 135.25 363.75 134.75 364.25 135.75 363.25 136.25zM367.75 133.25 370.75 132.75 372.25 134.75 369.25 135.25zM364.25 128.75 365.25 129.25 364.75 131.25 363.75 130.75zM359.75 129.25 362.75 128.75 363.25 130.75 362.25 131.25zM360.75 127.25 361.75 126.75 362.25 127.75 361.25 128.25zM352.25 124.25 352.25 124.75 352.75 124.75 352.75 124.25zM306.25 124.25 306.25 125.75 306.75 125.75 306.75 124.25zM262.25 124.25 262.25 124.75 262.75 124.75 262.75 124.25zM227.25 124.25 227.25 124.75 227.75 124.75 227.75 124.25zM280.25 123.25 280.25 124.75 280.75 124.75 280.75 123.25zM272.25 123.25 272.25 123.75 272.75 123.75 272.75 123.25zM249.25 123.25 249.25 123.75 249.75 123.75 249.75 123.25zM193.25 123.25 193.25 123.75 193.75 123.75 193.75 123.25zM190.25 123.25 190.25 123.75 190.75 123.75 190.75 123.25zM311.25 122.25 311.25 122.75 311.75 122.75 311.75 122.25zM296.25 122.25 297.25 124.75 299.75 123.75 299.75 122.25 298.75 123.25zM242.25 122.25 241.25 123.25 242.25 124.25 241.25 125.75 243.75 125.75zM196.25 122.25 195.25 123.75 196.25 124.75 197.75 123.75 199.75 126.75 200.75 125.75 200.75 123.25 199.75 122.25 198.75 123.25zM199.25 122.75 200.25 123.25 199.75 125.25 198.75 124.75zM172.25 123.25 174.75 123.75 174.75 122.25zM332.25 121.25 332.25 121.75 333.75 121.75 333.75 121.25zM183.25 121.25 183.25 121.75 183.75 121.75 183.75 121.25zM353.25 120.25 353.25 121.75 351.25 122.75 353.75 122.75 354.25 126.75 355.75 126.75 354.75 125.75 355.75 124.75 355.75 122.25zM314.25 120.25 314.25 120.75 314.75 120.75 314.75 120.25zM245.25 120.25 245.25 120.75 245.75 120.75 245.75 120.25zM198.25 120.25 198.25 120.75 198.75 120.75 198.75 120.25zM346.25 119.25 346.25 120.75 348.75 120.75 349.25 121.75 350.75 120.75 350.25 120.25 349.25 121.25zM292.25 119.25 292.25 119.75 292.75 119.75 292.75 119.25zM287.25 119.25 287.25 120.75 287.75 120.75 287.75 119.25zM280.25 120.75 281.75 120.75 282.75 119.25 280.25 119.25zM259.25 119.25 259.25 119.75 259.75 119.75 259.75 119.25zM338.25 118.25 338.25 118.75 338.75 118.75 338.75 118.25zM329.25 118.25 329.25 119.75 330.75 120.75 330.75 119.25zM306.25 118.25 306.25 118.75 306.75 118.75 306.75 118.25zM297.25 118.25 297.25 118.75 297.75 118.75 297.75 118.25zM242.25 118.25 242.25 118.75 243.75 118.75 243.75 118.25zM340.25 117.25 340.25 118.75 340.75 118.75 340.75 117.25zM302.25 117.25 302.25 117.75 302.75 117.75 302.75 117.25zM291.25 117.25 291.25 117.75 291.75 117.75 291.75 117.25zM257.25 117.25 257.25 117.75 257.75 117.75 257.75 117.25zM201.25 117.25 202.75 118.75zM167.25 117.25 167.25 117.75 168.75 117.75 168.75 117.25zM164.25 117.25 164.25 117.75 164.75 117.75 164.75 117.25zM325.25 116.25 326.75 117.75zM293.25 116.25 293.25 116.75 293.75 116.75 293.75 116.25zM289.25 116.25 289.25 116.75 289.75 116.75 289.75 116.25zM265.25 115.25 265.25 115.75 265.75 115.75 265.75 115.25zM257.25 115.25 257.25 115.75 257.75 115.75 257.75 115.25zM242.25 115.25 242.25 115.75 242.75 115.75 242.75 115.25zM331.25 114.25 331.25 115.75 331.75 115.75 331.75 114.25zM326.25 114.25 326.25 114.75 326.75 114.75 326.75 114.25zM255.25 114.25 255.25 114.75 255.75 114.75 255.75 114.25zM350.25 113.25 350.25 113.75 350.75 113.75 350.75 113.25zM287.25 113.25 287.25 114.75 287.75 114.75 287.75 113.25zM249.25 113.25 249.25 113.75 249.75 113.75 249.75 113.25zM205.25 113.25 205.25 113.75 207.75 113.75 207.75 113.25zM202.25 113.25 202.25 113.75 203.75 113.75 203.75 113.25zM198.25 113.25 199.25 114.75 200.75 114.75 200.75 113.25zM156.25 113.25 156.25 113.75 156.75 113.75 156.75 113.25zM348.75 113.25 346.25 112.25 346.25 114.75 343.25 115.25 342.75 116.25 341.75 115.75 341.75 113.25 342.75 112.25 340.25 113.25 342.25 116.25 342.25 117.75 343.25 118.25 342.25 119.25 343.25 121.75 337.25 121.25 336.25 120.25 336.25 121.75 338.25 123.25 338.25 124.75 340.75 124.75 341.25 122.75 342.25 123.75 344.75 122.75 343.75 121.75 343.25 116.75 345.75 115.75 346.25 116.75 349.75 117.75 348.75 116.75zM338.75 123.25 339.75 122.75 340.25 123.75 339.25 124.25zM345.75 115.25 347.75 114.75 348.25 115.75 346.25 116.25zM338.75 112.25 336.75 115.25 334.75 114.75 334.25 112.25 333.25 114.75 334.75 114.75 335.25 116.75 333.25 117.25 332.25 118.75 334.75 119.75 334.75 118.25 336.25 116.75 338.75 116.75 337.75 115.75 338.75 114.75zM304.25 112.25 306.75 113.75 306.75 112.25zM252.25 112.25 252.25 112.75 252.75 112.75 252.75 112.25zM300.75 111.25 299.75 114.25 298.75 113.25 296.25 114.25 296.25 115.75 297.75 115.75 298.25 114.75 299.25 115.25 299.25 118.75 300.75 118.75 300.75 116.25 301.75 115.75 301.75 112.25zM299.75 114.25 300.75 113.75 301.25 114.75 300.25 115.25zM274.25 111.25 274.25 111.75 274.75 111.75 274.75 111.25zM258.25 111.25 259.25 112.25 258.25 113.75 259.75 113.75 259.75 112.25zM344.25 110.25 344.25 110.75 345.75 110.75 345.75 110.25zM261.25 110.25 261.25 110.75 261.75 110.75 261.75 110.25zM256.25 110.25 256.25 111.75 256.75 111.75 256.75 110.25zM353.75 109.25 353.25 109.75 354.25 110.75 353.25 111.25 353.25 112.75 354.25 113.75 352.25 114.25 351.25 118.75 352.75 118.75 352.75 116.25 354.75 113.75 353.75 112.75 353.75 111.25 354.75 110.75zM348.25 109.25 348.25 109.75 348.75 109.75 348.75 109.25zM339.25 109.25 339.25 109.75 339.75 109.75 339.75 109.25zM268.25 109.25 268.25 109.75 268.75 109.75 268.75 109.25zM223.25 109.25 223.25 109.75 223.75 109.75 223.75 109.25zM206.25 109.25 207.25 110.75 208.75 109.75zM342.25 108.25 342.25 108.75 343.75 108.75 343.75 108.25zM333.25 108.25 333.25 110.75 336.75 110.75 336.75 108.25 335.75 109.25zM330.25 108.25 331.75 111.75 331.75 109.25zM296.75 108.25 295.25 109.25 294.75 111.25 293.25 111.25 291.25 109.25 293.25 111.25 292.25 112.75 296.75 111.75 296.75 110.25 295.75 109.75zM283.75 108.25 282.25 109.25 282.25 110.75zM278.25 108.25 278.25 108.75 279.75 108.75 279.75 108.25zM249.75 108.25 245.25 109.25 245.25 110.75 247.75 111.75 247.75 110.25zM346.75 107.25 345.25 107.25 345.25 108.75zM299.25 107.25 299.25 108.75 300.75 109.75 300.75 108.25zM213.25 107.25 214.25 109.75 216.75 109.75zM210.25 107.25 210.25 107.75 210.75 107.75 210.75 107.25zM353.75 106.25 352.25 107.75zM342.25 106.25 342.25 106.75 342.75 106.75 342.75 106.25zM303.25 106.25 303.25 107.75 304.75 107.75 304.75 106.25zM282.25 106.25 282.25 106.75 282.75 106.75 282.75 106.25zM246.25 106.25 246.25 107.75 246.75 107.75 246.75 106.25zM204.25 106.25 204.25 106.75 204.75 106.75 204.75 106.25zM336.25 105.25 336.25 105.75 336.75 105.75 336.75 105.25zM306.25 105.25 306.25 105.75 306.75 105.75 306.75 105.25zM296.75 105.25 294.25 106.25 293.25 107.75 295.75 106.75zM288.25 105.25 288.25 105.75 288.75 105.75 288.75 105.25zM162.25 105.25 162.25 106.75 162.75 106.75 162.75 105.25zM345.25 104.25 345.25 104.75 345.75 104.75 345.75 104.25zM334.25 104.25 334.25 104.75 334.75 104.75 334.75 104.25zM291.75 104.25 290.25 104.25 289.25 109.75 287.25 110.75 289.75 110.75 289.75 107.25zM249.25 104.25 249.25 106.75 249.75 106.75 249.75 104.25zM204.25 104.25 204.25 104.75 204.75 104.75 204.75 104.25zM215.25 103.25 215.25 105.75 215.75 105.75 215.75 103.25zM338.25 102.25 339.75 106.75 339.75 103.25zM301.25 102.25 302.75 103.75zM288.25 102.25 288.25 102.75 289.75 102.75 289.75 102.25zM218.25 101.25 219.25 104.75 220.25 105.75 222.75 105.75 222.75 104.25 221.75 103.75 222.75 102.25 221.25 102.25 221.25 103.75 220.25 104.25 218.75 102.75 219.75 101.25zM163.25 101.25 163.25 101.75 163.75 101.75 163.75 101.25zM295.25 100.25 295.25 100.75 295.75 100.75 295.75 100.25zM291.25 100.25 291.25 100.75 291.75 100.75 291.75 100.25zM339.25 100.25 342.75 99.75 343.75 101.75 342.75 99.25 340.25 99.25zM306.75 99.25 305.25 100.75zM293.25 99.25 293.25 99.75 293.75 99.75 293.75 99.25zM216.25 99.25 216.25 99.75 216.75 99.75 216.75 99.25zM346.25 98.25 346.25 99.75 346.75 99.75 346.75 98.25zM344.25 96.25 344.25 96.75 345.75 96.75 345.75 96.25zM342.25 96.25 342.25 96.75 342.75 96.75 342.75 96.25zM232.25 96.25 232.25 96.75 232.75 96.75 232.75 96.25zM228.75 96.25 225.25 97.75 228.75 97.75zM221.25 96.25 221.25 96.75 221.75 96.75 221.75 96.25zM226.25 95.25 226.25 95.75 226.75 95.75 226.75 95.25zM204.25 95.25 204.25 95.75 204.75 95.75 204.75 95.25zM342.25 94.25 342.25 94.75 342.75 94.75 342.75 94.25zM333.25 94.25 333.25 95.75 333.75 95.75 333.75 94.25zM228.25 94.25 228.25 94.75 229.75 94.75 229.75 94.25zM220.25 94.25 220.25 94.75 220.75 94.75 220.75 94.25zM213.75 94.25 212.25 95.75 213.75 95.75zM244.75 93.25 244.25 93.75 245.25 94.75 243.25 95.25 242.75 97.25 241.25 96.25 241.25 97.75 239.75 99.25 235.25 99.25 233.75 103.25 231.75 101.75 233.75 98.25 230.75 101.25 227.25 101.25 226.75 99.25 225.25 99.25 225.25 100.75 224.25 101.25 223.75 100.25 222.25 100.25 221.25 98.25 221.25 99.75 224.25 101.25 224.25 106.75 223.25 107.75 224.75 107.75 226.25 109.25 223.75 114.25 222.75 113.75 222.75 112.25 221.25 112.25 219.75 114.25 218.75 113.75 218.75 112.25 220.25 110.75 221.75 110.75 221.75 108.25 219.25 107.25 217.25 104.25 217.25 107.75 219.75 108.75 220.25 110.75 218.25 111.25 217.75 113.25 215.25 112.25 214.75 114.25 212.75 113.75 213.75 112.75 213.25 111.25 213.25 112.75 211.25 114.25 212.25 115.25 211.75 118.25 209.75 117.75 209.75 114.25 208.25 115.25 209.25 117.75 207.75 119.25 206.75 118.75 206.75 116.25 205.25 116.25 204.25 118.75 205.75 118.75 206.25 119.75 204.75 121.25 203.25 121.25 203.25 124.75 205.75 123.75 207.25 125.25 207.25 126.75 209.75 126.75 210.25 125.75 211.75 126.75 212.25 124.75 213.75 124.75 215.25 126.25 213.25 128.25 213.25 129.75 211.25 130.25 211.25 131.75 209.75 133.25 208.75 132.75 208.75 131.25 207.75 133.25 206.25 133.25 205.75 131.25 204.25 131.25 205.25 132.25 205.25 135.75 207.25 136.25 206.25 138.75 207.25 136.75 208.75 137.75 208.75 136.25 207.25 136.25 206.75 135.25 209.75 134.75 212.25 137.25 211.25 138.75 214.75 141.75 215.75 140.75 215.75 138.25 214.25 138.25 213.75 137.25 215.75 136.75 216.25 135.75 217.25 136.25 217.25 137.75 218.75 137.25 216.75 135.25 214.25 136.25 213.75 134.25 215.25 132.75 218.75 132.75 216.75 131.75 217.25 130.75 218.75 130.75 217.75 129.75 218.25 128.75 219.75 128.75 221.25 130.25 221.25 131.75 222.25 130.75 224.75 130.75 225.75 131.75 224.75 130.25 226.75 129.25 222.25 130.25 219.75 127.75 220.25 125.75 222.25 127.75 224.75 127.75 224.75 124.25 225.75 123.75 224.75 122.75 225.25 120.75 227.75 120.75 228.75 121.75 230.25 119.75 233.25 120.25 230.25 122.25 233.25 124.25 233.25 125.75 231.25 126.25 230.75 125.25 229.25 125.25 230.25 126.25 229.25 127.75 231.25 129.75 232.75 128.25 231.25 128.25 230.75 127.25 234.75 125.75 236.75 122.75 234.75 120.75 236.25 118.75 238.25 120.25 238.75 122.75 238.75 120.25 240.75 119.75 239.75 117.25 238.75 118.25 237.75 117.25 236.75 118.25 234.25 118.25 233.75 116.25 235.25 114.75 236.75 114.75 237.25 112.75 238.75 112.75 239.25 114.75 240.75 115.75 239.75 114.25 243.75 109.25 242.25 109.25 240.75 112.25 239.25 112.25 238.75 111.25 236.75 113.25 234.25 113.25 233.25 112.25 233.25 113.75 234.75 113.75 235.25 114.75 233.25 115.25 232.75 119.25 230.75 118.75 230.75 117.25 231.75 116.75 230.75 115.25 231.75 114.25 230.25 114.25 229.75 113.25 228.25 114.25 225.75 112.25 226.75 111.75 227.25 108.75 228.25 109.25 228.25 111.75 230.75 111.75 233.25 109.75 234.75 109.75 235.25 110.75 238.75 109.75 238.75 108.25 240.25 106.75 241.75 107.75 241.75 104.25 242.75 103.75 243.25 104.75 244.75 104.75 243.75 103.75 243.75 101.25 246.75 100.75 247.75 101.75 246.75 97.25 245.75 96.75 245.75 94.25zM211.75 135.25 212.75 134.75 213.25 135.75 212.25 136.25zM210.75 134.25 211.75 133.75 212.25 134.75 211.25 135.25zM209.75 133.25 210.75 132.75 211.25 133.75 210.25 134.25zM210.75 132.25 213.75 131.75 214.25 133.75 213.25 134.25zM214.75 129.25 215.75 128.75 216.25 129.75 215.25 130.25zM217.75 124.75 219.25 126.75 216.25 129.25 215.75 127.25zM233.75 123.25 234.75 122.75 235.25 123.75 234.25 124.25zM218.75 123.25 223.75 122.75 224.25 123.75 223.25 124.75 224.25 125.75 222.25 126.25 221.75 125.25 219.25 125.25zM216.25 122.75 217.25 123.25 217.25 124.75 215.25 125.25 214.75 124.25zM234.75 122.25 235.75 121.75 236.25 122.75 235.25 123.25zM208.75 122.25 210.75 121.75 211.25 122.75 209.25 123.25zM205.75 122.25 207.75 121.75 208.25 122.75 206.25 123.25zM231.75 122.75 233.25 120.75 235.25 121.25 233.75 123.25zM219.75 119.25 220.75 118.75 221.25 119.75 220.25 120.25zM218.75 118.75 219.25 119.75 218.25 120.25 217.75 122.25 214.75 120.75 215.25 119.75zM213.75 119.25 214.75 118.75 215.25 119.75 214.25 120.25zM207.75 119.25 210.75 118.75 211.75 119.75 212.75 118.75 214.25 121.75 212.25 122.25 209.75 120.25 208.25 121.25zM236.75 118.25 237.75 117.75 238.25 118.75 237.25 119.25zM218.75 117.75 219.25 115.75 221.25 116.25 219.75 118.25zM213.25 115.75 215.25 117.25 213.75 119.25 212.75 118.75zM222.75 119.25 224.75 118.75 225.25 114.75 226.25 115.75 228.75 114.75 229.25 115.75 231.25 116.25 229.75 120.25 227.75 118.25 225.75 120.25 223.25 120.25zM221.75 115.25 222.75 114.75 224.25 116.75 222.25 117.25zM214.75 114.25 215.75 113.75 216.75 114.75 217.75 113.75 218.25 116.75 217.25 117.25 216.75 116.25 215.25 116.25zM230.25 107.75 231.25 108.25 230.75 111.25 229.75 110.75zM226.75 107.25 228.75 106.75 229.25 107.75 227.25 108.25zM232.75 106.25 233.75 105.75 234.25 106.75 233.25 107.25zM233.75 105.25 234.75 104.75 235.25 105.75 234.25 106.25zM239.75 103.75 240.25 106.75 237.75 109.25 235.25 109.25 234.75 106.25 236.75 105.75 237.75 106.75 236.75 105.25zM232.75 104.25 233.75 103.75 234.25 104.75 233.25 105.25zM233.75 103.25 237.75 102.75 238.25 103.75 234.25 104.25zM224.75 104.25 226.75 102.75 227.25 103.75 229.25 104.25 229.25 105.75 227.25 106.25zM231.25 101.75 232.25 102.25 231.75 104.25 230.75 103.75zM227.75 102.25 229.75 101.75 230.25 103.75 229.25 104.25zM225.75 101.25 226.75 100.75 227.25 101.75 226.25 102.25zM244.75 99.25 245.75 98.75 246.25 99.75 245.25 100.25zM222.25 92.25 222.25 92.75 223.75 92.75 223.75 92.25zM343.25 91.25 343.25 91.75 343.75 91.75 343.75 91.25zM329.25 91.25 329.25 91.75 329.75 91.75 329.75 91.25zM335.25 90.25 335.25 90.75 335.75 90.75 335.75 90.25zM247.25 90.25 245.25 91.75 247.75 93.75zM337.25 89.25 337.25 92.75 341.75 91.75 340.25 91.25 339.25 92.25zM231.25 89.25 231.25 89.75 231.75 89.75 231.75 89.25zM211.25 89.25 211.25 89.75 211.75 89.75 211.75 89.25zM224.25 88.25 224.25 89.75 224.75 89.75 224.75 88.25zM227.25 87.25 226.25 88.25 228.25 89.25 227.25 90.75 228.75 90.75 230.75 92.75 229.75 88.25zM341.25 86.25 341.25 86.75 341.75 86.75 341.75 86.25zM222.25 84.25 222.25 84.75 222.75 84.75 222.75 84.25zM334.25 83.25 336.25 85.25 335.25 86.75 336.25 87.75 338.75 87.75 338.75 86.25zM227.25 82.25 227.25 82.75 228.75 82.75 228.75 82.25zM224.25 82.25 224.25 82.75 224.75 82.75 224.75 82.25zM339.75 81.25 338.25 81.25 339.25 82.25 338.25 83.75 339.75 82.75zM224.75 80.25 220.25 81.25 220.25 82.75zM339.25 79.25 339.25 79.75 339.75 79.75 339.75 79.25zM226.25 78.25 226.25 78.75 226.75 78.75 226.75 78.25zM230.25 76.25 230.25 79.75 230.75 79.75 230.75 76.25zM243.25 68.25 243.25 69.75 245.75 71.75zM240.25 68.25 240.25 68.75 241.75 68.75 241.75 68.25z" fill="#f0ee0c" fill-rule="evenodd"/>
<polygon points="237.6,69.9 242.5,68.3 245.5,73.8 248.4,79.7 249.4,85.6 246.5,94.5 247.4,102.4 239.6,103.3 231.7,99.4 225.8,95.5 223.8,87.6 225.8,79.7 231.7,73.8" fill="#d2cf0c"/>
<path d="M229.2 86.0h1.5v1.5h-1zM226.0 84.4h2v1.5h-1zM228.9 94.2h1.5v1h-1zM229.8 101.9h1v1.5h-1.5zM228.3 89.9h2v1.5h-1zM242.6 90.4h1.5v1h-1zM229.4 89.3h2v1.5h-1zM244.0 94.9h1.5v1h-1.5zM233.3 89.5h1.5v1h-1zM230.7 99.4h1v1h-1zM234.2 103.0h2v1.5h-2zM231.5 102.9h1v1h-1.5zM244.1 96.1h1.5v1.5h-1zM231.8 98.2h1.5v1h-1.5zM226.2 85.2h1v1.5h-2zM237.5 88.5h1.5v1h-1.5zM234.1 84.8h2v1h-1.5zM240.2 102.2h1v1.5h-1.5zM231.1 86.9h2v1.5h-2zM239.0 85.5h2v1h-1.5zM230.4 88.8h2v1h-1.5zM236.6 90.9h1.5v1h-1.5zM241.2 90.9h1.5v1h-1.5zM245.6 92.1h1v1h-1zM225.4 98.0h2v1h-2zM224.9 93.3h1v1.5h-1z" fill="#36a211"/>
<polygon points="287,97 293,97 296,105 295,115 291,119 288,112" fill="#d2cf0c"/>
<polygon points="337.9,77.7 340.8,83.6 343.8,95.5 349.7,105.3 353.6,107.3 354.6,113.2 351.7,119.1 347.7,117.1 343.8,107.3 339.9,97.4 337.9,87.6 336,80" fill="#d2cf0c"/>
<polygon points="357.6,126 369.4,127 372.4,134.9 365.5,138.8 357.6,138.8 353.6,132.9" fill="#d2cf0c"/>
<polygon points="252,257 262,255.5 270,259 273,268 272,279 266,286 257,287 250,281 248,270" fill="#d2cf0c"/>
<polygon points="330,161 340,160 345,166 344,180 340,189 332,190 328,178" fill="#36a211"/>
<polygon points="329,198 338,197 341,206 339,218 335,229 328,226" fill="#36a211"/>
<polygon points="389,175.6 395,175 398,179 395,182 389,182" fill="#36a211"/>
<polygon points="366,162 375,161 378,166 373,170 366,169" fill="#36a211"/>
<polygon points="290,172 300,168 310,172 313,190 311,210 302,216 292,208 288,190" fill="#36a211"/>
<polygon points="318,150 330,148 336,152 334,160 322,162" fill="#36a211"/>
<path d="M202.3 129.6 219.7 138.3 230 148 237 157.3 250.8 159.1 264.7 155.6 278.5 150.4 292.4 147 306.2 145.2 327 141.8 344.3 129.6 354.7 119.2" fill="none" stroke="#f0ee0c" stroke-width="3.6" stroke-dasharray="4 1.5 2 2.5 5 1 1.5 2" stroke-opacity="0.8" stroke-linejoin="round"/>
<path d="M167.7 126.2 185 127 202.3 129.6 219.7 138.3 230 148 237 157.3 250.8 159.1 264.7 155.6 278.5 150.4 292.4 147 306.2 145.2 327 141.8 344.3 129.6 354.7 119.2" fill="none" stroke="#1e520a" stroke-width="1.3" stroke-opacity="0.9" stroke-linejoin="round"/>
<path d="M140 136.6 150 132 167.7 126.2M153.9 164.3 170 160 185 155.6 198 158 209 162.5 225 160 237 157.3M327 141.8 340 136 350 132 362 126M295.8 150.4 299.3 160.8M334 164.3 345 168 358 174.7M142.3 159 160 157 173.8 151.2 185.6 152.2 193.5 157 205.3 165 215 169 226.6 162.6 239.6 160.5M142.3 123.6 154 122.7 173.8 127.6 189.6 127.6 200.6 129M106.8 186.7 134.4 176.8 154 165 164 157M144 169 160 159M164 176.8 179.7 159M187.6 111.8 189.6 125.6M245.5 189.4 255 205 265 221M292.8 156 284 172 275 189.4M320 165.8 324 185 328 209M296 147 298 161.5M327.8 144 331 154.5M330 142.8 341.8 134.9 349.7 129 357.6 123M341.8 125 355.6 115.2M120 200 138 192 155 186 170 180 185 176M110 215 130 208 150 204 170 196M200 180 212 190 222 204 228 220M300 100 306 112 312 124 318 136M262 112 266 124 270 138 272 150" fill="none" stroke="#1e520a" stroke-width="0.9" stroke-opacity="0.6" stroke-linejoin="round"/>
<path d="M395 191.5 389 199.4 383 209 375 219 369 234.8 371 246.6M412.7 197.4 404.8 205.3 399 213 393 225 391 236.8 388 250M379 219 389 227 397 234.8M360.7 224.8 368.6 234.7 368.6 250.4 374.5 260.3M372.5 215 380.4 230.7M280 293.7 299.7 289.8 319.4 289.8 335 288M349 234.7 345 254.4 339 274 327 289.8M291.8 280 303.6 278 318 276M275 300 290 306 305 310M255 262 258 272 256 282M262 260 265 270 263 280" fill="none" stroke="#5a5a06" stroke-width="0.9" stroke-dasharray="2 1.3" stroke-opacity="0.75"/>
<path d="M223.5 84.4 221.5 82.4 220.1 79.9 219.4 77.1 218.4 74.4M207.2 92.7 209.7 95.0 211.1 98.2 211.3 101.5 212.6 104.7M220.7 105.5 221.7 103.2 222.6 100.7 223.6 98.3 224.3 95.9M302.9 104.1 303.6 99.9 305.7 96.2 308.7 93.2 312.0 90.6M318.6 104.3 320.9 102.0 323.1 99.3 325.4 97.0 328.4 95.3M340.1 101.5 340.0 98.7 341.0 96.1 342.5 93.8 343.9 91.4M144.8 111.4 139.7 108.5 135.6 104.3 133.4 98.9 132.3 93.1M199.4 110.8 201.3 107.5 204.0 104.8 207.3 103.0 210.7 101.2M207.5 111.5 206.2 106.4 206.9 101.1 209.4 96.4 209.6 91.1M225.8 110.6 228.5 112.4 230.5 114.8 232.3 117.4 233.8 120.2M237.7 116.4 237.1 112.9 237.7 109.4 237.0 106.0 235.0 103.0M251.1 115.4 249.0 113.8 247.3 111.9 245.7 109.7 243.7 108.1M260.0 117.4 262.2 112.9 262.5 107.9 264.3 103.1 264.8 98.1M272.4 112.8 269.3 108.9 265.2 106.1 262.1 102.2 260.3 97.5M294.1 115.4 294.5 119.8 293.0 123.9 292.0 128.2 289.4 131.7M314.5 114.9 315.4 117.8 316.2 120.8 316.0 123.8 316.6 126.9M334.0 114.4 336.8 116.9 339.9 119.2 343.4 120.4 346.9 121.8M345.1 112.9 342.7 109.1 340.9 104.9 338.0 101.4 334.1 99.1M149.4 126.8 149.2 124.3 149.3 121.8 149.5 119.3 150.8 117.2M157.0 122.8 159.2 124.4 160.8 126.5 162.5 128.6 164.2 130.7M171.9 126.0 175.1 122.0 177.3 117.4 180.7 113.5 184.9 110.6M190.3 122.6 193.4 124.3 197.0 124.9 200.2 126.5 203.6 127.4M200.8 123.4 199.6 118.5 199.3 113.5 198.2 108.7 197.8 103.7M210.7 122.5 211.1 118.6 212.7 115.0 214.9 111.7 215.4 107.8M227.2 125.8 230.7 124.1 234.3 122.8 237.7 121.2 240.8 119.0M240.5 126.1 236.1 123.2 232.1 119.8 228.0 116.5 223.2 114.4M263.9 122.3 261.7 119.9 258.9 118.3 255.7 117.5 252.7 116.4M280.5 122.8 278.4 119.4 275.6 116.8 273.2 113.6 271.0 110.4M285.8 122.9 284.4 118.6 283.1 114.3 282.5 109.9 279.9 106.1M301.0 123.5 302.5 121.4 304.7 119.9 307.2 119.0 309.7 118.3M333.6 127.2 331.8 124.0 330.3 120.6 328.6 117.4 327.7 113.8M353.2 127.3 352.6 124.5 351.8 121.8 350.3 119.3 348.6 116.9M159.5 137.9 158.9 133.4 159.0 128.8 159.0 124.2 158.4 119.7M176.9 138.8 181.0 136.2 185.8 135.1 190.2 133.0 195.0 133.0M184.3 135.0 182.4 130.7 179.7 126.9 178.1 122.5 177.0 117.9M201.4 138.3 204.4 143.4 206.5 149.0 208.4 154.6 207.9 160.5M213.6 135.4 210.1 133.6 206.3 133.5 202.6 134.7 199.1 136.1M227.6 132.4 227.6 128.9 228.3 125.4 228.6 121.9 228.7 118.3M240.3 132.9 244.3 137.3 247.7 142.1 252.0 146.3 255.4 151.1M254.5 133.1 257.4 136.8 261.0 139.8 263.7 143.7 267.8 146.0M262.4 133.3 257.3 131.8 252.4 129.9 247.5 127.7 243.6 124.2M280.5 137.0 286.1 138.2 291.8 138.2 297.4 136.7 302.8 134.7M292.9 138.8 296.3 140.1 299.8 141.1 302.8 143.2 304.5 146.4M298.8 139.7 299.6 134.5 300.9 129.4 304.2 125.4 308.7 122.6M320.1 132.7 322.6 130.8 324.3 128.2 326.6 126.2 329.3 124.7M324.3 134.5 326.1 132.4 328.5 131.2 330.9 129.9 333.3 128.7M340.6 136.8 341.8 133.9 343.5 131.3 344.6 128.3 344.5 125.2M359.1 133.3 357.5 129.9 354.8 127.3 352.3 124.6 348.8 123.1M363.8 133.6 362.3 128.4 360.7 123.2 360.4 117.8 361.0 112.4M379.2 136.9 383.0 134.1 386.1 130.6 389.7 127.6 394.3 126.4M147.4 148.6 151.0 144.8 154.4 140.8 157.5 136.6 161.3 133.0M161.7 145.1 158.6 143.5 155.1 142.9 151.8 141.7 149.3 139.2M177.3 148.0 176.2 142.5 174.5 137.2 172.1 132.1 169.1 127.3M185.3 143.5 188.2 144.6 190.8 146.4 193.7 147.6 196.2 149.4M195.7 147.8 192.7 142.7 189.6 137.8 188.3 132.1 187.5 126.3M208.7 146.2 205.8 145.1 203.0 143.9 200.4 142.2 197.7 140.7M224.0 150.7 220.7 148.0 216.6 146.6 212.4 145.8 208.2 146.5M236.8 148.2 238.5 150.5 240.3 152.6 241.7 155.0 241.9 157.8M251.2 145.0 250.0 142.4 249.1 139.7 249.1 136.9 249.7 134.1M267.8 149.4 264.3 145.5 260.1 142.4 255.7 139.3 250.9 137.3M280.0 146.4 282.5 149.3 283.6 153.0 283.4 156.8 284.3 160.5M288.6 149.3 286.0 144.1 282.4 139.4 279.5 134.3 278.6 128.5M307.5 146.8 310.5 148.0 313.2 149.9 316.3 150.9 319.4 152.1M320.3 144.6 323.9 142.3 328.1 141.3 332.4 141.4 336.5 140.1M332.0 146.2 335.5 148.1 339.3 149.2 343.3 149.4 347.1 148.3M344.3 143.4 347.8 140.6 350.7 137.2 352.2 133.0 354.0 128.9M352.7 150.9 354.9 148.4 356.8 145.6 358.3 142.6 359.4 139.4M381.4 144.0 382.8 140.7 384.8 137.7 387.7 135.6 390.8 133.7M148.9 160.3 147.6 155.2 146.2 150.1 145.4 144.9 146.3 139.8M157.4 159.3 157.9 154.6 160.2 150.4 161.1 145.7 162.2 141.1M172.8 156.1 171.9 153.6 171.3 151.0 170.2 148.6 170.0 146.0M187.3 155.6 192.7 157.0 198.2 157.6 203.7 157.8 208.7 160.2M197.0 157.1 202.2 158.8 207.3 160.8 211.4 164.3 216.2 166.9M212.3 159.1 212.3 155.5 210.9 152.2 209.7 148.8 208.8 145.3M228.0 155.3 228.5 149.9 228.7 144.5 229.5 139.1 228.7 133.8M250.8 161.6 247.2 157.0 242.1 154.4 236.5 153.0 230.8 151.8M265.7 154.5 267.9 156.8 270.2 158.9 272.1 161.4 274.0 163.8M280.1 158.1 282.2 161.7 284.7 165.1 288.3 167.4 290.9 170.7M293.1 160.1 297.2 159.8 300.9 158.0 304.5 155.7 308.1 153.7M306.2 158.2 308.6 153.5 308.9 148.2 309.9 143.0 308.6 137.9M314.0 154.9 314.6 152.2 315.7 149.7 317.6 147.7 318.6 145.2M330.1 157.2 328.5 155.0 326.8 152.7 325.4 150.4 323.2 148.6M343.9 161.2 346.4 166.6 348.3 172.3 350.9 177.6 352.2 183.5M353.1 159.0 355.2 160.9 357.6 162.4 360.1 163.8 362.3 165.6M365.6 158.5 368.3 155.5 370.0 151.9 372.8 149.0 375.9 146.5M380.6 154.6 384.6 157.6 389.4 159.0 393.5 161.8 398.1 163.9M393.8 160.1 399.0 161.8 404.1 163.8 409.3 165.4 413.7 168.6M409.2 159.3 408.6 156.5 407.2 154.0 406.4 151.2 404.7 148.9M424.1 158.8 422.4 154.7 422.4 150.2 422.0 145.8 421.2 141.4M430.9 157.0 434.2 158.6 437.7 160.2 441.3 161.3 445.0 162.2M147.5 166.6 150.7 162.0 155.5 159.2 159.5 155.4 164.8 153.5M159.4 167.9 162.4 172.3 166.7 175.5 171.6 177.4 176.2 180.1M198.7 165.8 198.2 160.1 196.3 154.6 195.8 148.9 195.9 143.2M211.4 167.8 211.3 173.6 213.1 179.0 217.0 183.2 219.4 188.3M222.5 169.2 225.2 170.4 227.2 172.5 228.7 175.2 230.8 177.2M242.6 168.0 244.1 164.0 245.7 160.1 248.5 157.0 251.0 153.6M254.3 168.6 253.7 164.4 253.5 160.1 254.2 155.9 253.8 151.7M262.7 169.6 265.1 167.9 268.0 167.3 270.7 166.2 273.1 164.5M275.3 169.3 271.6 165.1 268.6 160.3 266.6 155.1 262.5 151.2M285.3 171.1 285.2 168.2 284.2 165.6 282.7 163.1 280.4 161.5M303.1 168.7 300.7 167.9 298.9 166.0 296.4 165.1 294.2 163.8M315.6 169.7 317.8 172.9 318.7 176.7 320.7 180.1 321.5 183.9M330.2 169.5 327.4 167.6 324.2 166.5 320.9 166.6 317.5 166.0M341.2 170.9 345.1 172.8 348.3 175.6 352.3 177.2 356.2 179.0M354.5 170.0 357.4 169.7 360.1 170.6 362.9 171.3 365.7 171.0M383.5 171.2 381.7 169.1 379.5 167.2 377.6 165.1 375.7 163.0M410.0 167.3 410.8 164.1 412.6 161.4 415.3 159.6 418.2 158.0M424.2 172.2 426.1 168.9 428.1 165.8 431.0 163.5 434.5 162.4M119.0 182.4 122.3 186.4 126.2 189.8 130.3 193.0 134.0 196.6M150.2 176.2 153.9 174.4 158.0 173.7 162.2 174.2 166.3 174.4M159.6 182.3 164.6 179.7 169.1 176.5 173.2 172.7 175.6 167.7M176.3 176.4 173.7 171.0 169.9 166.4 165.3 162.6 161.4 158.0M184.6 177.4 187.1 178.4 189.1 180.2 191.6 181.2 194.4 181.3M200.5 182.1 199.7 179.3 198.0 177.1 197.3 174.3 195.6 172.0M211.8 182.6 213.3 178.4 215.1 174.3 218.4 171.3 222.4 169.3M238.0 176.1 238.3 170.5 240.0 165.2 239.9 159.6 239.5 154.1M253.3 179.7 258.4 182.2 262.5 186.1 267.8 188.4 272.6 191.5M268.5 181.0 271.8 185.3 276.4 188.1 280.6 191.4 285.7 193.1M272.6 180.4 277.8 177.7 281.7 173.3 283.9 167.9 288.1 163.8M294.7 177.4 297.5 177.6 300.3 178.0 303.2 178.1 305.9 179.1M299.5 183.2 299.0 178.3 300.4 173.7 301.6 168.9 302.8 164.2M319.5 176.2 321.7 173.7 324.2 171.7 327.4 171.0 330.3 169.4M328.1 182.3 329.9 177.3 331.1 172.2 330.6 166.9 329.7 161.7M345.4 178.8 347.2 173.9 350.3 169.8 353.2 165.4 355.9 160.9M351.3 180.3 350.2 177.8 349.1 175.3 349.1 172.6 349.6 169.9M372.2 177.6 376.2 179.7 380.7 179.9 385.1 179.0 389.6 179.2M377.6 181.1 381.2 179.5 385.0 179.0 388.9 178.7 392.4 177.0M392.3 183.6 390.2 179.1 389.7 174.0 389.7 168.9 388.0 164.2M410.0 180.6 408.8 176.7 408.3 172.7 408.3 168.7 409.7 164.8M420.4 177.6 423.3 180.5 426.1 183.5 429.8 185.4 432.6 188.4M108.8 194.6 112.4 190.6 116.8 187.5 122.1 186.3 127.5 186.6M120.7 187.5 125.8 186.0 131.2 185.7 136.5 185.3 141.8 185.2M129.3 188.3 126.6 184.9 123.1 182.4 118.9 181.3 114.7 180.5M150.4 190.6 153.1 195.1 157.4 198.1 162.5 199.8 167.7 200.4M158.4 191.8 157.2 186.8 157.0 181.8 155.1 177.0 154.1 172.0M176.0 191.3 180.5 193.4 184.2 196.7 187.7 200.3 192.0 202.8M187.2 193.6 191.9 189.8 195.7 185.2 199.6 180.6 202.9 175.6M195.4 191.4 199.5 189.6 202.9 186.7 205.4 183.1 206.4 178.7M214.1 189.3 219.2 188.7 224.1 190.1 229.0 191.6 234.1 191.9M236.7 192.9 234.8 190.5 232.9 188.1 231.0 185.6 229.7 182.8M251.7 193.9 249.7 190.2 246.7 187.2 244.3 183.7 241.7 180.2M259.2 190.1 256.2 186.6 254.4 182.3 252.9 177.9 250.5 174.0M278.4 189.2 277.5 186.4 275.7 184.2 274.9 181.4 274.7 178.5M292.4 187.9 294.0 184.1 294.2 180.0 292.6 176.3 291.2 172.4M314.7 192.7 313.1 190.6 311.1 188.9 308.5 188.0 305.9 187.7M342.4 192.2 341.3 188.5 339.4 185.1 338.7 181.3 336.9 177.8M354.8 194.2 354.7 190.7 354.1 187.2 354.6 183.8 355.7 180.5M371.3 191.2 370.9 188.6 369.7 186.2 367.8 184.4 365.5 183.0M110.7 204.7 112.3 201.9 113.8 198.9 115.6 196.2 116.3 193.0M122.4 205.7 126.0 206.5 129.7 206.9 133.0 208.5 135.3 211.3M131.6 202.5 134.4 203.5 137.3 203.5 140.2 203.6 142.9 202.5M162.2 201.7 162.4 199.0 163.1 196.3 163.2 193.6 162.3 191.0M174.3 205.4 176.1 207.8 178.0 210.0 180.5 211.5 183.1 213.0M189.2 200.1 190.1 197.5 189.9 194.7 189.9 192.0 188.8 189.4M200.9 201.3 203.9 197.1 207.8 193.8 211.9 190.8 216.4 188.2M211.3 199.2 208.9 193.8 208.6 187.9 208.6 181.9 206.5 176.4M225.6 199.5 226.8 193.9 229.8 189.1 234.3 185.7 237.7 181.1M247.2 202.1 245.0 197.8 241.3 194.7 238.2 191.0 236.7 186.4M268.9 198.3 266.8 194.9 265.0 191.1 262.1 188.2 260.3 184.5M273.0 203.0 269.7 200.3 265.8 198.8 261.5 198.7 257.4 199.7M293.1 199.1 297.6 196.4 301.8 193.3 306.8 192.2 311.8 190.7M304.3 204.6 304.9 201.4 305.4 198.1 305.0 194.9 304.0 191.8M313.0 198.7 314.0 202.7 314.7 206.6 315.3 210.6 317.5 214.0M327.6 199.7 329.0 203.1 331.5 205.6 333.3 208.8 336.2 211.0M346.6 204.0 348.8 200.8 351.0 197.6 353.1 194.3 356.0 191.7M359.4 200.2 362.4 202.5 365.8 204.2 369.3 205.7 373.0 206.5M367.4 204.4 368.0 207.8 368.1 211.2 367.7 214.6 367.4 218.0M118.2 213.2 121.3 210.6 124.9 208.9 128.5 207.2 132.3 205.7M137.0 211.2 137.1 208.6 138.2 206.1 140.0 204.1 141.9 202.2M163.2 213.3 166.4 211.6 169.8 210.7 173.3 210.3 176.8 211.2M184.2 211.8 186.8 215.4 190.6 217.6 194.7 219.4 198.9 221.0M194.5 211.5 192.7 208.1 192.1 204.4 190.8 200.8 190.5 197.0M214.1 209.8 218.2 212.1 221.6 215.4 224.0 219.4 225.2 223.9M221.4 214.8 223.6 213.2 226.4 212.6 229.0 211.6 231.4 210.2M235.9 212.0 235.5 207.8 234.5 203.6 232.6 199.8 232.2 195.6M253.1 215.3 254.9 217.1 256.4 219.1 258.0 221.0 259.0 223.3M267.0 213.6 265.5 210.4 264.0 207.2 262.6 204.0 261.6 200.6M292.7 210.7 294.0 206.2 295.8 201.8 299.1 198.4 303.3 196.2M302.6 214.8 306.4 217.2 309.1 220.7 311.8 224.4 314.3 228.0M317.1 215.1 314.9 213.3 312.4 212.2 309.8 211.3 307.0 211.3M331.8 214.5 332.6 209.0 334.4 203.7 335.5 198.3 338.3 193.5M342.1 211.7 339.9 210.1 338.1 208.0 336.3 206.0 334.5 203.9M351.4 213.8 350.1 209.5 348.9 205.0 348.1 200.5 347.6 196.0M132.2 221.8 135.9 217.6 139.0 212.9 142.2 208.2 145.4 203.6M148.0 225.8 147.5 223.3 148.1 220.9 148.8 218.4 149.9 216.1M160.7 227.8 158.4 224.4 157.1 220.5 155.2 216.8 152.6 213.7M176.6 220.1 179.3 221.9 181.7 224.0 183.3 226.7 183.6 229.9M201.9 223.5 198.6 220.7 194.8 218.7 192.2 215.2 188.4 213.1M228.3 224.9 230.3 219.5 232.1 214.1 233.8 208.6 233.8 202.8M238.5 226.9 239.9 221.1 241.3 215.3 243.6 209.9 247.3 205.2M248.6 225.0 252.9 229.0 257.1 233.1 261.0 237.5 264.6 242.1M261.7 220.2 260.7 217.1 261.1 213.9 261.2 210.7 261.9 207.5M273.4 220.7 275.0 218.6 276.7 216.7 277.9 214.5 279.5 212.5M287.0 220.9 284.6 216.2 281.3 212.1 277.5 208.5 272.9 206.0M306.7 226.7 308.5 224.9 309.4 222.5 309.9 220.0 309.5 217.5M315.6 221.6 312.1 218.8 309.4 215.4 307.4 211.4 304.6 208.0M327.8 225.8 328.5 222.2 328.7 218.5 328.7 214.8 328.1 211.2M145.5 234.0 145.9 237.6 146.7 241.1 148.0 244.5 149.0 248.0M199.1 233.8 196.4 230.9 194.7 227.4 192.1 224.4 189.2 221.7M214.8 234.7 214.6 230.3 216.4 226.4 218.2 222.4 220.1 218.5M227.6 234.7 230.4 233.1 232.4 230.5 233.6 227.4 234.4 224.2M242.0 234.9 242.2 230.4 243.9 226.3 244.2 221.8 245.3 217.5M255.6 235.9 257.4 239.0 258.2 242.5 259.9 245.7 261.9 248.7M268.7 234.2 266.8 229.3 264.7 224.6 262.3 220.0 262.0 214.8M280.5 233.4 285.5 232.7 290.2 231.2 295.0 230.3 300.0 230.2M291.4 232.8 295.0 235.3 297.6 238.8 299.2 242.8 299.7 247.2M301.4 236.9 302.9 233.1 305.0 229.5 307.9 226.6 311.7 225.0M319.0 238.5 321.7 233.5 322.4 227.8 322.5 222.1 323.6 216.5M324.2 231.9 320.1 228.6 315.7 225.8 311.8 222.4 306.8 220.7M338.4 236.5 337.0 233.6 336.8 230.4 336.1 227.3 335.1 224.3M196.5 243.8 197.2 239.4 196.6 235.0 194.5 231.1 191.0 228.3M220.3 248.8 221.6 243.4 221.3 237.7 221.8 232.2 223.7 226.9M235.7 245.9 239.0 242.9 243.3 241.3 247.8 241.3 252.2 242.1M246.3 245.0 242.5 242.0 239.3 238.3 236.4 234.5 232.7 231.3M262.8 243.1 261.2 240.9 259.9 238.6 259.2 236.0 258.4 233.4M272.9 246.2 277.2 249.3 282.0 251.6 286.6 254.2 291.9 255.0M303.6 249.2 305.8 252.1 308.5 254.4 312.0 255.5 315.6 255.3M311.6 243.7 310.8 238.4 309.9 233.0 310.5 227.6 310.8 222.2M331.2 249.8 334.0 244.7 335.0 239.1 337.1 233.7 340.0 228.8M339.1 249.9 343.6 251.9 347.5 255.2 351.5 258.2 356.1 260.1M201.6 256.5 205.3 257.1 209.0 257.6 212.8 257.4 216.5 257.8M210.6 258.2 208.9 254.7 207.6 250.9 205.7 247.4 203.2 244.4M229.0 256.3 228.6 252.5 228.3 248.7 229.3 245.0 229.6 241.1M241.1 259.8 239.5 255.7 237.8 251.7 235.2 248.2 232.9 244.5M253.9 260.4 253.4 256.2 251.4 252.4 250.8 248.2 249.3 244.2M281.0 260.8 275.7 259.1 270.5 256.9 266.0 253.5 261.7 249.8M293.8 254.4 291.5 253.1 288.9 252.7 286.3 252.5 283.8 253.2M300.9 259.8 298.7 258.2 295.9 257.5 293.1 257.8 290.5 256.8M325.6 253.4 326.4 257.1 327.7 260.6 328.9 264.2 330.7 267.5M234.9 264.9 235.1 260.6 236.2 256.5 238.2 252.7 239.7 248.6M247.1 265.1 247.6 262.3 248.7 259.7 250.5 257.5 251.9 255.0M294.4 266.0 297.1 267.4 299.1 269.7 301.9 271.1 304.9 271.9M300.7 266.9 302.8 262.6 304.3 258.0 305.1 253.3 304.6 248.6M313.3 265.8 313.4 262.2 313.0 258.7 311.2 255.7 308.6 253.3M274.9 277.9 272.2 275.4 270.8 272.1 269.1 268.9 268.5 265.4M262.1 288.1 262.3 292.3 262.0 296.4 260.8 300.5 259.8 304.5M266.7 303.3 265.5 299.5 264.2 295.7 263.7 291.7 263.6 287.7" fill="none" stroke="#1e520a" stroke-width="0.8" stroke-opacity="0.5" stroke-linejoin="round"/>
</g></svg>
</body></html>
